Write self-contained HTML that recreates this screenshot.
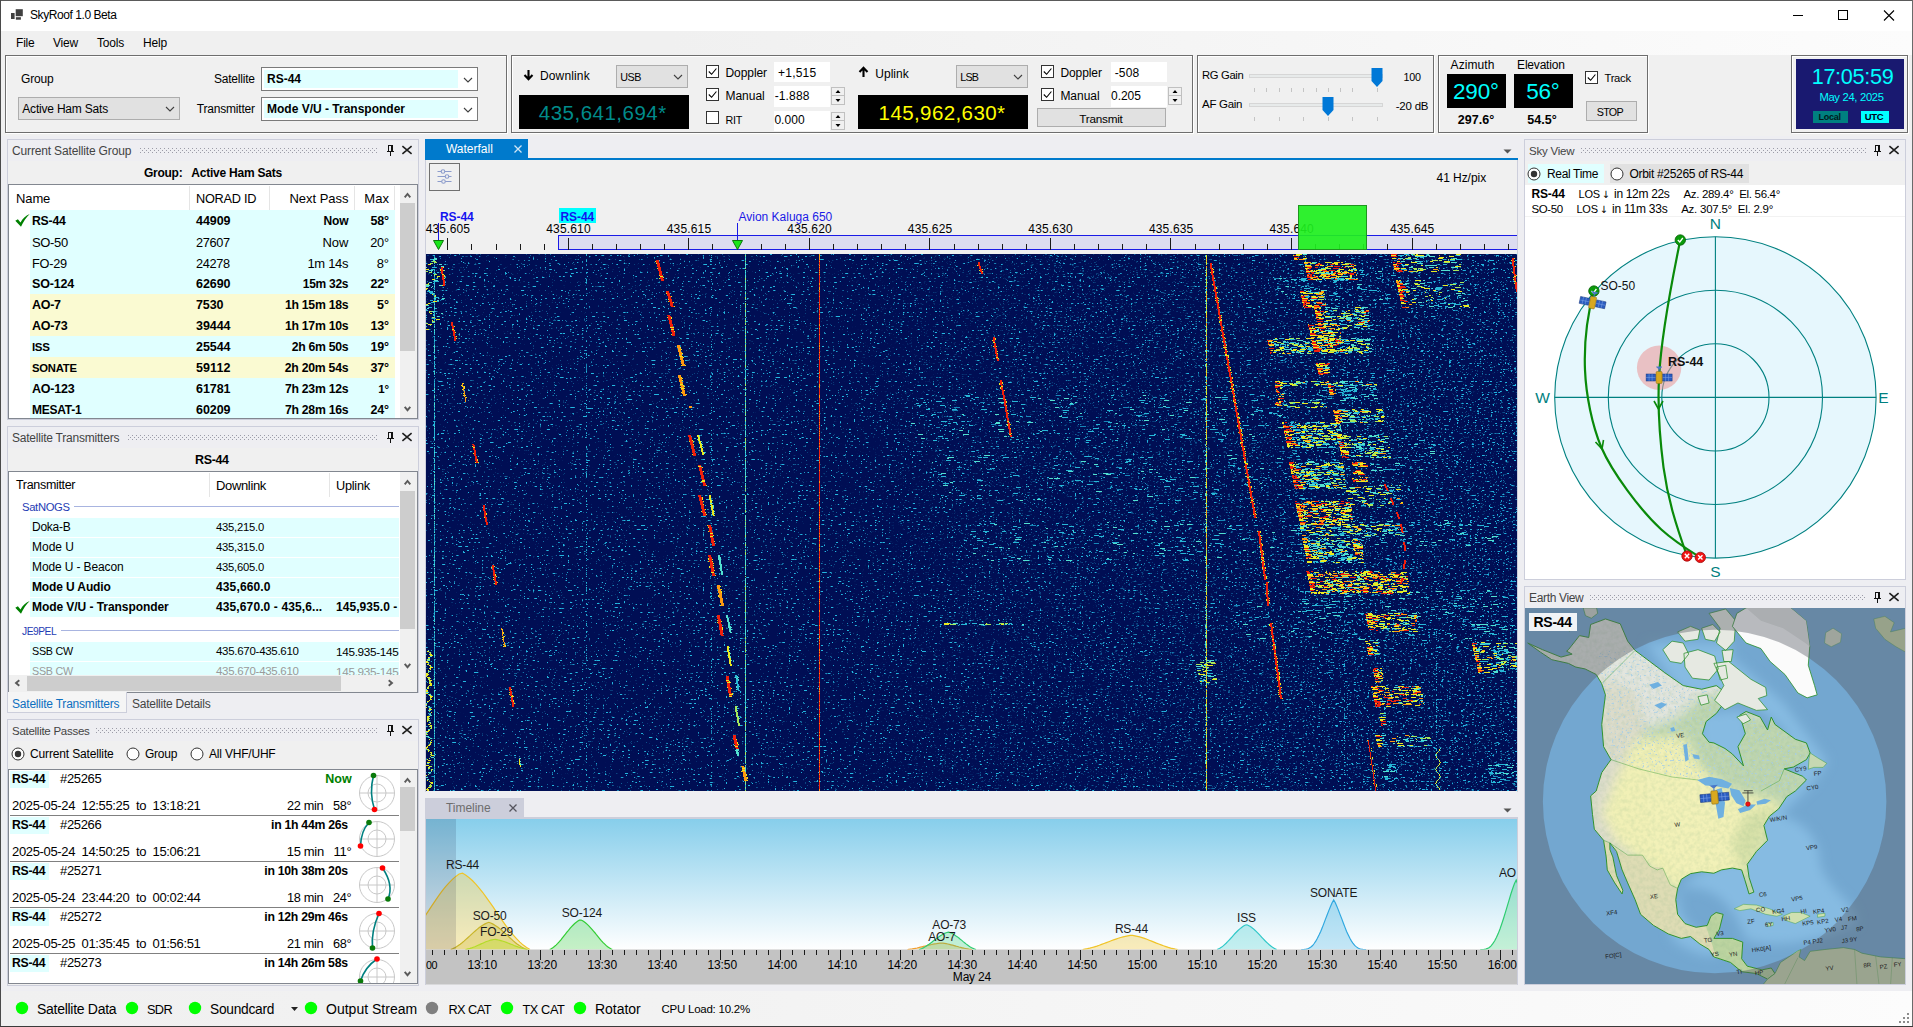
<!DOCTYPE html>
<html><head><meta charset="utf-8"><title>SkyRoof 1.0 Beta</title>
<style>
html,body{margin:0;padding:0;width:1913px;height:1027px;overflow:hidden;background:#f0f0f0;}
body{font-family:"Liberation Sans",sans-serif;font-size:12px;color:#000;position:relative;}
.a{position:absolute;display:block;}
.t{position:absolute;white-space:nowrap;}
svg text{font-family:"Liberation Sans",sans-serif;}
</style></head><body>
<!-- p1_top -->
<div class="a" style="left:0px;top:0px;width:1913px;height:1027px;background:#f0f0f0;"></div>
<div class="a" style="left:0px;top:0px;width:1913px;height:31px;background:#ffffff;"></div>
<div class="a" style="left:1px;top:31px;width:1911px;height:24px;background:linear-gradient(90deg,#f0f0f0 0%,#f0f0f0 35%,#fcfcfc 100%);"></div>
<div class="a" style="left:0px;top:0px;width:1913px;height:1px;background:#5a5a5a;"></div>
<div class="a" style="left:0px;top:0px;width:1px;height:1027px;background:#4a4a4a;"></div>
<div class="a" style="left:1912px;top:0px;width:1px;height:1027px;background:#6a6a6a;"></div>
<div class="a" style="left:0px;top:1026px;width:1913px;height:1px;background:#3a3a3a;"></div>
<svg class="a" style="left:10px;top:8px" width="14" height="13" viewBox="0 0 14 13"><rect x="5.7" y="1.2" width="7.1" height="7" fill="#404040"/><rect x="1" y="5" width="3.6" height="6" fill="#404040"/><rect x="5.9" y="9.2" width="5" height="2.5" fill="#404040"/></svg>
<div class="t" style="top:7px;height:17px;line-height:17px;font-size:12px;letter-spacing:-0.43px;left:30px;">SkyRoof 1.0 Beta</div>
<svg class="a" style="left:1780px;top:1px" width="132" height="30" viewBox="0 0 132 30"><path d="M13 14.5h10" stroke="#000" stroke-width="1" fill="none"/><rect x="58.5" y="9.5" width="9" height="9" stroke="#000" fill="none"/><path d="M104 9.5l10 10M114 9.5l-10 10" stroke="#000" stroke-width="1.1" fill="none"/></svg>
<div class="t" style="top:35px;height:17px;line-height:17px;font-size:12px;letter-spacing:-0.2px;left:16px;">File</div>
<div class="t" style="top:35px;height:17px;line-height:17px;font-size:12px;letter-spacing:-0.2px;left:53px;">View</div>
<div class="t" style="top:35px;height:17px;line-height:17px;font-size:12px;letter-spacing:-0.2px;left:97px;">Tools</div>
<div class="t" style="top:35px;height:17px;line-height:17px;font-size:12px;letter-spacing:-0.2px;left:143px;">Help</div>
<div class="a" style="left:5px;top:55px;width:502px;height:78px;box-sizing:border-box;border:1px solid #6e6e6e;box-shadow:inset 1px 1px 0 #fff, 1px 1px 0 #fff;"></div>
<div class="a" style="left:511px;top:55px;width:682px;height:78px;box-sizing:border-box;border:1px solid #6e6e6e;box-shadow:inset 1px 1px 0 #fff, 1px 1px 0 #fff;"></div>
<div class="a" style="left:1197px;top:55px;width:237px;height:78px;box-sizing:border-box;border:1px solid #6e6e6e;box-shadow:inset 1px 1px 0 #fff, 1px 1px 0 #fff;"></div>
<div class="a" style="left:1438px;top:55px;width:210px;height:78px;box-sizing:border-box;border:1px solid #6e6e6e;box-shadow:inset 1px 1px 0 #fff, 1px 1px 0 #fff;"></div>
<div class="a" style="left:1791px;top:55px;width:117px;height:78px;box-sizing:border-box;border:1px solid #6e6e6e;box-shadow:inset 1px 1px 0 #fff, 1px 1px 0 #fff;"></div>
<div class="t" style="top:71px;height:17px;line-height:17px;font-size:12px;letter-spacing:-0.2px;left:21px;">Group</div>
<div class="a" style="left:18px;top:97px;width:162px;height:23px;background:#e1e1e1;box-sizing:border-box;border:1px solid #adadad;"></div><div class="t" style="top:101px;height:17px;line-height:17px;font-size:12px;letter-spacing:-0.2px;left:22.3px;">Active Ham Sats</div><svg class="a" style="left:165px;top:105.5px" width="10" height="7" viewBox="0 0 10 7"><path d="M1 1l4 4 4-4" stroke="#404040" stroke-width="1.1" fill="none"/></svg>
<div class="t" style="top:71px;height:17px;line-height:17px;font-size:12px;letter-spacing:-0.2px;right:1658.2px;text-align:right;">Satellite</div>
<div class="t" style="top:101px;height:17px;line-height:17px;font-size:12px;letter-spacing:-0.2px;right:1658.2px;text-align:right;">Transmitter</div>
<div class="a" style="left:261px;top:67px;width:217px;height:24px;background:#fff;box-sizing:border-box;border:1px solid #7a7a7a;"></div><div class="a" style="left:264px;top:70px;width:194px;height:18px;background:#e0ffff;"></div><div class="t" style="top:71px;height:17px;line-height:17px;font-size:12px;font-weight:bold;left:267px;">RS-44</div><svg class="a" style="left:463px;top:76.5px" width="10" height="7" viewBox="0 0 10 7"><path d="M1 1l4 4 4-4" stroke="#404040" stroke-width="1.1" fill="none"/></svg>
<div class="a" style="left:261px;top:97px;width:217px;height:24px;background:#fff;box-sizing:border-box;border:1px solid #7a7a7a;"></div><div class="a" style="left:264px;top:100px;width:194px;height:18px;background:#e0ffff;"></div><div class="t" style="top:101px;height:17px;line-height:17px;font-size:12px;font-weight:bold;left:267px;">Mode V/U - Transponder</div><svg class="a" style="left:463px;top:106.5px" width="10" height="7" viewBox="0 0 10 7"><path d="M1 1l4 4 4-4" stroke="#404040" stroke-width="1.1" fill="none"/></svg>
<svg class="a" style="left:523px;top:69px" width="11" height="12" viewBox="0 0 11 12"><path d="M5.5 1v9M1.5 6l4 4.2 4-4.2" stroke="#000" stroke-width="2.1" fill="none"/></svg>
<div class="t" style="top:68px;height:17px;line-height:17px;font-size:12px;letter-spacing:0.139px;left:540px;">Downlink</div>
<div class="a" style="left:616px;top:65px;width:72px;height:23px;background:#e1e1e1;box-sizing:border-box;border:1px solid #adadad;"></div><div class="t" style="top:69px;height:17px;line-height:17px;font-size:10.75px;letter-spacing:-0.535px;left:620.3px;">USB</div><svg class="a" style="left:673px;top:73.5px" width="10" height="7" viewBox="0 0 10 7"><path d="M1 1l4 4 4-4" stroke="#404040" stroke-width="1.1" fill="none"/></svg>
<div class="a" style="left:519px;top:95px;width:170px;height:34px;background:#000;"></div>
<div class="t" style="top:97px;height:32px;line-height:32px;font-size:20.5px;color:#008b8b;letter-spacing:0.503px;left:402.75px;width:400px;text-align:center;">435,641,694*</div>
<div class="a" style="left:706px;top:65px;width:13px;height:13px;background:#fff;box-sizing:border-box;border:1px solid #333;"></div><svg class="a" style="left:706px;top:65px" width="13" height="13" viewBox="0 0 13 13"><path d="M2.8 6.5l2.8 2.8 4.8-5.8" stroke="#000" stroke-width="1.1" fill="none"/></svg>
<div class="t" style="top:65px;height:17px;line-height:17px;font-size:12px;letter-spacing:-0.074px;left:725.5px;">Doppler</div>
<div class="a" style="left:706px;top:88px;width:13px;height:13px;background:#fff;box-sizing:border-box;border:1px solid #333;"></div><svg class="a" style="left:706px;top:88px" width="13" height="13" viewBox="0 0 13 13"><path d="M2.8 6.5l2.8 2.8 4.8-5.8" stroke="#000" stroke-width="1.1" fill="none"/></svg>
<div class="t" style="top:88px;height:17px;line-height:17px;font-size:12px;letter-spacing:-0.026px;left:725.5px;">Manual</div>
<div class="a" style="left:706px;top:111px;width:13px;height:13px;background:#fff;box-sizing:border-box;border:1px solid #333;"></div>
<div class="t" style="top:112px;height:17px;line-height:17px;font-size:10.75px;letter-spacing:-0.272px;left:725.5px;">RIT</div>
<div class="a" style="left:774px;top:62px;width:56px;height:20px;background:#fff;"></div>
<div class="t" style="top:65px;height:17px;line-height:17px;font-size:12px;letter-spacing:0.228px;left:778px;">+1,515</div>
<div class="a" style="left:774px;top:86px;width:56px;height:21px;background:#fff;"></div>
<div class="t" style="top:88px;height:17px;line-height:17px;font-size:12px;letter-spacing:0.13px;left:774.7px;">-1.888</div>
<div class="a" style="left:774px;top:111px;width:56px;height:20px;background:#fff;"></div>
<div class="t" style="top:112px;height:17px;line-height:17px;font-size:12px;letter-spacing:0.035px;left:774.4px;">0.000</div>
<div class="a" style="left:831px;top:87px;width:14px;height:18px;background:#f0f0f0;box-sizing:border-box;border:1px solid #c0c0c0;"></div><div class="a" style="left:831px;top:95px;width:14px;height:1px;background:#c0c0c0;"></div><svg class="a" style="left:831px;top:87px" width="14" height="18" viewBox="0 0 14 18"><path d="M4.5 6l2.5-3 2.5 3zM4.5 12l2.5 3 2.5-3z" fill="#000"/></svg>
<div class="a" style="left:831px;top:112px;width:14px;height:18px;background:#f0f0f0;box-sizing:border-box;border:1px solid #c0c0c0;"></div><div class="a" style="left:831px;top:120px;width:14px;height:1px;background:#c0c0c0;"></div><svg class="a" style="left:831px;top:112px" width="14" height="18" viewBox="0 0 14 18"><path d="M4.5 6l2.5-3 2.5 3zM4.5 12l2.5 3 2.5-3z" fill="#000"/></svg>
<svg class="a" style="left:858px;top:66px" width="11" height="12" viewBox="0 0 11 12"><path d="M5.5 11V2M1.5 6l4-4.2 4 4.2" stroke="#000" stroke-width="2.1" fill="none"/></svg>
<div class="t" style="top:66px;height:17px;line-height:17px;font-size:12px;letter-spacing:0.059px;left:875.2px;">Uplink</div>
<div class="a" style="left:956px;top:65px;width:72px;height:23px;background:#e1e1e1;box-sizing:border-box;border:1px solid #adadad;"></div><div class="t" style="top:69px;height:17px;line-height:17px;font-size:10.75px;letter-spacing:-0.873px;left:960.3px;">LSB</div><svg class="a" style="left:1013px;top:73.5px" width="10" height="7" viewBox="0 0 10 7"><path d="M1 1l4 4 4-4" stroke="#404040" stroke-width="1.1" fill="none"/></svg>
<div class="a" style="left:858px;top:95px;width:170px;height:34px;background:#000;"></div>
<div class="t" style="top:97px;height:32px;line-height:32px;font-size:20.5px;color:#ffff00;letter-spacing:0.403px;left:742.0px;width:400px;text-align:center;">145,962,630*</div>
<div class="a" style="left:1041px;top:65px;width:13px;height:13px;background:#fff;box-sizing:border-box;border:1px solid #333;"></div><svg class="a" style="left:1041px;top:65px" width="13" height="13" viewBox="0 0 13 13"><path d="M2.8 6.5l2.8 2.8 4.8-5.8" stroke="#000" stroke-width="1.1" fill="none"/></svg>
<div class="t" style="top:65px;height:17px;line-height:17px;font-size:12px;letter-spacing:-0.074px;left:1060.4px;">Doppler</div>
<div class="a" style="left:1041px;top:88px;width:13px;height:13px;background:#fff;box-sizing:border-box;border:1px solid #333;"></div><svg class="a" style="left:1041px;top:88px" width="13" height="13" viewBox="0 0 13 13"><path d="M2.8 6.5l2.8 2.8 4.8-5.8" stroke="#000" stroke-width="1.1" fill="none"/></svg>
<div class="t" style="top:88px;height:17px;line-height:17px;font-size:12px;letter-spacing:-0.026px;left:1060.4px;">Manual</div>
<div class="a" style="left:1111px;top:62px;width:56px;height:20px;background:#fff;"></div>
<div class="t" style="top:65px;height:17px;line-height:17px;font-size:12px;letter-spacing:0.171px;left:1114.7px;">-508</div>
<div class="a" style="left:1111px;top:86px;width:56px;height:21px;background:#fff;"></div>
<div class="t" style="top:88px;height:17px;line-height:17px;font-size:12px;letter-spacing:-0.045px;left:1111px;">0.205</div>
<div class="a" style="left:1168px;top:87px;width:14px;height:18px;background:#f0f0f0;box-sizing:border-box;border:1px solid #c0c0c0;"></div><div class="a" style="left:1168px;top:95px;width:14px;height:1px;background:#c0c0c0;"></div><svg class="a" style="left:1168px;top:87px" width="14" height="18" viewBox="0 0 14 18"><path d="M4.5 6l2.5-3 2.5 3zM4.5 12l2.5 3 2.5-3z" fill="#000"/></svg>
<div class="a" style="left:1037px;top:108px;width:129px;height:19px;background:#e1e1e1;box-sizing:border-box;border:1px solid #adadad;"></div>
<div class="t" style="top:110px;height:17px;line-height:17px;font-size:11.75px;letter-spacing:-0.232px;left:1079.2px;">Transmit</div>
<div class="t" style="top:67px;height:17px;line-height:17px;font-size:11.25px;letter-spacing:-0.338px;left:1202px;">RG Gain</div>
<div class="t" style="top:96px;height:17px;line-height:17px;font-size:11.5px;letter-spacing:-0.283px;left:1202px;">AF Gain</div>
<div class="a" style="left:1249px;top:74px;width:134px;height:4px;background:#e7eaea;box-sizing:border-box;border:1px solid #d6d6d6;"></div><svg class="a" style="left:1371px;top:67px" width="12" height="21" viewBox="0 0 12 21"><path d="M0.5 1h11v13l-5.5 6-5.5-6z" fill="#0078d7"/></svg><div class="a" style="left:1254px;top:88px;width:1px;height:4px;background:#c4c4c4;"></div><div class="a" style="left:1266px;top:88px;width:1px;height:4px;background:#c4c4c4;"></div><div class="a" style="left:1279px;top:88px;width:1px;height:4px;background:#c4c4c4;"></div><div class="a" style="left:1291px;top:88px;width:1px;height:4px;background:#c4c4c4;"></div><div class="a" style="left:1303px;top:88px;width:1px;height:4px;background:#c4c4c4;"></div><div class="a" style="left:1316px;top:88px;width:1px;height:4px;background:#c4c4c4;"></div><div class="a" style="left:1328px;top:88px;width:1px;height:4px;background:#c4c4c4;"></div><div class="a" style="left:1340px;top:88px;width:1px;height:4px;background:#c4c4c4;"></div><div class="a" style="left:1352px;top:88px;width:1px;height:4px;background:#c4c4c4;"></div><div class="a" style="left:1377px;top:88px;width:1px;height:4px;background:#c4c4c4;"></div>
<div class="a" style="left:1249px;top:103px;width:134px;height:4px;background:#e7eaea;box-sizing:border-box;border:1px solid #d6d6d6;"></div><svg class="a" style="left:1322px;top:96px" width="12" height="21" viewBox="0 0 12 21"><path d="M0.5 1h11v13l-5.5 6-5.5-6z" fill="#0078d7"/></svg><div class="a" style="left:1254px;top:117px;width:1px;height:4px;background:#c4c4c4;"></div><div class="a" style="left:1279px;top:117px;width:1px;height:4px;background:#c4c4c4;"></div><div class="a" style="left:1303px;top:117px;width:1px;height:4px;background:#c4c4c4;"></div><div class="a" style="left:1328px;top:117px;width:1px;height:4px;background:#c4c4c4;"></div><div class="a" style="left:1352px;top:117px;width:1px;height:4px;background:#c4c4c4;"></div><div class="a" style="left:1377px;top:117px;width:1px;height:4px;background:#c4c4c4;"></div>
<div class="t" style="top:69px;height:17px;line-height:17px;font-size:10.75px;letter-spacing:-0.211px;right:492.21px;text-align:right;">100</div>
<div class="t" style="top:98px;height:17px;line-height:17px;font-size:11.5px;letter-spacing:-0.23px;right:484.73px;text-align:right;">-20 dB</div>
<div class="t" style="top:57px;height:17px;line-height:17px;font-size:12px;letter-spacing:0.093px;left:1272.55px;width:400px;text-align:center;">Azimuth</div>
<div class="t" style="top:57px;height:17px;line-height:17px;font-size:12px;letter-spacing:-0.2px;left:1340.9px;width:400px;text-align:center;">Elevation</div>
<div class="a" style="left:1447px;top:74px;width:59px;height:34px;background:#000;"></div>
<div class="a" style="left:1514px;top:74px;width:59px;height:34px;background:#000;"></div>
<div class="t" style="top:76px;height:32px;line-height:32px;font-size:22.5px;color:#00ffff;letter-spacing:-0.2px;left:1275.9px;width:400px;text-align:center;">290°</div>
<div class="t" style="top:76px;height:32px;line-height:32px;font-size:22.5px;color:#00ffff;letter-spacing:-0.2px;left:1342.9px;width:400px;text-align:center;">56°</div>
<div class="t" style="top:112px;height:17px;line-height:17px;font-size:12.5px;font-weight:bold;left:1276.0px;width:400px;text-align:center;">297.6°</div>
<div class="t" style="top:112px;height:17px;line-height:17px;font-size:12.5px;font-weight:bold;left:1342.0px;width:400px;text-align:center;">54.5°</div>
<div class="a" style="left:1585px;top:71px;width:13px;height:13px;background:#fff;box-sizing:border-box;border:1px solid #333;"></div><svg class="a" style="left:1585px;top:71px" width="13" height="13" viewBox="0 0 13 13"><path d="M2.8 6.5l2.8 2.8 4.8-5.8" stroke="#000" stroke-width="1.1" fill="none"/></svg>
<div class="t" style="top:70px;height:17px;line-height:17px;font-size:11.25px;letter-spacing:-0.301px;left:1604.5px;">Track</div>
<div class="a" style="left:1586px;top:101px;width:51px;height:20px;background:#e1e1e1;box-sizing:border-box;border:1px solid #adadad;"></div>
<div class="t" style="top:104px;height:17px;line-height:17px;font-size:10.75px;letter-spacing:-0.668px;left:1409.87px;width:400px;text-align:center;">STOP</div>
<div class="a" style="left:1796px;top:59px;width:108px;height:70px;background:#191970;"></div>
<div class="t" style="top:61px;height:32px;line-height:32px;font-size:21.65px;color:#00ffff;letter-spacing:-0.308px;left:1652.55px;width:400px;text-align:center;">17:05:59</div>
<div class="t" style="top:89px;height:17px;line-height:17px;font-size:11.25px;color:#00ffff;letter-spacing:-0.322px;left:1651.54px;width:400px;text-align:center;">May 24, 2025</div>
<div class="a" style="left:1813px;top:111px;width:35px;height:12px;background:#008080;"></div>
<div class="t" style="top:108.5px;height:16px;line-height:16px;font-size:9.0px;color:#001a1a;font-weight:bold;letter-spacing:-0.261px;left:1629.67px;width:400px;text-align:center;">Local</div>
<div class="a" style="left:1861px;top:111px;width:28px;height:12px;background:#00ffff;"></div>
<div class="t" style="top:108.5px;height:16px;line-height:16px;font-size:9.5px;color:#00001a;font-weight:bold;letter-spacing:-0.241px;left:1674.08px;width:400px;text-align:center;">UTC</div>
<!-- p2_left -->
<div class="a" style="left:1px;top:136px;width:1911px;height:855px;background:#eeeef2;"></div>
<div class="a" style="left:7px;top:139px;width:412px;height:281px;background:#f0f0f0;box-sizing:border-box;border:1px solid #cccedb;"></div><div class="a" style="left:8px;top:140px;width:410px;height:21px;background:#eeeef2;"></div><div class="t" style="top:143px;height:17px;line-height:17px;font-size:12px;color:#444;letter-spacing:-0.153px;left:12px;">Current Satellite Group</div><svg class="a" style="left:140px;top:148px" width="238" height="5" viewBox="0 0 238 5"><defs><pattern id="g140_148" width="4" height="4" patternUnits="userSpaceOnUse"><rect x="0" y="0" width="1" height="1" fill="#9c9ca8"/><rect x="2" y="2" width="1" height="1" fill="#9c9ca8"/></pattern></defs><rect width="238" height="5" fill="url(#g140_148)"/></svg><svg class="a" style="left:386px;top:145px" width="10" height="12" viewBox="0 0 10 12" shape-rendering="crispEdges"><path d="M2 0h5v1h-5zM2 1h1v5h-1zM5 1h2v5h-2zM1 6h7v1h-7zM4 7h1v4h-1z" fill="#111"/></svg><svg class="a" style="left:401px;top:144px" width="12" height="12" viewBox="-6 -6 12 12"><path d="M-4.6 -3.9L4.6 3.9M4.6 -3.9L-4.6 3.9" stroke="#1e1e1e" stroke-width="1.6" fill="none"/></svg>
<div class="t" style="top:165px;height:17px;line-height:17px;font-size:12.0px;font-weight:bold;letter-spacing:-0.233px;left:12.88px;width:400px;text-align:center;">Group:&nbsp;&nbsp; Active Ham Sats</div>
<div class="a" style="left:8px;top:184px;width:410px;height:235px;background:#fff;box-sizing:border-box;border:1px solid #828790;"></div>
<div class="a" style="left:189px;top:186px;width:1px;height:24px;background:#e5e5e5;"></div>
<div class="a" style="left:269px;top:186px;width:1px;height:24px;background:#e5e5e5;"></div>
<div class="a" style="left:354px;top:186px;width:1px;height:24px;background:#e5e5e5;"></div>
<div class="a" style="left:394px;top:186px;width:1px;height:24px;background:#e5e5e5;"></div>
<div class="t" style="top:190px;height:17px;line-height:17px;font-size:13px;letter-spacing:-0.119px;left:16px;">Name</div>
<div class="t" style="top:190px;height:17px;line-height:17px;font-size:12.75px;letter-spacing:-0.255px;left:196px;">NORAD ID</div>
<div class="t" style="top:190px;height:17px;line-height:17px;font-size:13px;letter-spacing:-0.027px;right:1564.53px;text-align:right;">Next Pass</div>
<div class="t" style="top:190px;height:17px;line-height:17px;font-size:13px;letter-spacing:0.081px;right:1523.92px;text-align:right;">Max</div>
<div class="a" style="left:30px;top:210px;width:365px;height:21px;background:#e0ffff;"></div>
<div class="t" style="top:213px;height:17px;line-height:17px;font-size:12.25px;font-weight:bold;letter-spacing:-0.224px;left:32px;">RS-44</div>
<div class="t" style="top:213px;height:17px;line-height:17px;font-size:12.5px;font-weight:bold;letter-spacing:-0.051px;left:196px;">44909</div>
<div class="t" style="top:213px;height:17px;line-height:17px;font-size:12.0px;font-weight:bold;letter-spacing:-0.21px;right:1564.71px;text-align:right;">Now</div>
<div class="t" style="top:213px;height:17px;line-height:17px;font-size:12.5px;font-weight:bold;letter-spacing:-0.167px;right:1524.17px;text-align:right;">58°</div>
<div class="a" style="left:30px;top:231px;width:365px;height:21px;background:#e0ffff;"></div>
<div class="t" style="top:234px;height:17px;line-height:17px;font-size:13px;letter-spacing:-0.334px;left:32px;">SO-50</div>
<div class="t" style="top:234px;height:17px;line-height:17px;font-size:12.75px;letter-spacing:-0.31px;left:196px;">27607</div>
<div class="t" style="top:234px;height:17px;line-height:17px;font-size:13px;letter-spacing:0.031px;right:1564.47px;text-align:right;">Now</div>
<div class="t" style="top:234px;height:17px;line-height:17px;font-size:12.75px;letter-spacing:-0.293px;right:1524.29px;text-align:right;">20°</div>
<div class="a" style="left:30px;top:252px;width:365px;height:21px;background:#e0ffff;"></div>
<div class="t" style="top:255px;height:17px;line-height:17px;font-size:12.75px;letter-spacing:-0.266px;left:32px;">FO-29</div>
<div class="t" style="top:255px;height:17px;line-height:17px;font-size:12.75px;letter-spacing:-0.31px;left:196px;">24278</div>
<div class="t" style="top:255px;height:17px;line-height:17px;font-size:13px;letter-spacing:-0.305px;right:1564.81px;text-align:right;">1m 14s</div>
<div class="t" style="top:255px;height:17px;line-height:17px;font-size:13px;letter-spacing:-0.214px;right:1524.21px;text-align:right;">8°</div>
<div class="a" style="left:30px;top:273px;width:365px;height:21px;background:#e0ffff;"></div>
<div class="t" style="top:276px;height:17px;line-height:17px;font-size:12.5px;font-weight:bold;letter-spacing:-0.196px;left:32px;">SO-124</div>
<div class="t" style="top:276px;height:17px;line-height:17px;font-size:12.5px;font-weight:bold;letter-spacing:-0.051px;left:196px;">62690</div>
<div class="t" style="top:276px;height:17px;line-height:17px;font-size:12.0px;font-weight:bold;letter-spacing:-0.281px;right:1564.78px;text-align:right;">15m 32s</div>
<div class="t" style="top:276px;height:17px;line-height:17px;font-size:12.5px;font-weight:bold;letter-spacing:-0.167px;right:1524.17px;text-align:right;">22°</div>
<div class="a" style="left:30px;top:294px;width:365px;height:21px;background:#fafad2;"></div>
<div class="t" style="top:297px;height:17px;line-height:17px;font-size:12.5px;font-weight:bold;letter-spacing:-0.291px;left:32px;">AO-7</div>
<div class="t" style="top:297px;height:17px;line-height:17px;font-size:12.5px;font-weight:bold;letter-spacing:-0.126px;left:196px;">7530</div>
<div class="t" style="top:297px;height:17px;line-height:17px;font-size:12.25px;font-weight:bold;letter-spacing:-0.285px;right:1564.79px;text-align:right;">1h 15m 18s</div>
<div class="t" style="top:297px;height:17px;line-height:17px;font-size:12.5px;font-weight:bold;letter-spacing:0.025px;right:1523.97px;text-align:right;">5°</div>
<div class="a" style="left:30px;top:315px;width:365px;height:21px;background:#fafad2;"></div>
<div class="t" style="top:318px;height:17px;line-height:17px;font-size:12.5px;font-weight:bold;letter-spacing:-0.303px;left:32px;">AO-73</div>
<div class="t" style="top:318px;height:17px;line-height:17px;font-size:12.5px;font-weight:bold;letter-spacing:-0.051px;left:196px;">39444</div>
<div class="t" style="top:318px;height:17px;line-height:17px;font-size:12.25px;font-weight:bold;letter-spacing:-0.285px;right:1564.79px;text-align:right;">1h 17m 10s</div>
<div class="t" style="top:318px;height:17px;line-height:17px;font-size:12.5px;font-weight:bold;letter-spacing:-0.167px;right:1524.17px;text-align:right;">13°</div>
<div class="a" style="left:30px;top:336px;width:365px;height:21px;background:#e0ffff;"></div>
<div class="t" style="top:339px;height:17px;line-height:17px;font-size:11.5px;font-weight:bold;letter-spacing:-0.346px;left:32px;">ISS</div>
<div class="t" style="top:339px;height:17px;line-height:17px;font-size:12.5px;font-weight:bold;letter-spacing:-0.051px;left:196px;">25544</div>
<div class="t" style="top:339px;height:17px;line-height:17px;font-size:12.25px;font-weight:bold;letter-spacing:-0.327px;right:1564.83px;text-align:right;">2h 6m 50s</div>
<div class="t" style="top:339px;height:17px;line-height:17px;font-size:12.5px;font-weight:bold;letter-spacing:-0.167px;right:1524.17px;text-align:right;">19°</div>
<div class="a" style="left:30px;top:357px;width:365px;height:21px;background:#fafad2;"></div>
<div class="t" style="top:360px;height:17px;line-height:17px;font-size:11.25px;font-weight:bold;letter-spacing:-0.207px;left:32px;">SONATE</div>
<div class="t" style="top:360px;height:17px;line-height:17px;font-size:12.5px;font-weight:bold;letter-spacing:0.087px;left:196px;">59112</div>
<div class="t" style="top:360px;height:17px;line-height:17px;font-size:12.25px;font-weight:bold;letter-spacing:-0.255px;right:1564.76px;text-align:right;">2h 20m 54s</div>
<div class="t" style="top:360px;height:17px;line-height:17px;font-size:12.5px;font-weight:bold;letter-spacing:-0.167px;right:1524.17px;text-align:right;">37°</div>
<div class="a" style="left:30px;top:378px;width:365px;height:21px;background:#e0ffff;"></div>
<div class="t" style="top:381px;height:17px;line-height:17px;font-size:12.5px;font-weight:bold;letter-spacing:-0.211px;left:32px;">AO-123</div>
<div class="t" style="top:381px;height:17px;line-height:17px;font-size:12.5px;font-weight:bold;letter-spacing:-0.051px;left:196px;">61781</div>
<div class="t" style="top:381px;height:17px;line-height:17px;font-size:12.25px;font-weight:bold;letter-spacing:-0.285px;right:1564.79px;text-align:right;">7h 23m 12s</div>
<div class="t" style="top:381px;height:17px;line-height:17px;font-size:11.5px;font-weight:bold;letter-spacing:-0.247px;right:1524.25px;text-align:right;">1°</div>
<div class="a" style="left:30px;top:399px;width:365px;height:19px;background:#e0ffff;"></div>
<div class="t" style="top:402px;height:17px;line-height:17px;font-size:12.0px;font-weight:bold;letter-spacing:-0.245px;left:32px;">MESAT-1</div>
<div class="t" style="top:402px;height:17px;line-height:17px;font-size:12.5px;font-weight:bold;letter-spacing:-0.051px;left:196px;">60209</div>
<div class="t" style="top:402px;height:17px;line-height:17px;font-size:12.25px;font-weight:bold;letter-spacing:-0.285px;right:1564.79px;text-align:right;">7h 28m 16s</div>
<div class="t" style="top:402px;height:17px;line-height:17px;font-size:12.5px;font-weight:bold;letter-spacing:-0.167px;right:1524.17px;text-align:right;">24°</div>
<svg class="a" style="left:15px;top:214px" width="15" height="13" viewBox="0 0 15 13"><path d="M0.3 6.8l2.6-1.6 2.6 3.2C7.5 4.5 10.5 1.8 14.7 0C11.2 3.6 8.2 7.8 6 12.8z" fill="#008000"/></svg>
<div class="a" style="left:400px;top:185px;width:17px;height:233px;background:#f0f0f0;"></div><div class="a" style="left:400px;top:203px;width:15px;height:148px;background:#cdcdcd;"></div><svg class="a" style="left:400px;top:185px" width="17" height="17" viewBox="0 0 17 17"><path d="M4.7 12.3l2.8-3.3 2.8 3.3" stroke="#5a5a5a" stroke-width="1.9" fill="none"/></svg><svg class="a" style="left:400px;top:401px" width="17" height="17" viewBox="0 0 17 17"><path d="M4.7 5.9l2.8 3.3 2.8-3.3" stroke="#5a5a5a" stroke-width="1.9" fill="none"/></svg>
<div class="a" style="left:7px;top:426px;width:412px;height:267px;background:#f0f0f0;box-sizing:border-box;border:1px solid #cccedb;"></div><div class="a" style="left:8px;top:427px;width:410px;height:21px;background:#eeeef2;"></div><div class="t" style="top:430px;height:17px;line-height:17px;font-size:12px;color:#444;letter-spacing:-0.22px;left:12px;">Satellite Transmitters</div><svg class="a" style="left:128px;top:435px" width="250" height="5" viewBox="0 0 250 5"><defs><pattern id="g128_435" width="4" height="4" patternUnits="userSpaceOnUse"><rect x="0" y="0" width="1" height="1" fill="#9c9ca8"/><rect x="2" y="2" width="1" height="1" fill="#9c9ca8"/></pattern></defs><rect width="250" height="5" fill="url(#g128_435)"/></svg><svg class="a" style="left:386px;top:432px" width="10" height="12" viewBox="0 0 10 12" shape-rendering="crispEdges"><path d="M2 0h5v1h-5zM2 1h1v5h-1zM5 1h2v5h-2zM1 6h7v1h-7zM4 7h1v4h-1z" fill="#111"/></svg><svg class="a" style="left:401px;top:431px" width="12" height="12" viewBox="-6 -6 12 12"><path d="M-4.6 -3.9L4.6 3.9M4.6 -3.9L-4.6 3.9" stroke="#1e1e1e" stroke-width="1.6" fill="none"/></svg>
<div class="t" style="top:452px;height:17px;line-height:17px;font-size:12.5px;font-weight:bold;letter-spacing:-0.346px;left:11.83px;width:400px;text-align:center;">RS-44</div>
<div class="a" style="left:8px;top:471px;width:410px;height:222px;background:#fff;box-sizing:border-box;border:1px solid #828790;"></div>
<div class="a" style="left:209px;top:473px;width:1px;height:24px;background:#e5e5e5;"></div>
<div class="a" style="left:329px;top:473px;width:1px;height:24px;background:#e5e5e5;"></div>
<div class="t" style="top:477px;height:17px;line-height:17px;font-size:12.5px;letter-spacing:-0.321px;left:16px;">Transmitter</div>
<div class="t" style="top:477px;height:17px;line-height:17px;font-size:13px;letter-spacing:-0.343px;left:216px;">Downlink</div>
<div class="t" style="top:477px;height:17px;line-height:17px;font-size:12.75px;letter-spacing:-0.255px;left:336px;">Uplink</div>
<div class="t" style="top:499px;height:17px;line-height:17px;font-size:11.25px;color:#1e3cb4;letter-spacing:-0.331px;left:22px;">SatNOGS</div><div class="a" style="left:74px;top:506px;width:325px;height:1px;background:#a8b4e0;"></div>
<div class="a" style="left:30px;top:518px;width:369px;height:19px;background:#e0ffff;"></div><div class="t" style="top:519px;height:17px;line-height:17px;font-size:12px;letter-spacing:-0.252px;left:32px;">Doka-B</div><div class="t" style="top:519px;height:17px;line-height:17px;font-size:11.25px;letter-spacing:-0.227px;left:216px;">435,215.0</div>
<div class="a" style="left:30px;top:538px;width:369px;height:19px;background:#e0ffff;"></div><div class="t" style="top:539px;height:17px;line-height:17px;font-size:12px;letter-spacing:-0.019px;left:32px;">Mode U</div><div class="t" style="top:539px;height:17px;line-height:17px;font-size:11.25px;letter-spacing:-0.227px;left:216px;">435,315.0</div>
<div class="a" style="left:30px;top:558px;width:369px;height:19px;background:#e0ffff;"></div><div class="t" style="top:559px;height:17px;line-height:17px;font-size:12px;letter-spacing:-0.118px;left:32px;">Mode U - Beacon</div><div class="t" style="top:559px;height:17px;line-height:17px;font-size:11.25px;letter-spacing:-0.227px;left:216px;">435,605.0</div>
<div class="a" style="left:30px;top:578px;width:369px;height:19px;background:#e0ffff;"></div><div class="t" style="top:579px;height:17px;line-height:17px;font-size:12px;font-weight:bold;letter-spacing:-0.125px;left:32px;">Mode U Audio</div><div class="t" style="top:579px;height:17px;line-height:17px;font-size:12px;font-weight:bold;letter-spacing:0.136px;left:216px;">435,660.0</div>
<div class="a" style="left:30px;top:598px;width:369px;height:19px;background:#e0ffff;"></div><div class="t" style="top:599px;height:17px;line-height:17px;font-size:12px;font-weight:bold;letter-spacing:-0.059px;left:32px;">Mode V/U - Transponder</div><div class="t" style="top:599px;height:17px;line-height:17px;font-size:12px;font-weight:bold;letter-spacing:0.112px;left:216px;">435,670.0 - 435,6...</div><div class="a" style="left:329px;top:598px;width:70px;height:19px;overflow:hidden;"><div class="t" style="top:1px;height:17px;line-height:17px;font-size:12px;font-weight:bold;letter-spacing:0.055px;left:7px;">145,935.0 - 145,9</div></div>
<svg class="a" style="left:15px;top:601px" width="15" height="13" viewBox="0 0 15 13"><path d="M0.3 6.8l2.6-1.6 2.6 3.2C7.5 4.5 10.5 1.8 14.7 0C11.2 3.6 8.2 7.8 6 12.8z" fill="#008000"/></svg>
<div class="t" style="top:623px;height:17px;line-height:17px;font-size:10.25px;color:#1e3cb4;letter-spacing:-0.473px;left:22px;">JE9PEL</div><div class="a" style="left:61px;top:630px;width:338px;height:1px;background:#a8b4e0;"></div>
<div class="a" style="left:30px;top:642px;width:369px;height:19px;background:#e0ffff;"></div><div class="t" style="top:643px;height:17px;line-height:17px;font-size:10.75px;letter-spacing:-0.268px;left:32px;">SSB CW</div><div class="t" style="top:643px;height:17px;line-height:17px;font-size:11.5px;letter-spacing:-0.284px;left:216px;">435.670-435.610</div><div class="a" style="left:329px;top:642px;width:70px;height:19px;overflow:hidden;"><div class="t" style="top:1px;height:17px;line-height:17px;font-size:11.75px;letter-spacing:-0.323px;left:7px;">145.935-145.995</div></div>
<div class="a" style="left:30px;top:662px;width:369px;height:13px;overflow:hidden;"><div class="a" style="left:0px;top:0px;width:369px;height:19px;background:#e0ffff;"></div><div class="t" style="top:1px;height:17px;line-height:17px;font-size:10.75px;color:#9a9a9a;letter-spacing:-0.268px;left:2px;">SSB CW</div><div class="t" style="top:1px;height:17px;line-height:17px;font-size:11.5px;color:#9a9a9a;letter-spacing:-0.284px;left:186px;">435.670-435.610</div><div class="t" style="top:1px;height:17px;line-height:17px;font-size:11.75px;color:#9a9a9a;letter-spacing:-0.323px;left:306px;">145.935-145.995</div></div>
<div class="a" style="left:400px;top:472px;width:17px;height:203px;background:#f0f0f0;"></div><div class="a" style="left:400px;top:491px;width:15px;height:138px;background:#cdcdcd;"></div><svg class="a" style="left:400px;top:472px" width="17" height="17" viewBox="0 0 17 17"><path d="M4.7 12.3l2.8-3.3 2.8 3.3" stroke="#5a5a5a" stroke-width="1.9" fill="none"/></svg><svg class="a" style="left:400px;top:658px" width="17" height="17" viewBox="0 0 17 17"><path d="M4.7 5.9l2.8 3.3 2.8-3.3" stroke="#5a5a5a" stroke-width="1.9" fill="none"/></svg>
<div class="a" style="left:9px;top:675px;width:391px;height:17px;background:#f0f0f0;"></div>
<div class="a" style="left:400px;top:675px;width:17px;height:17px;background:#f0f0f0;"></div>
<div class="a" style="left:27px;top:676px;width:314px;height:15px;background:#cdcdcd;"></div>
<svg class="a" style="left:9px;top:675px" width="17" height="17" viewBox="0 0 17 17"><path d="M10.3 5.2l-3.3 2.8 3.3 2.8" stroke="#5a5a5a" stroke-width="1.9" fill="none"/></svg>
<svg class="a" style="left:382px;top:675px" width="17" height="17" viewBox="0 0 17 17"><path d="M6.7 5.2l3.3 2.8-3.3 2.8" stroke="#5a5a5a" stroke-width="1.9" fill="none"/></svg>
<div class="a" style="left:7px;top:692px;width:120px;height:21px;background:#f5f5f5;box-sizing:border-box;border:1px solid #cccedb;border-top:none;"></div>
<div class="t" style="top:696px;height:17px;line-height:17px;font-size:12px;color:#0e70c0;letter-spacing:-0.211px;left:12px;">Satellite Transmitters</div>
<div class="t" style="top:696px;height:17px;line-height:17px;font-size:12px;color:#444;letter-spacing:-0.253px;left:132px;">Satellite Details</div>
<div class="a" style="left:7px;top:719px;width:412px;height:267px;background:#f0f0f0;box-sizing:border-box;border:1px solid #cccedb;"></div><div class="a" style="left:8px;top:720px;width:410px;height:21px;background:#eeeef2;"></div><div class="t" style="top:723px;height:17px;line-height:17px;font-size:11.5px;color:#444;letter-spacing:-0.27px;left:12px;">Satellite Passes</div><svg class="a" style="left:96px;top:728px" width="282" height="5" viewBox="0 0 282 5"><defs><pattern id="g96_728" width="4" height="4" patternUnits="userSpaceOnUse"><rect x="0" y="0" width="1" height="1" fill="#9c9ca8"/><rect x="2" y="2" width="1" height="1" fill="#9c9ca8"/></pattern></defs><rect width="282" height="5" fill="url(#g96_728)"/></svg><svg class="a" style="left:386px;top:725px" width="10" height="12" viewBox="0 0 10 12" shape-rendering="crispEdges"><path d="M2 0h5v1h-5zM2 1h1v5h-1zM5 1h2v5h-2zM1 6h7v1h-7zM4 7h1v4h-1z" fill="#111"/></svg><svg class="a" style="left:401px;top:724px" width="12" height="12" viewBox="-6 -6 12 12"><path d="M-4.6 -3.9L4.6 3.9M4.6 -3.9L-4.6 3.9" stroke="#1e1e1e" stroke-width="1.6" fill="none"/></svg>
<svg class="a" style="left:10.5px;top:747px" width="14" height="14" viewBox="-7 -7 14 14"><circle r="6" fill="#fff" stroke="#333" stroke-width="1"/><circle r="3.2" fill="#333"/></svg>
<div class="t" style="top:746px;height:17px;line-height:17px;font-size:12px;letter-spacing:-0.143px;left:30px;">Current Satellite</div>
<svg class="a" style="left:125.5px;top:747px" width="14" height="14" viewBox="-7 -7 14 14"><circle r="6" fill="#fff" stroke="#333" stroke-width="1"/></svg>
<div class="t" style="top:746px;height:17px;line-height:17px;font-size:12px;letter-spacing:-0.23px;left:145px;">Group</div>
<svg class="a" style="left:189.5px;top:747px" width="14" height="14" viewBox="-7 -7 14 14"><circle r="6" fill="#fff" stroke="#333" stroke-width="1"/></svg>
<div class="t" style="top:746px;height:17px;line-height:17px;font-size:12px;letter-spacing:-0.197px;left:209px;">All VHF/UHF</div>
<div class="a" style="left:8px;top:769px;width:410px;height:215px;background:#fff;box-sizing:border-box;border:1px solid #828790;overflow:hidden;"></div>
<div class="a" style="left:10px;top:771px;width:39px;height:17px;background:#e0ffff;"></div>
<div class="t" style="top:771px;height:17px;line-height:17px;font-size:12.25px;font-weight:bold;letter-spacing:-0.264px;left:12px;">RS-44</div>
<div class="t" style="top:770px;height:17px;line-height:17px;font-size:13px;letter-spacing:-0.346px;left:60px;">#25265</div>
<div class="t" style="top:771px;height:17px;line-height:17px;font-size:12.5px;color:#008000;font-weight:bold;letter-spacing:0.005px;right:1561.39px;text-align:right;">Now</div>
<div class="t" style="top:797px;height:17px;line-height:17px;font-size:13px;letter-spacing:-0.347px;left:12px;">2025-05-24&nbsp; 12:55:25&nbsp; to&nbsp; 13:18:21</div>
<div class="t" style="top:797px;height:17px;line-height:17px;font-size:12.75px;letter-spacing:-0.314px;right:1561.71px;text-align:right;">22 min&nbsp;&nbsp; 58°</div>
<div class="a" style="left:10px;top:815px;width:389px;height:1px;background:#808080;"></div>
<svg class="a" style="left:355px;top:770px" width="44" height="46" viewBox="-22 -23 44 46"><circle r="17.5" fill="none" stroke="#c8c8c8" stroke-width="1"/><circle r="9" fill="none" stroke="#c8c8c8" stroke-width="1"/><path d="M-17.5 0h35M0 -17.5v35" stroke="#c8c8c8" stroke-width="1" fill="none"/><path d="M-3.5 -17.5Q-8 0 -2.5 16.5" stroke="#008080" stroke-width="1.6" fill="none"/><circle cx="-3.5" cy="-17.5" r="2.8" fill="#0a7a0a"/><circle cx="-2.5" cy="16.5" r="2.8" fill="#ff0000"/></svg>
<div class="a" style="left:10px;top:817px;width:39px;height:17px;background:#e0ffff;"></div>
<div class="t" style="top:817px;height:17px;line-height:17px;font-size:12.25px;font-weight:bold;letter-spacing:-0.264px;left:12px;">RS-44</div>
<div class="t" style="top:816px;height:17px;line-height:17px;font-size:13px;letter-spacing:-0.346px;left:60px;">#25266</div>
<div class="t" style="top:817px;height:17px;line-height:17px;font-size:12.25px;font-weight:bold;letter-spacing:-0.288px;right:1565.29px;text-align:right;">in 1h 44m 26s</div>
<div class="t" style="top:843px;height:17px;line-height:17px;font-size:13px;letter-spacing:-0.347px;left:12px;">2025-05-24&nbsp; 14:50:25&nbsp; to&nbsp; 15:06:21</div>
<div class="t" style="top:843px;height:17px;line-height:17px;font-size:13px;letter-spacing:-0.345px;right:1561.75px;text-align:right;">15 min&nbsp;&nbsp; 11°</div>
<div class="a" style="left:10px;top:861px;width:389px;height:1px;background:#808080;"></div>
<svg class="a" style="left:355px;top:816px" width="44" height="46" viewBox="-22 -23 44 46"><circle r="17.5" fill="none" stroke="#c8c8c8" stroke-width="1"/><circle r="9" fill="none" stroke="#c8c8c8" stroke-width="1"/><path d="M-17.5 0h35M0 -17.5v35" stroke="#c8c8c8" stroke-width="1" fill="none"/><path d="M-8 -16.5Q-16 -8 -16.5 7" stroke="#008080" stroke-width="1.6" fill="none"/><circle cx="-8" cy="-16.5" r="2.8" fill="#0a7a0a"/><circle cx="-16.5" cy="7" r="2.8" fill="#ff0000"/></svg>
<div class="a" style="left:10px;top:863px;width:39px;height:17px;background:#e0ffff;"></div>
<div class="t" style="top:863px;height:17px;line-height:17px;font-size:12.25px;font-weight:bold;letter-spacing:-0.264px;left:12px;">RS-44</div>
<div class="t" style="top:862px;height:17px;line-height:17px;font-size:13px;letter-spacing:-0.346px;left:60px;">#25271</div>
<div class="t" style="top:863px;height:17px;line-height:17px;font-size:12.25px;font-weight:bold;letter-spacing:-0.261px;right:1565.26px;text-align:right;">in 10h 38m 20s</div>
<div class="t" style="top:889px;height:17px;line-height:17px;font-size:13px;letter-spacing:-0.347px;left:12px;">2025-05-24&nbsp; 23:44:20&nbsp; to&nbsp; 00:02:44</div>
<div class="t" style="top:889px;height:17px;line-height:17px;font-size:12.75px;letter-spacing:-0.314px;right:1561.71px;text-align:right;">18 min&nbsp;&nbsp; 24°</div>
<div class="a" style="left:10px;top:907px;width:389px;height:1px;background:#808080;"></div>
<svg class="a" style="left:355px;top:862px" width="44" height="46" viewBox="-22 -23 44 46"><circle r="17.5" fill="none" stroke="#c8c8c8" stroke-width="1"/><circle r="9" fill="none" stroke="#c8c8c8" stroke-width="1"/><path d="M-17.5 0h35M0 -17.5v35" stroke="#c8c8c8" stroke-width="1" fill="none"/><path d="M5.5 -17Q17 0 11 14" stroke="#008080" stroke-width="1.6" fill="none"/><circle cx="11" cy="14" r="2.8" fill="#0a7a0a"/><circle cx="5.5" cy="-17" r="2.8" fill="#ff0000"/></svg>
<div class="a" style="left:10px;top:909px;width:39px;height:17px;background:#e0ffff;"></div>
<div class="t" style="top:909px;height:17px;line-height:17px;font-size:12.25px;font-weight:bold;letter-spacing:-0.264px;left:12px;">RS-44</div>
<div class="t" style="top:908px;height:17px;line-height:17px;font-size:13px;letter-spacing:-0.346px;left:60px;">#25272</div>
<div class="t" style="top:909px;height:17px;line-height:17px;font-size:12.25px;font-weight:bold;letter-spacing:-0.261px;right:1565.26px;text-align:right;">in 12h 29m 46s</div>
<div class="t" style="top:935px;height:17px;line-height:17px;font-size:13px;letter-spacing:-0.347px;left:12px;">2025-05-25&nbsp; 01:35:45&nbsp; to&nbsp; 01:56:51</div>
<div class="t" style="top:935px;height:17px;line-height:17px;font-size:12.75px;letter-spacing:-0.314px;right:1561.71px;text-align:right;">21 min&nbsp;&nbsp; 68°</div>
<div class="a" style="left:10px;top:953px;width:389px;height:1px;background:#808080;"></div>
<svg class="a" style="left:355px;top:908px" width="44" height="46" viewBox="-22 -23 44 46"><circle r="17.5" fill="none" stroke="#c8c8c8" stroke-width="1"/><circle r="9" fill="none" stroke="#c8c8c8" stroke-width="1"/><path d="M-17.5 0h35M0 -17.5v35" stroke="#c8c8c8" stroke-width="1" fill="none"/><path d="M2 -17.5Q-6 0 -4.5 17" stroke="#008080" stroke-width="1.6" fill="none"/><circle cx="-4.5" cy="17" r="2.8" fill="#0a7a0a"/><circle cx="2" cy="-17.5" r="2.8" fill="#ff0000"/></svg>
<div class="a" style="left:10px;top:955px;width:39px;height:17px;background:#e0ffff;"></div>
<div class="t" style="top:955px;height:17px;line-height:17px;font-size:12.25px;font-weight:bold;letter-spacing:-0.264px;left:12px;">RS-44</div>
<div class="t" style="top:954px;height:17px;line-height:17px;font-size:13px;letter-spacing:-0.346px;left:60px;">#25273</div>
<div class="t" style="top:955px;height:17px;line-height:17px;font-size:12.25px;font-weight:bold;letter-spacing:-0.261px;right:1565.26px;text-align:right;">in 14h 26m 58s</div>
<svg class="a" style="left:355px;top:954px" width="44" height="29" viewBox="-22 -23 44 29"><circle r="17.5" fill="none" stroke="#c8c8c8" stroke-width="1"/><circle r="9" fill="none" stroke="#c8c8c8" stroke-width="1"/><path d="M-17.5 0h35M0 -17.5v35" stroke="#c8c8c8" stroke-width="1" fill="none"/><path d="M0 -18Q-12 -10 -16.5 4" stroke="#008080" stroke-width="1.6" fill="none"/><circle cx="-16.5" cy="4" r="2.8" fill="#0a7a0a"/><circle cx="0" cy="-18" r="2.8" fill="#ff0000"/></svg>
<div class="a" style="left:400px;top:770px;width:17px;height:213px;background:#f0f0f0;"></div><div class="a" style="left:400px;top:787px;width:15px;height:44px;background:#cdcdcd;"></div><svg class="a" style="left:400px;top:770px" width="17" height="17" viewBox="0 0 17 17"><path d="M4.7 12.3l2.8-3.3 2.8 3.3" stroke="#5a5a5a" stroke-width="1.9" fill="none"/></svg><svg class="a" style="left:400px;top:966px" width="17" height="17" viewBox="0 0 17 17"><path d="M4.7 5.9l2.8 3.3 2.8-3.3" stroke="#5a5a5a" stroke-width="1.9" fill="none"/></svg>
<!-- p3_center -->
<div class="a" style="left:425px;top:139px;width:103px;height:19px;background:#007acc;"></div>
<div class="t" style="top:141px;height:17px;line-height:17px;font-size:12px;color:#fff;letter-spacing:-0.011px;left:446px;">Waterfall</div>
<svg class="a" style="left:511.5px;top:142.5px" width="12" height="12" viewBox="-6 -6 12 12"><path d="M-3.5 -3.5L3.5 3.5M3.5 -3.5L-3.5 3.5" stroke="#d0e6f5" stroke-width="1.3" fill="none"/></svg>
<div class="a" style="left:425px;top:158px;width:1093px;height:2px;background:#007acc;"></div>
<div class="a" style="left:425px;top:160px;width:1093px;height:632px;background:#f0f0f0;box-sizing:border-box;border-left:1px solid #cccedb;border-right:1px solid #cccedb;"></div>
<svg class="a" style="left:1503px;top:149px" width="9" height="5" viewBox="0 0 9 5"><path d="M0.5 0.5h8l-4 4z" fill="#555"/></svg>
<div class="a" style="left:429px;top:163px;width:31px;height:28px;background:#f0f0f0;box-sizing:border-box;border:1px solid #707070;"></div>
<svg class="a" style="left:436px;top:168px" width="17" height="17" viewBox="0 0 17 17"><g stroke="#8c9ccc" stroke-width="1.1" fill="#f0f0f0"><path d="M1.5 3.5h14M1.5 8.5h14M1.5 13.5h14"/><circle cx="7" cy="3.5" r="1.8"/><circle cx="11" cy="8.5" r="1.8"/><circle cx="7.5" cy="13.5" r="1.8"/></g></svg>
<div class="t" style="top:170px;height:17px;line-height:17px;font-size:12px;letter-spacing:-0.047px;left:1436.5px;">41 Hz/pix</div>
<svg class="a" style="left:426px;top:200px" width="1091" height="54" viewBox="426 200 1091 54" shape-rendering="crispEdges"><rect x="558.5" y="235.5" width="970" height="14" fill="#dcdcf0" stroke="#1a1ae6" stroke-width="1"/><path d="M447.5 238v12M471.5 244v6M496.5 244v6M520.5 244v6M544.5 244v6M568.5 238v12M592.5 244v6M616.5 244v6M640.5 244v6M664.5 244v6M688.5 238v12M712.5 244v6M737.5 244v6M761.5 244v6M785.5 244v6M809.5 238v12M833.5 244v6M857.5 244v6M881.5 244v6M905.5 244v6M929.5 238v12M954.5 244v6M978.5 244v6M1002.5 244v6M1026.5 244v6M1050.5 238v12M1074.5 244v6M1098.5 244v6M1122.5 244v6M1146.5 244v6M1170.5 238v12M1195.5 244v6M1219.5 244v6M1243.5 244v6M1267.5 244v6M1291.5 238v12M1315.5 244v6M1339.5 244v6M1363.5 244v6M1387.5 244v6M1412.5 238v12M1436.5 244v6M1460.5 244v6M1484.5 244v6M1508.5 244v6" stroke="#1a1a1a" stroke-width="1" fill="none"/><path d="M438.5 223v18M737.5 223v18" stroke="#1a1ae6" stroke-width="1" fill="none"/><path d="M433.5 240.5h10l-5 9zM732.5 240.5h10l-5 9z" fill="#19e619" stroke="#0a780a" stroke-width="1" shape-rendering="auto"/></svg>
<div class="a" style="left:559px;top:208px;width:37px;height:15px;background:#00ffff;"></div>
<div class="t" style="top:209px;height:17px;line-height:17px;font-size:12px;color:#1414f0;font-weight:bold;letter-spacing:-0.062px;left:440px;">RS-44</div>
<div class="t" style="top:209px;height:17px;line-height:17px;font-size:12px;color:#1414f0;font-weight:bold;letter-spacing:-0.062px;left:560.5px;">RS-44</div>
<div class="t" style="top:209px;height:17px;line-height:17px;font-size:12px;color:#1a1ae6;letter-spacing:-0.009px;left:738.5px;">Avion Kaluga 650</div>
<div class="t" style="top:221px;height:17px;line-height:17px;font-size:12px;letter-spacing:0.161px;left:247.98px;width:400px;text-align:center;">435.605</div>
<div class="t" style="top:221px;height:17px;line-height:17px;font-size:12px;letter-spacing:0.161px;left:368.51px;width:400px;text-align:center;">435.610</div>
<div class="t" style="top:221px;height:17px;line-height:17px;font-size:12px;letter-spacing:0.161px;left:489.04px;width:400px;text-align:center;">435.615</div>
<div class="t" style="top:221px;height:17px;line-height:17px;font-size:12px;letter-spacing:0.161px;left:609.57px;width:400px;text-align:center;">435.620</div>
<div class="t" style="top:221px;height:17px;line-height:17px;font-size:12px;letter-spacing:0.161px;left:730.1px;width:400px;text-align:center;">435.625</div>
<div class="t" style="top:221px;height:17px;line-height:17px;font-size:12px;letter-spacing:0.161px;left:850.63px;width:400px;text-align:center;">435.630</div>
<div class="t" style="top:221px;height:17px;line-height:17px;font-size:12px;letter-spacing:0.161px;left:971.16px;width:400px;text-align:center;">435.635</div>
<div class="t" style="top:221px;height:17px;line-height:17px;font-size:12px;letter-spacing:0.161px;left:1091.69px;width:400px;text-align:center;">435.640</div>
<div class="t" style="top:221px;height:17px;line-height:17px;font-size:12px;letter-spacing:0.161px;left:1212.22px;width:400px;text-align:center;">435.645</div>
<div class="a" style="left:1298px;top:205px;width:69px;height:45px;background:rgba(30,240,30,0.92);box-sizing:border-box;border:1px solid #1e961e;"></div>
<svg class="a" style="left:426px;top:254px" width="1091" height="537" viewBox="0 0 1091 537" shape-rendering="crispEdges"><defs>
<filter id="nz" x="0" y="0" width="100%" height="100%" color-interpolation-filters="sRGB">
<feTurbulence type="fractalNoise" baseFrequency="0.43 0.77" numOctaves="1" seed="3" result="n"/>
<feColorMatrix in="n" type="matrix" values="0 0 0 0 0.14  0 0 0 0 0.72  0 0 0 0 0.88  7 7 0 0 -8.4"/>
</filter>
<filter id="nz2" x="0" y="0" width="100%" height="100%" color-interpolation-filters="sRGB">
<feTurbulence type="fractalNoise" baseFrequency="0.39 0.73" numOctaves="1" seed="11" result="n"/>
<feColorMatrix in="n" type="matrix" values="0 0 0 0 0.12  0 0 0 0 0.70  0 0 0 0 0.88  6 6 0 0 -7.15"/>
</filter>
<linearGradient id="dg" x1="0" x2="1" y1="0" y2="0"><stop offset="0" stop-color="#fff" stop-opacity="0"/><stop offset="0.35" stop-color="#fff" stop-opacity="0.45"/><stop offset="0.62" stop-color="#fff" stop-opacity="0.6"/><stop offset="0.75" stop-color="#fff" stop-opacity="1"/><stop offset="1" stop-color="#fff" stop-opacity="1"/></linearGradient>
<mask id="dm"><rect x="400" y="0" width="691" height="537" fill="url(#dg)"/></mask>
</defs><rect width="1091" height="537" fill="#000e54"/><rect width="1091" height="537" filter="url(#nz)"/><g mask="url(#dm)"><rect x="400" y="0" width="691" height="537" filter="url(#nz2)"/></g><path d="M8 2h1M8 8h1M8 12h1M8 17h1M8 20h1M8 23h1M8 24h1M8 26h1M8 34h1M8 40h1M8 42h1M8 45h1M8 48h1M8 51h1M8 56h1M8 58h1M8 66h1M8 71h1M8 83h1M8 84h1M8 88h1M8 89h1M8 90h1M8 110h1M8 113h1M8 116h1M8 125h1M8 126h1M8 128h1M8 133h1M8 140h1M8 144h1M8 145h1M8 154h1M8 158h1M8 160h1M8 165h1M8 173h1M8 186h1M8 195h1M8 204h1M8 223h1M8 236h1M8 240h1M8 243h1M8 253h1M8 265h1M8 268h1M8 270h1M8 272h1M8 274h1M8 276h1M8 282h1M8 285h1M8 286h1M8 287h1M8 291h1M8 294h1M8 297h1M8 315h1M8 316h1M8 317h1M8 320h1M8 321h1M8 328h1M8 329h1M8 337h1M8 338h1M8 348h1M8 349h1M8 351h1M8 357h1M8 361h1M8 370h1M8 374h1M8 379h1M8 380h1M8 383h1M8 384h1M8 392h1M8 395h1M8 407h1M8 414h1M8 416h1M8 421h1M8 423h1M8 426h1M8 432h1M8 447h1M8 450h1M8 453h1M8 469h1M8 471h1M8 475h1M8 478h1M8 480h1M8 483h1M8 488h1M8 500h1M8 513h1M8 515h1M8 524h1M8 526h1M8 527h1M8 533h1M160 5h1M160 10h1M160 11h1M160 19h1M160 27h1M160 29h1M160 49h1M160 54h1M160 64h1M160 66h1M160 86h1M160 96h1M160 101h1M160 110h1M160 111h1M160 112h1M160 113h1M160 114h1M160 115h1M160 116h1M160 118h1M160 122h1M160 124h1M160 129h1M160 133h1M160 134h1M160 153h1M160 154h1M160 161h1M160 168h1M160 171h1M160 178h1M160 183h1M160 200h1M160 201h1M160 205h1M160 206h1M160 213h1M160 217h1M160 223h1M160 231h1M160 232h1M160 236h1M160 246h1M160 258h1M160 271h1M160 274h1M160 287h1M160 295h1M160 298h1M160 306h1M160 311h1M160 318h1M160 329h1M160 334h1M160 335h1M160 337h1M160 345h1M160 350h1M160 361h1M160 367h1M160 370h1M160 381h1M160 382h1M160 391h1M160 396h1M160 399h1M160 404h1M160 411h1M160 414h1M160 423h1M160 440h1M160 446h1M160 449h1M160 452h1M160 466h1M160 471h1M160 477h1M160 481h1M160 498h1M160 501h1M160 502h1M160 508h1M160 521h1M160 535h1M285 27h1M285 33h1M285 42h1M285 43h1M285 55h1M285 57h1M285 72h1M285 76h1M285 87h1M285 93h1M285 105h1M285 109h1M285 111h1M285 118h1M285 122h1M285 125h1M285 128h1M285 153h1M285 158h1M285 181h1M285 188h1M285 195h1M285 200h1M285 203h1M285 205h1M285 216h1M285 244h1M285 245h1M285 247h1M285 253h1M285 256h1M285 258h1M285 271h1M285 290h1M285 303h1M285 306h1M285 315h1M285 321h1M285 333h1M285 341h1M285 374h1M285 381h1M285 391h1M285 396h1M285 406h1M285 407h1M285 418h1M285 420h1M285 431h1M285 445h1M285 454h1M285 457h1M285 459h1M285 460h1M285 462h1M285 466h1M285 471h1M285 476h1M285 477h1M285 478h1M285 479h1M285 484h1M285 511h1M285 521h1M285 531h1M285 532h1M285 536h1M918 347h1M918 351h1M918 368h1M918 374h1M918 375h1M918 377h1M918 386h1M918 397h1M918 401h1M918 407h1M918 409h1M918 414h1M918 419h1M918 429h1M918 439h1M918 440h1M918 443h1M918 447h1M918 455h1M918 456h1M918 459h1M918 460h1M918 461h1M918 462h1M918 470h1M918 495h1M918 505h1M918 511h1M918 518h1M918 534h1M918 535h1M1010 360h1M1010 364h1M1010 375h1M1010 378h1M1010 379h1M1010 383h1M1010 391h1M1010 393h1M1010 394h1M1010 397h1M1010 407h1M1010 410h1M1010 411h1M1010 416h1M1010 427h1M1010 435h1M1010 436h1M1010 440h1M1010 445h1M1010 448h1M1010 449h1M1010 463h1M1010 474h1M1010 477h1M1010 480h1M1010 482h1M848 24h5M916 140h5M924 143h1M896 142h5M902 142h3M887 146h6M951 147h1M963 520h1M1046 372h3M1067 511h2M1079 511h5M1067 516h1M1064 520h3M1069 522h3M1079 526h5M922 19h4M933 26h3M944 31h2M889 34h3M920 38h2M932 46h2M506 141h2M630 141h5M727 143h4M788 147h1M555 148h4M528 153h6M697 153h6M732 153h5M526 156h6M730 156h1M531 162h4M600 162h3M652 162h5M522 165h3M678 167h6M865 167h3M565 170h5M654 172h6M510 173h4M766 178h3M804 179h1M546 183h2M826 186h5M690 201h5M830 203h2M861 203h5M627 204h5M851 208h6M531 213h5M690 213h6M530 215h1M561 215h5M632 215h2M508 217h3M781 218h1M699 221h5M790 221h3M870 221h3M677 223h1M688 223h4M551 225h4M513 226h1M684 233h3M691 235h6M755 237h4M548 244h1M794 266h5M754 269h1M791 269h1M679 270h3M604 271h6M709 272h4M741 277h1M636 279h3M645 279h1M541 284h1M817 284h6M717 285h4M668 289h5M784 289h2M658 290h1M736 295h3M736 301h3M668 304h1M875 306h2M895 347h6M954 348h5M808 351h6M892 351h5M1024 353h1M1037 354h1M911 362h5M823 363h3M838 363h5M828 365h2M1037 365h6M954 374h2M1048 374h2M1076 374h1M1028 383h3M918 386h5M989 189h3M866 191h1M1014 193h2M866 196h5M891 196h2M988 206h6M984 214h3M970 269h4M931 271h2M887 272h3M968 273h6M999 277h6M899 278h5M942 280h1M1006 291h5M924 340h6M897 344h5M1005 353h3M1056 355h1M972 358h4" stroke="#1787b8" stroke-width="1" fill="none" transform="translate(0,0.5)"/><path d="M309 421h2M309 422h2M310 423h2M310 425h2M310 426h2M310 427h2M310 428h2M310 429h2M311 430h2M311 431h2M311 432h2M311 433h2M311 434h2M311 435h2M312 436h2M8 1h1M8 3h1M8 5h1M8 7h1M8 9h1M8 11h1M8 13h1M8 15h1M8 16h1M8 21h1M8 22h1M8 25h1M8 27h1M8 28h1M8 29h1M8 30h1M8 31h1M8 33h1M8 35h1M8 39h1M8 41h1M8 43h1M8 46h1M8 47h1M8 49h1M8 52h1M8 55h1M8 59h1M8 60h1M8 62h1M8 63h1M8 64h1M8 65h1M8 68h1M8 70h1M8 73h1M8 77h1M8 79h1M8 80h1M8 82h1M8 85h1M8 86h1M8 87h1M8 94h1M8 98h1M8 99h1M8 101h1M8 103h1M8 105h1M8 107h1M8 108h1M8 109h1M8 111h1M8 114h1M8 118h1M8 120h1M8 122h1M8 127h1M8 129h1M8 130h1M8 131h1M8 132h1M8 137h1M8 141h1M8 146h1M8 148h1M8 151h1M8 153h1M8 156h1M8 161h1M8 162h1M8 164h1M8 167h1M8 168h1M8 169h1M8 170h1M8 171h1M8 175h1M8 176h1M8 177h1M8 178h1M8 179h1M8 180h1M8 181h1M8 182h1M8 183h1M8 184h1M8 191h1M8 193h1M8 196h1M8 197h1M8 199h1M8 200h1M8 201h1M8 205h1M8 207h1M8 208h1M8 211h1M8 212h1M8 213h1M8 214h1M8 215h1M8 217h1M8 220h1M8 222h1M8 226h1M8 228h1M8 231h1M8 232h1M8 233h1M8 234h1M8 237h1M8 239h1M8 242h1M8 247h1M8 248h1M8 249h1M8 251h1M8 254h1M8 255h1M8 257h1M8 261h1M8 263h1M8 271h1M8 275h1M8 277h1M8 280h1M8 281h1M8 283h1M8 284h1M8 289h1M8 290h1M8 295h1M8 296h1M8 299h1M8 300h1M8 304h1M8 305h1M8 307h1M8 308h1M8 309h1M8 311h1M8 322h1M8 324h1M8 326h1M8 327h1M8 331h1M8 335h1M8 336h1M8 339h1M8 341h1M8 343h1M8 344h1M8 350h1M8 352h1M8 354h1M8 356h1M8 358h1M8 359h1M8 360h1M8 362h1M8 363h1M8 364h1M8 366h1M8 373h1M8 377h1M8 381h1M8 382h1M8 386h1M8 390h1M8 393h1M8 394h1M8 396h1M8 397h1M8 398h1M8 399h1M8 402h1M8 403h1M8 405h1M8 406h1M8 408h1M8 409h1M8 410h1M8 411h1M8 412h1M8 413h1M8 415h1M8 417h1M8 418h1M8 419h1M8 427h1M8 428h1M8 429h1M8 430h1M8 431h1M8 434h1M8 438h1M8 439h1M8 440h1M8 441h1M8 442h1M8 446h1M8 448h1M8 449h1M8 451h1M8 455h1M8 456h1M8 457h1M8 458h1M8 459h1M8 461h1M8 462h1M8 463h1M8 464h1M8 465h1M8 466h1M8 468h1M8 472h1M8 474h1M8 477h1M8 481h1M8 482h1M8 486h1M8 487h1M8 489h1M8 490h1M8 491h1M8 492h1M8 494h1M8 495h1M8 497h1M8 498h1M8 502h1M8 505h1M8 506h1M8 507h1M8 508h1M8 509h1M8 512h1M8 517h1M8 518h1M8 519h1M8 521h1M8 522h1M8 523h1M8 525h1M8 528h1M8 529h1M8 530h1M8 531h1M8 532h1M8 535h1M8 536h1M319 0h1M319 3h1M319 6h1M319 8h1M319 12h1M319 17h1M319 19h1M319 20h1M319 29h1M319 37h1M319 40h1M319 41h1M319 42h1M319 54h1M319 68h1M319 73h1M319 80h1M319 83h1M319 89h1M319 97h1M319 98h1M319 105h1M319 106h1M319 114h1M319 118h1M319 119h1M319 120h1M319 121h1M319 126h1M319 127h1M319 136h1M319 143h1M319 144h1M319 145h1M319 148h1M319 154h1M319 168h1M319 169h1M319 170h1M319 172h1M319 176h1M319 181h1M319 192h1M319 197h1M319 199h1M319 200h1M319 205h1M319 214h1M319 217h1M319 221h1M319 224h1M319 230h1M319 233h1M319 237h1M319 247h1M319 248h1M319 250h1M319 253h1M319 255h1M319 267h1M319 271h1M319 273h1M319 275h1M319 276h1M319 277h1M319 284h1M319 285h1M319 292h1M319 295h1M319 297h1M319 301h1M319 303h1M319 304h1M319 305h1M319 312h1M319 316h1M319 317h1M319 318h1M319 337h1M319 346h1M319 347h1M319 366h1M319 371h1M319 372h1M319 374h1M319 381h1M319 382h1M319 385h1M319 386h1M319 390h1M319 393h1M319 398h1M319 401h1M319 403h1M319 404h1M319 405h1M319 415h1M319 419h1M319 422h1M319 428h1M319 431h1M319 440h1M319 447h1M319 448h1M319 450h1M319 451h1M319 457h1M319 458h1M319 459h1M319 462h1M319 465h1M319 467h1M319 479h1M319 488h1M319 492h1M319 497h1M319 501h1M319 509h1M319 512h1M319 518h1M319 521h1M319 522h1M319 531h1M319 532h1M319 535h1M779 1h1M779 18h1M779 25h1M779 28h1M779 32h1M779 35h1M779 37h1M779 42h1M779 46h1M779 47h1M779 49h1M779 53h1M779 57h1M779 72h1M779 76h1M779 88h1M779 91h1M779 107h1M779 112h1M779 122h1M779 123h1M779 132h1M779 144h1M779 153h1M779 163h1M779 164h1M779 165h1M779 197h1M779 215h1M779 221h1M779 223h1M779 233h1M779 269h1M779 272h1M779 275h1M779 276h1M779 277h1M779 313h1M779 320h1M779 334h1M779 337h1M779 342h1M779 348h1M779 353h1M779 356h1M779 360h1M779 365h1M779 373h1M779 374h1M779 378h1M779 379h1M779 383h1M779 389h1M779 391h1M779 392h1M779 393h1M779 402h1M779 409h1M779 412h1M779 417h1M779 431h1M779 444h1M779 450h1M779 463h1M779 465h1M779 471h1M779 475h1M779 478h1M779 503h1M779 507h1M779 517h1M779 533h1M160 0h1M160 1h1M160 6h1M160 7h1M160 25h1M160 26h1M160 28h1M160 34h1M160 35h1M160 41h1M160 62h1M160 71h1M160 77h1M160 87h1M160 93h1M160 99h1M160 100h1M160 103h1M160 117h1M160 131h1M160 138h1M160 140h1M160 146h1M160 150h1M160 152h1M160 158h1M160 172h1M160 179h1M160 181h1M160 192h1M160 193h1M160 199h1M160 202h1M160 208h1M160 215h1M160 219h1M160 220h1M160 221h1M160 222h1M160 237h1M160 244h1M160 247h1M160 250h1M160 252h1M160 270h1M160 282h1M160 288h1M160 290h1M160 296h1M160 301h1M160 304h1M160 314h1M160 316h1M160 320h1M160 322h1M160 328h1M160 331h1M160 333h1M160 336h1M160 339h1M160 349h1M160 360h1M160 369h1M160 371h1M160 377h1M160 378h1M160 393h1M160 395h1M160 401h1M160 403h1M160 435h1M160 443h1M160 454h1M160 459h1M160 464h1M160 473h1M160 489h1M160 491h1M160 492h1M160 504h1M160 505h1M160 516h1M160 520h1M160 533h1M285 1h1M285 3h1M285 5h1M285 7h1M285 25h1M285 35h1M285 80h1M285 81h1M285 90h1M285 92h1M285 99h1M285 130h1M285 135h1M285 149h1M285 156h1M285 165h1M285 176h1M285 180h1M285 184h1M285 194h1M285 211h1M285 225h1M285 229h1M285 233h1M285 238h1M285 252h1M285 260h1M285 261h1M285 269h1M285 277h1M285 278h1M285 283h1M285 293h1M285 297h1M285 304h1M285 305h1M285 331h1M285 334h1M285 339h1M285 342h1M285 344h1M285 366h1M285 384h1M285 385h1M285 389h1M285 395h1M285 409h1M285 412h1M285 413h1M285 421h1M285 426h1M285 441h1M285 464h1M285 467h1M285 472h1M285 474h1M285 485h1M285 491h1M285 500h1M285 501h1M285 508h1M285 512h1M285 518h1M285 522h1M285 530h1M918 337h1M918 338h1M918 342h1M918 343h1M918 349h1M918 353h1M918 355h1M918 356h1M918 367h1M918 391h1M918 395h1M918 411h1M918 416h1M918 432h1M918 446h1M918 454h1M918 463h1M918 475h1M918 478h1M918 481h1M918 482h1M918 484h1M918 486h1M918 489h1M918 493h1M918 501h1M918 503h1M918 516h1M918 520h1M918 528h1M1010 362h1M1010 377h1M1010 381h1M1010 385h1M1010 403h1M1010 409h1M1010 413h1M1010 414h1M1010 419h1M1010 422h1M1010 425h1M1010 428h1M1010 433h1M1010 441h1M1010 446h1M1010 450h1M1010 452h1M1010 455h1M1010 457h1M1010 461h1M1010 462h1M1010 466h1M1010 467h1M1010 468h1M1010 471h1M1010 473h1M1010 488h1M1010 491h1M1010 495h1M1010 496h1M1010 501h1M4 5h3M6 13h2M5 15h3M11 18h2M7 19h3M5 21h1M10 24h2M9 27h4M7 27h1M18 28h2M2 36h1M1 37h4M4 37h3M3 38h4M4 39h3M8 43h2M10 43h3M8 45h2M15 45h3M4 46h3M11 47h2M5 48h4M8 54h3M0 55h1M0 56h2M7 60h2M7 61h2M12 62h2M0 63h1M7 64h3M6 64h2M0 72h1M858 24h2M875 24h6M896 24h3M903 24h5M913 24h5M919 24h3M924 24h5M848 25h2M867 25h4M873 25h4M877 25h3M885 25h3M890 25h2M909 25h6M927 25h2M859 26h3M875 26h2M878 26h4M899 26h1M907 26h6M914 26h4M978 0h5M972 1h6M1000 1h2M991 3h1M994 3h4M987 4h2M997 4h1M981 5h5M1017 5h1M1030 5h5M1024 6h5M994 7h3M1007 8h1M1035 8h1M1012 10h2M1017 10h4M1001 14h1M975 15h6M982 17h1M981 26h2M1039 26h2M1001 28h4M1027 29h4M998 31h3M1010 33h6M1009 34h6M1009 35h6M978 36h6M1028 36h6M1008 37h4M1010 39h1M979 40h1M990 41h3M979 42h1M1022 42h2M1018 43h3M1033 43h2M988 45h2M1011 45h6M1018 48h2M1014 49h6M1025 49h5M1012 50h1M1028 50h4M1032 50h3M1041 50h2M994 51h4M1008 51h5M1012 52h4M1019 52h3M917 53h2M899 55h3M903 56h3M894 58h1M930 58h4M900 59h4M906 59h2M926 59h3M936 59h4M942 59h1M917 60h2M896 63h2M929 63h4M927 64h4M933 64h3M914 66h5M925 66h3M936 66h6M933 69h5M915 70h6M930 71h5M942 71h3M941 72h3M902 74h1M932 74h1M853 84h3M900 84h2M931 84h2M864 85h5M910 85h4M915 85h6M921 85h1M930 85h3M912 87h5M918 87h6M857 88h6M864 88h6M848 89h2M911 89h6M918 89h6M854 90h6M861 90h1M878 90h3M945 90h1M859 91h1M879 91h1M903 91h6M858 92h2M879 92h1M916 92h3M859 93h4M865 93h6M875 93h5M882 93h4M895 93h2M901 93h5M920 93h2M882 94h5M911 94h4M882 95h2M884 95h3M892 95h5M873 96h6M883 96h4M913 96h2M928 96h4M848 97h3M860 97h3M881 98h2M893 98h3M910 98h3M914 98h6M922 98h4M930 98h1M938 98h5M908 99h2M856 127h2M858 127h5M891 127h4M923 127h6M943 128h4M876 129h4M889 129h4M917 129h5M858 131h6M918 131h6M876 148h2M882 148h3M895 149h4M899 149h1M857 150h4M861 152h3M898 152h3M897 153h1M858 147h2M914 131h2M923 131h3M928 131h3M929 132h1M927 133h3M915 135h6M915 136h3M921 136h6M928 136h3M927 137h4M916 139h2M916 141h2M928 142h1M917 144h6M924 144h3M910 132h6M897 133h5M947 134h3M926 135h6M939 135h2M947 135h4M896 136h5M944 136h3M917 137h6M912 138h5M921 140h5M935 140h5M943 140h5M895 141h2M920 143h4M902 144h4M877 145h4M945 146h2M913 155h6M926 156h2M955 157h2M922 158h4M928 158h6M952 158h6M931 159h2M952 159h2M938 161h1M946 161h4M914 162h1M935 162h5M929 163h5M936 163h1M943 164h4M949 164h5M932 165h3M940 165h4M946 165h2M932 167h1M936 167h5M958 167h1M925 168h4M864 168h4M885 168h4M865 169h2M872 169h1M879 169h5M890 169h1M892 169h6M869 170h5M880 170h1M890 170h1M912 170h2M863 171h6M876 171h1M886 171h1M867 172h4M902 172h2M914 172h1M895 173h1M898 173h3M913 173h2M867 175h4M873 175h1M876 175h5M882 175h4M869 176h6M877 176h5M892 176h4M904 176h4M911 176h5M875 179h4M904 180h5M874 181h4M893 181h4M915 181h1M866 183h6M885 183h2M905 183h2M867 184h1M870 184h1M873 184h3M913 184h4M883 185h6M911 185h5M871 186h1M886 186h5M892 186h5M899 186h2M885 187h2M888 187h1M911 187h4M872 188h4M892 188h2M894 188h2M908 188h5M880 189h4M897 189h6M912 189h4M872 190h2M886 190h2M896 190h3M913 190h3M914 191h3M903 192h4M869 193h3M872 193h2M876 193h4M891 193h4M895 193h6M902 193h2M904 193h6M913 193h2M951 183h3M932 184h3M928 185h2M938 185h2M925 186h6M952 186h4M938 187h1M941 187h4M946 187h4M928 189h6M933 191h6M943 194h5M930 195h6M944 195h5M928 196h2M949 197h5M925 198h3M931 198h1M952 198h5M962 199h3M922 201h3M927 201h2M944 201h2M939 202h4M956 202h3M898 208h3M904 208h6M872 209h5M879 209h1M875 210h1M889 210h1M891 210h2M874 211h1M912 211h1M915 211h3M898 212h5M870 213h5M910 213h2M879 214h5M908 214h6M911 215h6M892 216h2M914 216h5M901 217h6M907 217h3M917 217h2M884 218h6M891 218h1M912 218h1M898 219h1M901 219h5M873 220h6M895 220h1M891 221h4M907 221h6M915 221h3M888 222h2M917 223h2M874 225h4M882 226h6M915 226h1M872 227h4M883 228h1M885 228h5M880 229h4M886 229h6M891 230h2M899 230h4M883 231h6M877 233h4M879 234h1M882 234h4M886 234h3M905 234h3M909 234h2M916 234h3M919 234h2M943 232h4M971 233h3M951 235h6M967 235h1M959 236h2M963 236h5M964 237h3M928 238h3M961 240h1M931 241h3M974 241h1M967 243h3M964 244h2M953 245h2M960 245h2M970 245h5M956 247h3M944 249h4M935 251h5M889 270h2M971 270h5M873 271h2M897 271h1M934 271h1M925 272h1M963 272h6M906 273h6M913 273h1M905 274h6M874 275h6M916 275h5M966 275h4M875 276h4M936 276h1M957 276h4M924 277h3M941 278h3M970 278h6M887 279h5M914 279h6M946 279h4M913 280h5M929 280h5M908 281h5M927 281h1M967 281h2M898 284h2M918 284h2M927 284h5M886 285h1M894 285h2M932 285h3M882 286h6M895 287h3M916 287h2M890 288h4M900 288h2M935 289h1M882 290h2M900 290h6M914 290h2M887 291h4M911 291h5M892 292h1M918 292h4M899 293h1M921 293h1M909 294h3M917 294h1M924 294h3M906 295h4M892 296h4M908 296h2M890 297h6M896 297h1M910 299h6M909 300h5M924 300h3M935 300h3M902 301h5M907 301h1M902 302h4M908 302h3M897 303h5M915 303h6M894 304h2M912 304h5M917 304h4M912 306h6M928 306h3M887 307h5M905 307h3M887 308h2M890 308h2M894 308h4M944 386h4M949 389h4M951 392h3M951 396h2M945 398h3M953 399h1M950 400h4M957 461h3M955 462h1M991 483h6M984 484h3M957 486h2M979 486h4M992 487h6M956 490h6M1001 491h5M971 492h4M963 510h6M969 510h1M961 511h5M963 512h4M967 512h2M962 513h3M967 513h3M969 514h1M961 515h4M960 516h3M965 516h1M968 516h3M970 517h1M959 524h5M968 524h4M959 525h3M968 525h1M1077 388h3M1055 389h4M1059 390h5M1067 393h2M1052 394h2M1065 396h5M1073 396h3M1076 396h6M1053 397h1M1069 397h5M1078 397h5M1068 398h3M1076 399h6M1070 400h6M1086 400h3M1070 402h3M1079 404h1M1080 404h2M1090 404h1M1080 405h4M1054 407h6M1063 409h4M1079 410h2M1081 410h2M1065 412h6M1080 413h1M1084 414h4M1090 414h1M1089 415h2M1070 416h2M1073 416h5M1074 417h6M1090 417h1M1069 370h5M1046 371h3M1051 371h3M1084 371h5M1078 372h3M1054 373h6M1073 373h6M1061 374h2M1047 375h5M1053 375h1M1056 375h4M1065 375h1M1088 375h3M1070 510h5M1075 510h4M1072 512h3M1062 514h6M1063 515h2M1076 515h5M1088 517h3M1063 518h4M1069 518h2M1073 518h5M1063 519h5M1080 520h2M1064 521h1M1086 521h2M1081 523h4M1065 524h5M1074 525h6M1065 527h1M1067 527h2M1088 527h3M1065 528h5M1071 528h3M771 414h1M782 416h4M781 419h6M780 421h5M777 425h2M773 426h5M776 427h2M774 429h2M790 429h1M933 16h5M857 17h1M886 17h1M893 17h2M897 17h1M874 19h4M904 19h6M962 19h2M934 20h5M887 21h1M965 21h5M897 22h5M912 24h6M951 24h4M868 26h2M956 26h1M893 27h3M908 27h3M974 27h1M974 28h2M876 32h2M879 32h2M866 33h3M884 33h4M902 33h1M931 33h3M851 34h4M878 34h6M913 34h3M931 34h5M923 35h2M935 35h6M878 36h2M945 36h6M884 38h4M888 38h3M907 39h5M867 40h2M903 41h4M868 42h1M876 42h6M882 42h2M910 42h4M933 42h3M885 43h1M959 44h6M870 46h4M947 46h3M539 141h5M685 141h3M834 141h5M863 141h2M540 142h4M647 142h4M534 143h1M549 143h4M604 143h3M607 143h3M658 143h2M796 143h6M515 144h4M645 144h1M722 144h1M734 144h5M775 145h5M526 146h5M713 146h6M826 146h6M510 147h6M586 147h6M723 147h2M497 148h3M502 148h1M715 148h3M820 148h1M490 149h3M865 149h1M595 150h4M643 150h5M734 150h1M491 151h4M514 151h5M556 152h2M574 153h4M848 153h2M596 154h2M500 155h4M526 155h5M555 155h6M753 155h3M830 155h2M637 156h6M681 156h6M832 156h5M518 157h1M619 157h1M781 157h1M799 157h1M828 157h4M559 158h2M637 158h4M730 158h3M718 159h5M843 159h3M847 159h4M506 160h4M585 160h5M494 161h4M505 161h2M710 161h6M636 163h6M650 163h2M857 163h3M525 165h2M515 167h6M538 167h1M527 168h4M609 168h1M682 168h4M796 168h5M522 169h3M670 170h4M518 171h3M543 171h4M696 171h4M817 171h6M832 171h5M840 171h3M566 172h2M682 172h3M692 172h1M616 173h1M787 173h2M528 174h1M667 174h6M784 175h6M616 176h6M523 177h2M662 177h6M789 178h4M631 179h3M834 179h1M754 180h3M757 180h2M723 181h6M756 181h5M796 181h4M512 182h5M582 182h1M799 182h1M564 183h1M585 183h3M679 183h2M519 184h3M650 184h4M761 184h5M826 184h2M590 185h3M739 185h5M774 185h1M792 185h6M507 186h4M521 186h2M660 186h5M689 186h3M793 201h2M660 202h5M870 202h4M552 203h4M557 203h5M577 203h6M588 203h3M714 203h4M722 203h5M669 204h4M701 205h5M520 206h5M566 207h2M700 207h5M761 207h6M531 208h3M699 208h3M717 209h4M538 210h2M628 211h4M804 211h5M670 212h3M649 213h5M821 213h4M566 214h3M627 214h2M780 214h3M813 214h2M658 215h1M640 216h6M611 219h1M684 219h4M858 219h2M512 220h4M587 221h6M756 221h1M515 222h5M584 222h2M732 222h4M631 223h1M839 224h2M734 225h5M744 225h6M827 225h5M551 226h6M649 226h6M739 226h3M806 226h2M627 227h1M655 227h2M668 227h5M740 227h5M788 227h1M737 228h1M517 229h6M661 230h6M818 230h6M559 231h1M576 231h2M633 231h5M838 231h2M868 231h6M738 232h6M767 232h6M590 233h5M623 233h3M835 233h2M529 234h1M708 234h3M752 234h5M775 234h1M713 235h3M788 235h5M530 236h1M633 236h2M863 236h2M767 238h5M587 239h5M785 239h6M786 240h3M533 241h6M551 241h4M563 241h3M729 241h3M814 241h1M519 242h2M551 244h5M873 244h6M590 245h2M607 245h2M571 246h6M616 246h1M749 246h6M806 246h2M557 266h1M726 266h4M755 266h4M792 266h1M688 267h1M729 267h2M740 267h2M856 267h3M553 269h2M564 269h5M630 269h3M558 270h2M636 270h6M799 270h1M551 271h3M672 271h1M725 271h1M748 271h5M814 271h2M829 271h3M869 271h3M587 272h4M643 272h5M592 273h3M801 274h5M871 274h4M671 275h5M692 275h6M646 276h2M655 276h3M839 276h2M545 277h5M557 277h6M576 277h4M596 277h1M559 278h2M633 278h5M647 278h3M721 278h5M870 279h6M544 280h2M588 281h2M668 281h5M790 281h3M547 282h3M673 282h5M814 282h1M590 283h6M624 283h3M750 283h5M757 284h2M847 284h2M773 285h1M787 285h6M824 285h4M848 285h3M538 286h3M551 286h5M620 286h3M661 286h1M705 286h3M754 286h2M754 287h6M587 288h6M686 288h2M688 288h5M628 289h2M732 289h4M789 289h6M854 289h2M563 290h5M639 290h2M794 290h4M607 291h3M729 291h4M617 293h3M833 293h3M547 294h5M855 294h2M687 296h4M701 296h1M742 296h3M751 296h6M626 297h2M663 297h2M673 297h4M771 297h6M813 298h2M755 299h5M870 299h6M877 299h1M763 300h5M634 301h2M663 301h1M806 301h1M861 302h5M542 303h1M585 303h4M622 303h4M833 303h1M577 304h4M779 304h1M633 305h1M680 305h6M759 305h3M757 306h6M855 306h3M804 346h1M903 346h1M933 346h4M908 347h6M821 348h5M1001 348h1M922 350h2M886 351h6M928 351h1M1032 351h3M1036 351h2M1022 352h1M828 355h1M887 355h1M976 355h4M985 355h1M1005 355h4M880 356h5M885 356h2M876 357h5M1020 358h2M821 359h1M1022 359h5M840 360h2M807 361h1M810 361h4M1007 361h2M829 363h4M889 363h3M888 364h1M988 364h2M845 365h1M954 365h1M808 366h2M1070 366h3M809 368h2M872 368h3M921 368h4M978 368h3M854 369h2M992 370h6M1036 370h3M1039 371h2M837 372h4M902 372h3M992 373h5M867 374h6M892 374h2M1036 375h2M1046 375h3M911 376h1M919 376h3M928 378h1M1021 379h4M1063 379h5M926 380h5M945 380h1M982 380h3M987 380h1M1066 380h5M983 381h6M1051 381h1M855 382h4M865 382h2M895 382h1M852 384h1M962 385h1M957 386h3M996 386h5M524 369h1M539 369h2M543 369h1M546 369h5M583 369h3M535 370h6M570 370h4M582 370h2M585 370h2M993 186h6M869 187h1M898 187h1M1005 190h4M1007 191h3M919 193h6M1002 193h3M886 194h1M1004 194h1M907 195h1M935 196h3M867 199h4M906 199h2M998 199h2M951 203h4M972 203h4M978 203h4M982 205h1M1009 207h2M931 209h4M885 210h1M888 210h4M932 210h2M973 210h1M944 211h1M969 211h4M974 211h5M892 212h6M912 212h5M929 213h2M920 214h4M1009 214h2M870 215h1M896 215h6M957 215h6M964 215h6M900 266h1M912 266h5M931 266h1M894 267h1M896 267h2M1025 267h2M1044 267h1M944 268h5M985 268h3M959 269h4M1010 269h1M1061 269h4M900 270h1M1017 270h3M1033 270h4M934 271h5M940 271h2M983 271h5M1033 271h4M1052 271h6M1000 272h1M1026 272h4M1058 272h4M903 273h6M910 273h5M975 273h4M1068 273h3M931 274h4M923 275h4M876 276h6M895 276h5M962 276h1M895 277h1M937 277h2M977 277h5M991 277h4M962 278h6M1036 278h4M1030 279h1M890 280h4M1031 280h5M1037 280h5M1049 280h2M1072 280h3M883 281h1M920 281h3M939 282h6M998 282h2M878 283h4M890 283h2M921 283h3M878 285h2M928 285h6M977 285h3M1023 285h6M878 286h1M886 286h5M893 286h2M912 286h5M935 286h3M943 286h1M999 287h3M1066 287h2M913 288h6M955 288h6M981 288h3M882 289h4M927 289h6M906 290h1M1009 290h2M895 291h1M920 291h2M938 291h1M912 336h5M947 336h4M1034 336h5M1041 336h3M874 337h3M879 337h6M1061 337h5M957 338h3M1053 339h4M900 340h3M905 340h4M982 340h4M883 341h1M1030 342h5M998 343h5M1077 343h5M933 344h1M876 345h6M918 345h2M988 345h2M1045 345h4M895 346h2M876 347h4M917 347h6M1087 349h2M889 350h2M904 350h6M1057 350h2M899 351h4M1017 351h3M1027 351h4M1009 352h3M1044 352h5M990 353h2M974 355h1M1014 355h1M1016 355h5M1087 355h3M889 356h6M914 357h1M906 358h5M912 358h6M932 359h6M1017 360h4M893 362h2M920 362h1M1076 362h5M973 363h4M1039 363h1M1012 364h3M950 365h1M1061 365h1M949 366h2" stroke="#27b7d7" stroke-width="1" fill="none" transform="translate(0,0.5)"/><path d="M93 504h1M94 504h1M94 507h1M94 509h1M94 510h1M273 181h1M273 182h1M271 185h1M275 187h1M275 189h1M276 190h1M276 192h1M273 193h1M278 198h1M278 199h1M286 246h1M284 249h2M286 249h1M287 251h1M287 252h1M284 252h1M287 253h1M288 257h1M288 259h1M292 301h2M292 302h2M292 303h2M294 303h1M292 304h2M294 304h1M293 305h2M292 305h1M293 306h2M293 307h2M293 308h2M293 309h2M293 310h2M295 310h1M294 311h2M294 312h2M294 313h2M294 314h2M293 314h1M294 315h2M294 316h2M295 317h2M295 318h2M295 319h2M295 320h2M300 361h2M300 362h2M300 363h2M301 364h2M301 365h2M301 366h2M301 367h2M302 368h2M302 369h2M302 370h2M302 371h2M302 372h2M304 372h1M303 373h2M305 373h1M302 373h1M303 374h2M303 375h2M305 375h1M303 376h2M303 377h2M304 378h2M303 393h1M303 396h1M304 399h1M304 402h1M304 403h1M305 406h1M311 422h1M312 423h1M309 423h1M310 424h2M312 425h1M312 426h1M309 429h1M313 432h1M310 432h1M310 433h1M310 435h1M311 452h1M311 456h1M312 462h1M313 464h1M310 494h2M310 495h2M312 495h1M310 496h2M312 496h1M309 496h1M310 497h2M311 498h2M310 498h1M311 499h2M310 499h1M311 500h2M311 501h2M8 4h1M8 6h1M8 18h1M8 32h1M8 37h1M8 44h1M8 50h1M8 53h1M8 54h1M8 57h1M8 61h1M8 67h1M8 72h1M8 75h1M8 76h1M8 78h1M8 91h1M8 92h1M8 93h1M8 95h1M8 96h1M8 97h1M8 102h1M8 104h1M8 112h1M8 117h1M8 119h1M8 134h1M8 135h1M8 138h1M8 142h1M8 143h1M8 149h1M8 150h1M8 152h1M8 155h1M8 159h1M8 163h1M8 172h1M8 174h1M8 185h1M8 189h1M8 194h1M8 198h1M8 202h1M8 206h1M8 210h1M8 218h1M8 221h1M8 224h1M8 225h1M8 227h1M8 229h1M8 230h1M8 235h1M8 241h1M8 244h1M8 245h1M8 246h1M8 252h1M8 256h1M8 258h1M8 260h1M8 262h1M8 264h1M8 267h1M8 269h1M8 273h1M8 278h1M8 288h1M8 293h1M8 298h1M8 301h1M8 302h1M8 303h1M8 306h1M8 310h1M8 312h1M8 314h1M8 318h1M8 319h1M8 323h1M8 325h1M8 330h1M8 333h1M8 340h1M8 347h1M8 353h1M8 355h1M8 365h1M8 367h1M8 369h1M8 375h1M8 378h1M8 385h1M8 388h1M8 389h1M8 391h1M8 400h1M8 401h1M8 420h1M8 422h1M8 424h1M8 425h1M8 433h1M8 436h1M8 437h1M8 443h1M8 444h1M8 445h1M8 452h1M8 460h1M8 467h1M8 470h1M8 473h1M8 476h1M8 479h1M8 484h1M8 499h1M8 501h1M8 504h1M8 510h1M8 511h1M8 516h1M8 534h1M319 2h1M319 4h1M319 5h1M319 9h1M319 10h1M319 11h1M319 13h1M319 16h1M319 18h1M319 21h1M319 22h1M319 23h1M319 26h1M319 27h1M319 30h1M319 31h1M319 32h1M319 33h1M319 34h1M319 35h1M319 38h1M319 45h1M319 47h1M319 51h1M319 53h1M319 55h1M319 58h1M319 59h1M319 60h1M319 61h1M319 64h1M319 65h1M319 72h1M319 74h1M319 76h1M319 77h1M319 79h1M319 82h1M319 84h1M319 86h1M319 87h1M319 90h1M319 93h1M319 94h1M319 95h1M319 99h1M319 100h1M319 103h1M319 104h1M319 107h1M319 108h1M319 109h1M319 110h1M319 113h1M319 116h1M319 117h1M319 122h1M319 123h1M319 124h1M319 128h1M319 129h1M319 133h1M319 135h1M319 138h1M319 139h1M319 140h1M319 146h1M319 149h1M319 150h1M319 152h1M319 155h1M319 156h1M319 157h1M319 159h1M319 160h1M319 163h1M319 164h1M319 165h1M319 167h1M319 173h1M319 174h1M319 177h1M319 178h1M319 179h1M319 180h1M319 182h1M319 187h1M319 190h1M319 191h1M319 194h1M319 196h1M319 198h1M319 202h1M319 204h1M319 207h1M319 208h1M319 209h1M319 210h1M319 211h1M319 212h1M319 213h1M319 215h1M319 216h1M319 218h1M319 219h1M319 220h1M319 223h1M319 225h1M319 226h1M319 227h1M319 229h1M319 231h1M319 235h1M319 242h1M319 243h1M319 244h1M319 245h1M319 246h1M319 251h1M319 252h1M319 254h1M319 258h1M319 261h1M319 262h1M319 263h1M319 264h1M319 265h1M319 269h1M319 274h1M319 278h1M319 279h1M319 280h1M319 283h1M319 286h1M319 288h1M319 289h1M319 293h1M319 302h1M319 306h1M319 307h1M319 308h1M319 309h1M319 310h1M319 314h1M319 315h1M319 319h1M319 320h1M319 324h1M319 325h1M319 326h1M319 327h1M319 328h1M319 329h1M319 331h1M319 332h1M319 336h1M319 339h1M319 340h1M319 342h1M319 343h1M319 345h1M319 349h1M319 350h1M319 352h1M319 353h1M319 355h1M319 358h1M319 359h1M319 360h1M319 361h1M319 362h1M319 364h1M319 365h1M319 368h1M319 370h1M319 373h1M319 375h1M319 376h1M319 377h1M319 378h1M319 379h1M319 380h1M319 389h1M319 391h1M319 395h1M319 402h1M319 407h1M319 408h1M319 410h1M319 411h1M319 413h1M319 414h1M319 416h1M319 417h1M319 418h1M319 421h1M319 423h1M319 425h1M319 427h1M319 429h1M319 430h1M319 433h1M319 434h1M319 435h1M319 436h1M319 437h1M319 438h1M319 439h1M319 441h1M319 442h1M319 443h1M319 444h1M319 445h1M319 446h1M319 449h1M319 452h1M319 454h1M319 455h1M319 456h1M319 460h1M319 461h1M319 464h1M319 466h1M319 469h1M319 472h1M319 473h1M319 474h1M319 475h1M319 478h1M319 480h1M319 481h1M319 483h1M319 484h1M319 485h1M319 486h1M319 487h1M319 489h1M319 491h1M319 493h1M319 494h1M319 495h1M319 496h1M319 502h1M319 503h1M319 505h1M319 506h1M319 507h1M319 513h1M319 514h1M319 515h1M319 516h1M319 517h1M319 520h1M319 523h1M319 524h1M319 525h1M319 526h1M319 528h1M319 530h1M319 534h1M780 14h1M780 23h1M780 24h1M780 32h1M780 35h1M780 36h1M780 48h1M780 50h1M780 56h1M780 64h1M780 68h1M780 74h1M780 82h1M780 86h1M780 89h1M780 93h1M780 96h1M780 99h1M780 102h1M780 103h1M780 107h1M780 123h1M780 124h1M780 125h1M780 128h1M780 150h1M780 162h1M780 166h1M780 172h1M780 173h1M780 194h1M780 196h1M780 199h1M780 203h1M780 204h1M780 206h1M780 207h1M780 212h1M780 213h1M780 219h1M780 234h1M780 236h1M780 241h1M780 249h1M780 252h1M780 255h1M780 267h1M780 270h1M780 271h1M780 278h1M780 284h1M780 311h1M780 312h1M780 314h1M780 326h1M780 329h1M780 330h1M780 331h1M780 347h1M780 349h1M780 356h1M780 358h1M780 360h1M780 362h1M780 364h1M780 367h1M780 369h1M780 371h1M780 374h1M780 375h1M780 380h1M780 384h1M780 394h1M780 407h1M780 413h1M780 429h1M780 430h1M780 435h1M780 440h1M780 443h1M780 452h1M780 460h1M780 480h1M780 484h1M780 486h1M780 494h1M780 499h1M780 506h1M780 515h1M780 516h1M780 519h1M780 523h1M780 536h1M779 2h1M779 16h1M779 21h1M779 38h1M779 58h1M779 77h1M779 81h1M779 96h1M779 97h1M779 105h1M779 110h1M779 111h1M779 128h1M779 134h1M779 142h1M779 146h1M779 160h1M779 167h1M779 178h1M779 184h1M779 191h1M779 200h1M779 201h1M779 207h1M779 208h1M779 214h1M779 230h1M779 239h1M779 240h1M779 241h1M779 249h1M779 253h1M779 258h1M779 260h1M779 265h1M779 273h1M779 303h1M779 304h1M779 306h1M779 308h1M779 325h1M779 332h1M779 352h1M779 354h1M779 363h1M779 371h1M779 372h1M779 381h1M779 382h1M779 387h1M779 388h1M779 390h1M779 398h1M779 403h1M779 405h1M779 416h1M779 423h1M779 427h1M779 451h1M779 487h1M779 490h1M779 499h1M779 506h1M779 508h1M779 509h1M779 527h1M9 4h2M7 5h4M7 6h2M13 10h3M15 12h3M0 13h1M3 16h4M17 16h2M5 17h1M8 26h4M3 28h3M0 31h4M13 31h3M0 32h3M6 32h1M5 33h1M7 39h1M9 44h1M16 44h3M11 46h2M0 51h3M1 54h2M6 57h2M7 58h1M15 59h2M11 62h2M6 68h3M4 71h1M2 396h1M4 402h2M2 404h2M1 406h3M2 409h1M2 417h3M0 435h1M0 438h3M2 440h3M1 448h1M0 449h1M0 451h1M2 452h2M2 456h3M4 459h1M3 460h2M4 461h2M3 468h2M2 475h2M0 478h2M0 482h3M2 483h2M4 484h2M4 487h1M5 503h3M1 509h2M5 517h1M2 518h3M3 519h1M0 523h2M1 525h2M1014 494h1M1012 497h1M1010 500h1M1009 501h1M1011 504h1M1010 517h1M1012 519h1M1013 524h1M1010 530h1M1010 531h1M886 8h5M905 8h1M925 11h1M916 12h1M895 14h4M892 15h3M925 15h6M925 17h2M900 18h3M905 18h2M895 19h4M901 19h5M915 22h3M918 22h4M930 24h2M915 25h3M853 24h3M909 24h3M865 25h2M917 25h2M920 25h5M890 26h1M877 0h4M985 0h2M1001 0h2M1002 1h2M1031 1h3M989 2h6M995 2h6M1003 2h6M1020 3h1M972 4h5M1027 4h4M975 7h4M985 7h1M989 7h5M1025 8h6M991 9h6M976 11h6M999 11h6M1005 11h6M985 12h2M983 13h4M1003 13h5M1025 13h4M1029 13h3M992 15h1M1035 15h1M1015 16h5M1020 16h4M997 26h2M979 29h4M994 29h5M977 30h4M985 34h5M1006 34h1M1041 35h1M1000 36h1M1030 39h5M1036 39h3M1023 41h1M1032 41h3M988 44h3M1007 44h1M1037 44h2M1004 45h2M1038 46h4M1035 47h3M992 48h4M1003 52h5M1027 52h2M1022 53h5M882 37h3M889 38h4M898 42h1M884 45h6M899 45h1M888 49h2M896 50h2M899 53h5M936 53h3M906 54h6M934 54h4M894 56h1M930 56h3M936 57h2M918 58h2M927 60h4M938 61h5M904 62h6M899 63h2M901 63h5M914 63h5M920 63h6M920 64h6M938 64h5M920 65h2M922 65h3M898 67h4M924 67h3M935 67h6M938 68h4M905 69h6M913 69h2M938 70h4M928 73h6M912 74h5M935 74h2M942 74h2M937 53h5M935 56h3M898 70h4M911 72h1M891 75h2M894 75h1M887 76h6M899 76h6M902 77h5M893 78h4M904 81h6M906 88h2M896 90h1M894 84h2M925 84h5M941 84h1M847 85h4M851 85h1M900 85h4M933 85h6M939 85h6M871 86h6M897 86h5M931 86h6M939 86h5M857 87h3M877 87h3M845 88h3M879 88h5M891 88h5M898 88h5M904 88h5M928 88h3M870 89h3M939 89h5M848 90h5M925 90h3M850 91h3M873 91h4M925 91h5M946 91h1M856 92h2M886 92h1M926 92h2M897 93h2M864 94h1M876 94h3M890 94h6M941 94h5M858 95h5M863 95h3M898 95h5M923 95h4M928 95h6M942 95h1M871 97h1M922 97h4M943 97h3M866 98h3M870 98h5M853 99h2M874 99h4M887 99h1M895 99h2M897 99h4M899 113h5M897 114h6M879 127h3M914 127h6M920 127h2M872 128h5M913 128h6M932 128h5M868 129h4M901 129h4M916 129h1M903 130h5M924 130h3M935 130h2M926 131h2M938 131h5M853 148h2M881 153h3M854 133h3M856 139h3M858 146h1M914 132h3M920 134h2M929 134h2M919 141h2M927 144h5M944 132h5M923 133h5M943 134h2M893 138h1M903 140h3M906 140h1M894 141h1M946 141h5M938 142h5M925 143h4M948 144h4M890 145h6M884 146h2M914 146h6M916 156h3M919 156h5M936 156h6M919 159h3M923 159h2M927 159h4M931 160h1M915 161h4M921 161h3M925 161h3M940 161h2M945 161h1M956 161h2M941 162h3M924 163h5M939 163h1M914 165h6M923 165h6M936 165h2M950 165h2M915 166h1M934 167h1M916 168h4M920 168h4M881 168h3M889 168h4M911 168h1M905 170h6M908 171h3M884 172h2M865 173h5M898 174h2M901 174h4M914 174h1M910 175h5M889 176h1M891 177h2M894 177h3M915 177h1M908 178h2M868 179h6M882 179h5M888 179h2M891 180h4M909 180h2M911 180h1M882 182h4M905 182h2M872 183h1M911 184h2M866 185h3M873 185h1M877 188h2M872 189h2M876 189h2M899 190h5M876 191h1M900 191h1M877 192h4M883 192h5M943 181h3M948 181h5M944 182h6M950 183h1M959 184h4M925 185h2M933 185h5M942 185h1M955 185h4M942 188h4M957 188h5M936 189h3M933 190h6M928 191h3M919 192h1M930 192h5M925 193h4M930 193h6M944 193h6M933 194h4M939 194h2M954 194h4M960 196h3M946 197h2M960 197h3M934 199h3M925 202h5M933 202h4M951 202h2M961 202h4M950 203h6M880 208h4M884 208h5M910 208h4M889 209h4M872 210h1M908 211h3M871 212h2M896 213h6M876 215h6M884 215h4M888 215h5M875 217h4M883 219h5M880 220h6M906 220h6M902 222h1M887 223h5M890 224h6M909 224h5M898 225h6M890 226h5M907 226h3M878 227h5M908 227h2M898 229h4M902 229h3M883 230h6M893 230h5M903 230h2M913 230h3M916 230h4M890 231h2M894 231h5M893 232h6M900 233h4M890 234h3M940 224h1M953 231h5M923 233h6M963 233h6M931 235h1M924 238h4M944 238h6M957 238h6M947 239h6M943 244h3M929 246h4M935 246h6M933 247h2M962 248h5M903 248h3M877 250h6M896 250h1M906 250h6M920 250h5M896 253h6M919 253h6M893 254h3M919 254h4M909 255h5M884 257h4M888 257h4M878 260h3M910 260h5M919 261h6M918 266h5M899 268h2M903 268h3M922 270h2M926 270h1M897 270h5M959 270h6M877 271h4M899 271h4M921 271h4M874 272h5M879 272h2M917 272h1M939 272h4M880 273h1M940 274h5M969 274h3M912 275h3M944 275h2M960 275h5M912 277h4M956 277h5M894 278h3M931 279h6M958 279h3M963 279h4M884 280h6M905 280h6M915 281h3M946 281h3M956 281h3M883 284h1M897 285h5M910 286h3M906 287h5M925 287h1M913 288h1M898 289h6M921 289h3M885 290h5M930 290h5M883 292h1M885 292h6M895 292h5M902 292h6M912 292h6M884 293h1M891 293h5M913 293h2M916 293h4M922 293h2M887 294h5M927 294h6M882 295h5M912 296h5M934 296h3M885 297h4M908 297h5M919 297h3M895 298h3M898 299h3M918 299h4M887 300h4M902 300h2M917 300h6M888 301h1M915 301h4M892 302h3M895 302h6M921 302h5M922 303h5M900 304h2M915 305h4M933 305h1M936 305h2M894 306h1M920 306h6M922 307h2M922 308h4M932 308h3M934 288h1M933 291h1M911 317h2M935 317h1M948 317h5M912 318h5M930 318h3M898 321h1M931 322h3M910 323h4M917 323h6M931 323h3M930 325h2M900 326h4M905 327h2M934 327h5M902 328h5M924 328h2M927 329h2M953 329h2M966 329h2M907 330h5M919 330h1M890 331h2M919 331h3M954 331h3M920 333h6M928 334h5M974 334h2M960 335h4M969 335h2M980 335h1M901 336h6M966 336h4M911 337h5M901 338h3M969 338h1M918 339h5M932 339h1M964 359h3M972 360h2M982 361h6M974 363h4M951 366h2M953 369h6M974 369h3M964 370h6M977 370h4M957 371h2M958 374h6M966 374h3M991 375h1M983 377h3M950 386h2M947 392h2M947 395h5M951 415h2M983 432h2M968 433h6M992 434h3M988 435h5M964 441h2M995 441h2M965 442h1M995 442h2M994 446h3M954 447h6M973 448h3M958 459h2M957 470h4M955 481h5M973 483h2M954 484h4M977 485h5M970 486h4M984 486h4M995 486h3M998 486h3M980 487h3M990 487h1M972 488h1M967 489h2M981 491h3M977 492h2M992 492h1M956 514h2M957 517h6M964 517h5M958 522h4M1051 388h2M1059 389h6M1084 389h3M1054 390h5M1075 392h3M1083 393h6M1071 394h6M1088 394h3M1050 395h6M1063 395h1M1078 395h4M1050 396h4M1060 398h2M1072 398h1M1080 398h4M1084 398h2M1069 403h5M1081 403h2M1089 403h2M1073 405h5M1090 405h1M1072 408h5M1081 408h2M1089 408h2M1057 409h1M1085 409h6M1067 411h4M1076 412h1M1074 413h4M1067 417h5M1068 418h4M1050 370h6M1056 370h6M1065 371h5M1086 372h1M1051 373h3M1077 375h5M1080 510h2M1062 511h4M1069 511h4M1086 511h2M1081 513h6M1086 518h2M1069 519h6M1077 519h6M1090 521h1M777 406h1M780 406h3M784 406h4M783 407h2M775 411h2M778 411h2M770 412h6M777 421h3M788 421h2M775 422h2M782 422h6M789 428h2M905 17h2M952 17h4M920 18h3M898 19h5M931 30h5M860 32h3M893 35h1M895 36h6M855 37h3M879 39h6M889 39h5M859 40h2M878 41h3M909 45h3M953 45h4M975 46h3M717 141h3M789 143h6M572 144h6M612 144h3M638 144h5M719 144h1M624 146h5M635 146h1M738 146h5M573 148h6M649 148h2M760 148h6M644 149h3M683 150h1M524 151h1M584 152h1M737 152h3M808 152h4M629 153h4M704 155h4M796 155h4M758 156h4M789 158h2M654 159h2M689 159h2M536 160h2M569 160h4M614 160h1M779 160h4M825 160h3M744 161h4M852 161h4M633 162h3M651 165h1M793 165h6M718 166h5M590 167h3M570 168h4M583 168h1M601 168h6M485 169h4M569 169h5M690 169h2M580 170h2M852 173h5M537 174h1M572 175h6M736 175h3M533 176h4M703 176h1M573 177h5M614 177h2M492 180h5M537 180h6M823 180h3M578 182h3M826 182h3M495 184h4M602 184h2M691 184h1M640 185h2M558 201h6M801 201h5M522 203h6M521 204h2M805 204h6M851 204h4M548 207h6M655 207h5M506 208h1M668 210h4M834 214h4M723 215h4M762 215h2M805 216h1M642 217h5M715 217h3M730 218h2M515 219h5M677 219h5M667 220h4M680 220h5M874 221h2M819 222h6M764 223h5M623 224h4M628 224h6M716 224h1M862 225h1M524 228h3M834 229h2M517 231h5M555 231h2M602 232h1M718 235h1M670 237h6M523 238h2M809 241h1M722 242h5M516 243h1M545 245h1M611 245h4M594 246h3M707 246h5M739 267h1M681 268h2M598 269h6M568 270h3M754 270h3M761 270h5M778 270h1M738 272h6M803 272h2M687 273h4M620 274h2M750 276h1M865 276h6M647 277h1M846 278h3M707 279h5M793 279h6M692 281h2M589 285h6M816 285h3M556 286h1M770 287h5M618 288h2M735 288h2M687 289h4M691 290h6M783 291h2M629 292h3M767 292h2M573 293h3M844 293h4M582 294h2M658 294h1M734 294h5M763 295h1M738 296h2M817 296h3M565 297h1M698 298h3M826 298h2M547 299h3M707 299h2M733 299h5M834 300h3M558 301h2M791 303h5M591 304h4M681 304h2M622 305h3M565 306h3M597 306h6M640 306h6M1049 347h2M878 349h5M1047 349h1M1067 350h5M831 352h5M925 352h2M959 352h6M1057 352h5M900 353h5M1036 353h4M919 354h2M854 355h1M965 356h5M872 357h3M1043 357h4M894 364h6M939 365h3M982 367h2M882 369h1M885 369h2M817 370h5M1045 370h4M948 374h1M956 376h1M865 377h3M887 377h3M1058 377h6M901 378h5M831 379h1M820 380h5M1024 381h2M883 382h3M834 384h6M1039 384h3M1043 384h3M933 385h6M1025 385h2M863 386h1M527 369h5M553 370h5M579 370h2M596 370h2M988 190h4M941 191h3M919 192h1M953 192h5M976 192h1M981 196h1M1004 197h5M899 198h4M908 198h2M1004 199h5M888 200h1M882 207h6M969 209h5M945 210h3M951 213h5M993 215h4M945 216h6M953 216h4M1018 266h4M888 267h4M961 267h6M910 268h2M936 268h1M1019 269h6M1042 270h3M1012 271h4M895 273h2M894 274h1M1034 274h2M929 275h2M1054 275h2M1034 279h4M877 281h1M893 281h6M974 281h5M1066 282h6M936 283h3M1059 283h2M1066 283h1M956 284h2M1049 284h2M1061 284h4M1012 286h4M1062 286h6M994 287h4M1007 288h3M950 290h3M883 291h2M994 291h2M998 291h3M1040 291h5M1061 336h3M1010 337h6M983 338h4M990 338h4M1026 338h1M1060 338h1M961 340h3M920 342h6M934 342h1M1065 342h6M973 344h6M1033 344h3M1042 345h1M1087 345h1M906 347h3M1028 349h3M1080 349h1M997 351h1M1075 353h2M1064 354h2M992 358h1M1019 358h4M901 359h4M986 359h5M908 361h6M966 361h6M985 362h3M989 362h6M978 363h6M990 363h2M949 365h1M941 366h2" stroke="#52e0d0" stroke-width="1" fill="none" transform="translate(0,0.5)"/><path d="M309 452h2M309 453h2M309 454h2M309 455h2M309 456h2M309 457h2M310 458h2M310 459h2M310 460h2M310 461h2M310 462h2M311 463h2M311 464h2M311 465h2M311 466h2M311 467h2M311 468h2M312 469h2M312 470h2M312 471h2M319 1h1M319 7h1M319 14h1M319 24h1M319 25h1M319 28h1M319 39h1M319 43h1M319 44h1M319 49h1M319 50h1M319 52h1M319 56h1M319 57h1M319 62h1M319 66h1M319 67h1M319 69h1M319 70h1M319 75h1M319 78h1M319 81h1M319 85h1M319 88h1M319 91h1M319 92h1M319 96h1M319 101h1M319 102h1M319 111h1M319 112h1M319 125h1M319 130h1M319 131h1M319 134h1M319 141h1M319 147h1M319 151h1M319 153h1M319 158h1M319 161h1M319 166h1M319 171h1M319 184h1M319 185h1M319 186h1M319 188h1M319 189h1M319 193h1M319 195h1M319 206h1M319 222h1M319 232h1M319 234h1M319 236h1M319 241h1M319 249h1M319 256h1M319 257h1M319 266h1M319 268h1M319 270h1M319 272h1M319 281h1M319 282h1M319 290h1M319 291h1M319 296h1M319 298h1M319 299h1M319 300h1M319 311h1M319 313h1M319 322h1M319 330h1M319 333h1M319 334h1M319 335h1M319 338h1M319 341h1M319 344h1M319 348h1M319 351h1M319 354h1M319 356h1M319 357h1M319 363h1M319 367h1M319 383h1M319 384h1M319 387h1M319 388h1M319 392h1M319 394h1M319 396h1M319 397h1M319 400h1M319 406h1M319 409h1M319 412h1M319 420h1M319 424h1M319 426h1M319 432h1M319 453h1M319 463h1M319 468h1M319 470h1M319 471h1M319 476h1M319 482h1M319 490h1M319 498h1M319 499h1M319 500h1M319 504h1M319 508h1M319 511h1M319 527h1M319 529h1M319 533h1M319 536h1M780 10h1M780 16h1M780 18h1M780 22h1M780 27h1M780 29h1M780 31h1M780 39h1M780 52h1M780 55h1M780 67h1M780 72h1M780 77h1M780 78h1M780 79h1M780 84h1M780 88h1M780 101h1M780 109h1M780 112h1M780 113h1M780 114h1M780 122h1M780 129h1M780 137h1M780 143h1M780 156h1M780 161h1M780 163h1M780 169h1M780 175h1M780 180h1M780 184h1M780 188h1M780 189h1M780 195h1M780 200h1M780 205h1M780 211h1M780 214h1M780 218h1M780 224h1M780 226h1M780 239h1M780 240h1M780 262h1M780 266h1M780 269h1M780 272h1M780 287h1M780 290h1M780 296h1M780 297h1M780 298h1M780 299h1M780 302h1M780 316h1M780 317h1M780 327h1M780 332h1M780 334h1M780 335h1M780 336h1M780 337h1M780 346h1M780 351h1M780 355h1M780 357h1M780 382h1M780 383h1M780 389h1M780 391h1M780 397h1M780 400h1M780 406h1M780 408h1M780 409h1M780 410h1M780 411h1M780 416h1M780 421h1M780 422h1M780 424h1M780 425h1M780 431h1M780 438h1M780 450h1M780 456h1M780 461h1M780 463h1M780 464h1M780 473h1M780 477h1M780 483h1M780 488h1M780 498h1M780 521h1M780 524h1M780 534h1M6 7h4M8 8h3M4 9h3M0 17h2M3 18h3M8 20h3M8 21h1M11 23h1M0 30h3M3 36h1M8 42h2M3 57h3M6 63h3M6 67h3M0 69h2M3 398h2M4 399h1M1 405h3M4 412h1M2 418h1M2 424h3M2 425h2M3 427h2M3 428h2M1 433h2M4 444h1M3 454h2M3 457h1M1 464h3M1 466h3M3 472h3M4 474h2M0 479h1M0 480h2M4 489h1M2 496h2M4 500h2M4 502h1M3 504h1M3 512h3M2 514h2M5 515h2M2 520h1M3 527h1M3 531h3M4 532h2M1010 502h1M1012 505h1M1013 506h1M1013 509h1M1011 512h1M1010 513h1M1010 514h1M1009 515h1M1011 518h1M1014 522h1M1012 525h1M1010 527h1M1012 533h1M1013 535h1M884 9h5M919 9h6M901 10h1M919 12h4M922 13h1M899 14h6M909 17h5M915 17h1M890 18h6M916 18h3M902 20h2M930 21h1M890 22h2M893 22h3M896 23h2M924 23h2M987 0h2M982 3h3M979 4h6M989 4h2M977 5h2M1022 5h1M1024 5h5M1006 6h6M1013 6h3M1018 8h6M1033 10h2M987 14h4M992 14h5M988 15h3M994 15h6M1027 16h6M987 17h5M1034 28h4M988 29h4M1024 30h6M1033 31h1M991 32h5M998 33h1M1029 33h6M980 37h4M1013 38h3M982 40h2M999 42h3M1005 43h2M1000 47h1M1022 50h2M1043 53h1M897 40h2M893 43h5M892 45h6M898 50h2M886 53h5M892 53h3M907 56h4M929 57h5M934 57h1M897 59h1M918 59h6M920 61h5M928 61h3M917 62h5M913 64h5M904 69h1M921 71h5M916 73h6M900 74h1M903 74h5M933 61h3M932 65h6M933 69h6M898 71h2M907 71h1M897 83h5M914 89h1M895 92h1M902 93h1M903 95h1M910 96h6M905 97h3M908 97h3M863 84h5M870 84h2M872 84h2M909 86h6M901 87h4M851 88h4M855 89h3M863 89h5M881 89h2M932 89h4M866 90h6M874 90h2M904 90h2M907 90h1M908 90h5M941 90h3M861 91h2M887 92h3M890 92h4M904 92h3M926 93h5M928 94h6M850 95h6M855 96h3M921 96h6M903 97h2M907 97h4M931 97h6M881 99h5M900 111h2M899 112h2M870 127h4M886 127h5M870 128h2M910 128h2M863 129h4M872 129h3M907 129h5M854 130h2M888 130h6M867 131h5M908 131h2M936 131h2M950 131h1M863 148h6M886 148h5M864 149h3M888 149h5M896 150h2M858 151h4M864 152h6M889 152h3M856 142h2M928 156h3M927 157h1M951 157h3M936 158h6M919 160h5M943 161h1M924 162h5M948 162h5M922 165h1M924 166h6M956 166h2M924 167h5M929 167h2M949 167h4M938 168h4M869 168h1M882 171h2M897 171h6M914 171h1M875 172h2M892 172h3M908 173h2M878 174h3M887 175h1M880 177h3M885 177h5M911 177h1M873 178h2M898 181h4M899 182h5M881 183h4M887 183h5M887 184h2M898 184h5M907 184h3M871 185h2M899 185h5M882 187h3M890 187h4M897 188h3M881 190h5M909 190h2M890 191h5M915 193h3M917 181h4M916 182h1M922 182h3M958 182h4M918 183h2M917 184h6M931 184h1M918 186h1M922 189h1M919 190h6M926 190h5M942 190h3M943 196h3M955 197h5M941 198h6M939 199h6M947 199h1M948 199h6M946 200h4M945 203h3M869 208h1M902 208h1M900 209h4M870 210h2M880 210h6M909 212h5M916 214h1M875 216h3M880 217h2M892 218h6M915 218h3M870 219h5M907 219h6M891 220h2M893 220h2M885 221h6M872 222h3M871 223h3M876 224h3M886 224h4M885 227h3M905 228h3M913 228h3M918 228h1M906 229h5M883 232h4M911 233h5M902 234h3M940 226h2M965 231h1M973 231h2M938 232h3M948 232h1M955 232h1M924 234h5M950 234h5M941 235h4M920 236h5M927 236h4M960 239h6M927 240h6M958 244h2M950 245h1M936 247h4M953 247h1M963 247h2M941 250h6M942 251h5M954 251h4M899 247h5M910 249h2M904 250h1M894 252h4M913 252h2M919 255h1M902 256h5M877 258h5M878 259h2M917 263h6M925 265h2M925 267h1M909 268h5M880 270h6M899 270h5M886 270h1M927 270h2M953 270h5M912 271h3M936 271h5M951 271h6M874 273h4M901 273h5M920 273h5M886 274h2M948 275h5M974 275h2M931 276h4M962 276h5M875 277h1M917 277h6M924 279h6M948 280h3M969 280h5M896 281h4M902 281h6M938 281h6M944 281h1M892 284h2M911 284h3M901 286h2M905 286h3M915 286h4M890 287h4M889 289h5M891 290h3M896 290h3M907 290h2M912 290h1M920 290h5M891 291h4M920 291h2M936 291h1M898 293h1M892 295h2M911 295h6M888 298h4M893 298h2M914 298h2M930 298h4M935 298h2M885 300h1M885 301h1M891 301h6M934 301h2M921 304h4M921 305h5M907 308h2M920 317h2M918 319h5M926 319h3M903 320h3M933 320h3M937 320h3M915 321h5M934 321h6M894 322h3M949 322h3M974 322h1M975 322h5M979 323h1M932 324h4M955 324h2M978 324h4M891 325h3M912 325h4M932 325h6M931 326h3M897 327h5M899 328h1M948 328h4M906 329h1M936 329h6M928 330h5M937 330h2M965 330h1M901 331h5M906 331h2M910 331h3M945 331h4M889 332h5M903 332h4M892 333h5M912 334h6M922 334h1M962 334h1M921 335h1M950 335h1M977 336h4M901 337h3M957 337h3M930 338h5M971 338h3M962 359h2M955 360h5M946 361h4M980 363h6M985 364h3M948 365h6M975 367h2M969 369h2M979 369h4M976 374h2M963 377h2M991 377h1M947 388h5M948 399h5M951 420h3M955 426h2M973 434h1M967 435h4M972 439h6M979 439h1M990 441h4M969 443h4M990 446h2M977 447h6M974 449h3M976 451h1M954 459h4M959 463h1M985 482h6M999 483h5M994 484h6M1001 484h4M998 491h3M1077 389h5M1053 393h1M1076 393h1M1064 394h1M1054 398h4M1082 401h3M1085 402h4M1089 402h2M1071 404h6M1056 405h6M1075 407h6M1075 409h4M1082 415h1M774 408h4M780 408h5M785 408h4M785 409h4M770 410h6M776 412h2M777 413h6M776 415h2M771 416h4M779 416h3M772 419h2M787 424h4M780 428h4M573 369h5M579 369h3M524 370h6M559 370h6" stroke="#a6e85a" stroke-width="1" fill="none" transform="translate(0,0.5)"/><path d="M17 13h1M14 15h1M17 16h1M14 16h1M16 20h2M18 21h1M18 22h1M18 24h1M16 31h1M28 72h1M26 75h2M28 76h1M29 78h1M30 82h1M30 84h1M37 129h1M35 131h1M38 132h1M36 132h1M38 133h1M38 134h1M36 135h1M37 139h1M39 141h1M37 141h1M40 143h1M46 192h1M47 193h2M47 199h1M51 205h1M51 206h1M52 208h1M49 208h1M60 259h1M60 260h1M58 263h1M68 312h1M65 313h1M69 320h1M69 321h1M70 322h1M67 323h1M67 325h1M71 328h1M68 329h1M76 375h1M77 378h1M77 379h1M78 382h1M77 383h1M76 383h1M76 385h1M77 390h1M79 391h1M79 392h1M77 392h1M85 435h1M83 438h1M83 440h1M86 441h1M85 442h2M87 442h1M87 446h1M87 447h1M88 449h1M93 505h1M93 506h1M93 507h1M93 508h1M93 509h1M93 510h1M94 511h1M94 512h1M229 7h1M230 9h1M231 14h1M233 21h1M234 22h3M237 23h1M233 24h1M240 39h1M245 42h1M242 45h1M242 47h1M247 48h1M248 52h1M245 63h1M241 63h1M245 64h1M244 73h3M247 73h1M245 75h3M248 77h1M245 80h1M254 93h1M255 95h1M256 99h1M254 102h3M257 103h1M259 111h1M255 111h1M255 123h1M256 124h1M256 126h1M254 130h3M257 131h1M258 132h1M254 133h1M255 134h3M258 134h1M255 138h1M260 140h1M266 186h1M267 187h1M263 187h1M267 190h1M266 200h1M271 181h2M271 182h2M272 183h2M272 184h2M272 185h2M272 186h2M273 187h2M273 188h2M273 189h2M274 190h2M274 191h2M274 192h2M274 193h2M275 194h2M275 195h2M275 196h2M275 197h2M276 198h2M276 199h2M276 200h2M272 212h3M276 213h1M277 217h1M276 226h3M276 227h3M275 227h1M280 231h1M276 243h1M276 244h1M276 245h1M277 247h1M277 250h1M279 255h1M275 257h1M279 258h1M280 260h1M283 241h2M283 242h2M283 243h2M283 244h2M283 245h2M284 246h2M284 247h2M284 248h2M284 250h2M285 251h2M285 252h2M285 253h2M285 254h2M285 255h2M286 256h2M286 257h2M286 258h2M286 259h2M286 260h2M287 261h2M281 271h1M282 273h1M282 277h1M284 279h3M287 281h1M284 282h3M288 287h1M282 304h1M286 305h1M282 305h1M286 307h1M282 307h1M287 309h1M287 311h1M283 312h1M287 313h1M283 313h1M288 316h1M285 318h3M289 321h1M294 332h1M295 335h1M295 337h1M295 338h1M292 341h1M292 342h1M294 351h1M291 366h1M295 367h1M291 368h1M296 373h1M296 374h1M296 375h1M301 392h2M301 393h2M301 394h2M301 395h2M301 396h2M301 397h2M302 398h2M302 399h2M302 400h2M302 401h2M302 402h2M302 403h2M303 404h2M303 405h2M303 406h2M303 407h2M303 408h2M303 409h2M304 410h2M304 411h2M300 426h3M303 427h1M301 428h3M304 428h1M301 433h1M305 434h1M306 439h1M303 440h3M306 440h1M303 442h3M310 485h1M311 488h1M311 489h1M312 490h1M308 491h1M309 492h3M316 514h3M316 516h3M315 517h1M320 520h1M320 521h1M321 523h1M321 524h1M321 526h1M551 11h1M556 15h1M553 16h1M556 17h1M569 84h1M569 85h1M566 86h1M567 88h2M570 92h1M567 92h1M571 97h1M571 99h1M570 103h2M572 104h1M576 128h1M576 129h1M573 129h1M573 130h1M575 132h2M574 133h1M574 134h1M578 136h1M579 145h1M580 147h1M580 148h1M580 151h1M581 156h1M582 159h1M581 167h2M584 170h1M581 170h1M581 171h1M584 174h1M585 179h1M583 180h2M786 14h1M787 15h1M787 17h1M787 18h1M784 18h1M788 24h1M786 30h1M790 33h1M790 34h1M787 36h1M791 38h1M791 43h1M792 44h1M789 44h1M792 46h1M789 46h1M792 48h1M793 53h1M795 61h1M795 63h1M792 63h1M795 65h1M794 66h2M793 67h1M793 68h1M797 73h1M797 75h1M794 76h1M798 80h1M795 81h1M798 83h1M799 84h1M799 87h1M796 87h1M800 91h1M797 91h1M798 93h2M800 93h1M797 93h1M799 95h2M801 97h1M798 98h1M799 100h2M800 101h2M802 101h1M799 101h1M802 102h1M802 103h1M802 105h1M803 108h1M800 110h1M804 113h1M801 113h1M804 115h1M804 116h1M805 118h1M806 123h1M806 124h1M806 127h1M803 127h1M804 128h2M807 130h1M807 131h1M805 132h2M807 134h1M804 134h1M806 135h2M808 136h1M805 137h1M808 139h1M807 142h2M809 145h1M807 146h1M807 147h1M808 148h2M810 149h1M811 154h1M812 159h1M812 160h1M811 163h2M813 163h1M813 164h1M813 167h1M813 168h1M814 169h1M811 171h1M811 172h1M814 173h1M815 175h1M815 176h1M815 177h1M812 178h1M815 179h1M816 180h1M816 181h1M816 184h1M817 186h1M815 188h2M814 188h1M814 189h1M818 192h1M815 192h1M818 194h1M818 195h1M819 197h1M819 199h1M819 201h1M817 204h1M818 207h2M818 208h2M819 209h2M821 209h1M821 210h1M818 212h1M822 215h1M819 219h1M820 222h1M821 223h2M823 225h1M824 228h1M821 228h1M825 232h1M822 232h1M825 233h1M826 237h1M823 238h1M824 243h1M827 245h1M825 246h2M827 247h1M824 248h1M828 249h1M828 253h1M829 257h1M829 259h1M830 260h1M827 260h1M830 263h1M834 277h1M831 277h1M834 278h1M834 281h1M835 283h1M835 285h1M835 289h1M836 290h1M836 291h1M833 292h1M836 296h1M837 297h1M834 297h1M834 298h1M837 299h1M837 300h1M835 303h2M837 303h1M837 304h1M835 305h1M836 306h2M838 307h1M835 308h1M838 309h1M838 310h1M839 313h1M836 313h1M839 314h1M836 314h1M839 316h1M837 321h1M840 322h1M840 323h1M840 324h1M842 328h1M839 330h1M842 337h1M842 339h1M839 339h1M843 344h1M840 345h1M843 346h1M840 346h1M843 348h1M846 369h1M843 370h1M843 371h1M847 373h1M844 376h1M845 382h1M846 385h2M847 390h2M846 391h1M849 392h1M849 393h1M849 394h1M846 395h1M848 399h2M850 402h1M851 404h1M848 404h1M851 407h1M851 408h1M851 410h1M849 413h1M849 414h1M852 415h1M853 418h1M853 419h1M853 420h1M850 420h1M853 422h1M853 423h1M850 423h1M853 424h1M853 425h1M851 426h1M854 429h1M854 430h1M851 432h1M855 433h1M852 436h1M855 438h1M852 438h1M852 440h1M853 442h1M856 444h1M1088 4h1M1085 6h1M1088 7h1M1089 12h1M1086 18h1M1090 21h1M1088 22h2M1087 23h1M1087 25h1M1088 27h2M1088 29h1M941 486h1M945 494h1M945 496h1M946 503h1M944 504h1M946 504h1M944 510h1M947 511h1M948 516h1M946 517h1M948 517h1M948 519h1M947 526h1M947 529h1M950 530h1M950 531h1M950 532h1M780 1h1M780 2h1M780 3h1M780 4h1M780 6h1M780 8h1M780 9h1M780 15h1M780 19h1M780 20h1M780 25h1M780 26h1M780 28h1M780 30h1M780 34h1M780 37h1M780 40h1M780 42h1M780 46h1M780 47h1M780 49h1M780 51h1M780 53h1M780 54h1M780 57h1M780 58h1M780 59h1M780 60h1M780 62h1M780 65h1M780 66h1M780 73h1M780 75h1M780 76h1M780 83h1M780 85h1M780 87h1M780 92h1M780 95h1M780 97h1M780 98h1M780 110h1M780 115h1M780 116h1M780 117h1M780 118h1M780 120h1M780 126h1M780 132h1M780 133h1M780 134h1M780 135h1M780 136h1M780 138h1M780 139h1M780 140h1M780 142h1M780 145h1M780 146h1M780 149h1M780 151h1M780 152h1M780 153h1M780 154h1M780 155h1M780 158h1M780 159h1M780 160h1M780 167h1M780 170h1M780 176h1M780 178h1M780 181h1M780 182h1M780 183h1M780 185h1M780 187h1M780 192h1M780 197h1M780 198h1M780 201h1M780 202h1M780 208h1M780 210h1M780 215h1M780 216h1M780 217h1M780 220h1M780 222h1M780 225h1M780 228h1M780 229h1M780 230h1M780 232h1M780 233h1M780 237h1M780 242h1M780 244h1M780 245h1M780 246h1M780 247h1M780 248h1M780 250h1M780 251h1M780 256h1M780 261h1M780 263h1M780 265h1M780 268h1M780 273h1M780 276h1M780 277h1M780 279h1M780 281h1M780 285h1M780 286h1M780 289h1M780 294h1M780 300h1M780 301h1M780 303h1M780 304h1M780 305h1M780 306h1M780 309h1M780 310h1M780 313h1M780 315h1M780 320h1M780 322h1M780 323h1M780 324h1M780 333h1M780 338h1M780 339h1M780 340h1M780 343h1M780 345h1M780 348h1M780 353h1M780 359h1M780 361h1M780 363h1M780 365h1M780 366h1M780 368h1M780 370h1M780 372h1M780 373h1M780 377h1M780 378h1M780 379h1M780 381h1M780 387h1M780 390h1M780 393h1M780 396h1M780 398h1M780 401h1M780 403h1M780 404h1M780 405h1M780 414h1M780 415h1M780 418h1M780 420h1M780 427h1M780 428h1M780 432h1M780 436h1M780 439h1M780 442h1M780 445h1M780 446h1M780 447h1M780 449h1M780 451h1M780 453h1M780 454h1M780 455h1M780 458h1M780 459h1M780 462h1M780 465h1M780 466h1M780 468h1M780 469h1M780 470h1M780 476h1M780 478h1M780 479h1M780 481h1M780 482h1M780 485h1M780 489h1M780 490h1M780 491h1M780 492h1M780 495h1M780 496h1M780 497h1M780 500h1M780 501h1M780 502h1M780 503h1M780 505h1M780 507h1M780 508h1M780 509h1M780 511h1M780 512h1M780 513h1M780 518h1M780 520h1M780 522h1M780 525h1M780 526h1M780 529h1M780 532h1M780 533h1M780 535h1M2 10h3M0 15h3M11 22h3M6 25h3M2 29h1M0 34h2M0 35h1M6 40h1M9 41h1M7 47h4M2 49h2M0 50h2M3 58h1M4 59h2M10 65h4M6 66h1M2 70h4M0 75h3M1 397h2M3 400h3M4 401h3M2 403h2M0 407h2M0 408h3M1 410h2M3 411h2M4 413h3M3 414h2M4 415h1M2 416h1M0 419h2M0 420h3M0 421h2M0 422h1M1 423h3M3 426h3M3 429h3M4 430h2M3 431h3M2 432h1M1 434h2M0 436h2M0 437h2M0 439h2M3 441h2M4 442h3M4 443h2M4 445h2M3 446h1M1 447h2M0 450h1M0 453h1M3 455h3M5 458h1M1 462h3M1 463h2M1 465h2M1 467h1M4 469h1M2 470h2M4 471h2M5 473h1M2 476h2M0 477h3M3 485h1M5 486h1M4 488h2M3 490h2M2 491h2M1 492h1M0 493h2M0 494h1M1 495h2M2 497h1M4 498h2M5 499h1M5 501h3M1 505h1M2 506h3M1 508h3M0 511h3M2 513h2M5 516h1M0 521h1M1 526h1M4 528h3M5 529h2M4 530h1M2 533h3M1 534h1M0 535h3M1 536h2M1013 495h1M1013 496h1M1011 498h1M1010 499h1M1010 503h1M1013 507h1M1014 508h1M1013 510h1M1012 511h1M1010 516h1M1013 520h1M1013 521h1M1013 523h1M1011 526h1M1010 528h1M1009 529h1M1011 532h1M1013 534h1M878 8h4M899 8h6M908 8h4M915 8h2M906 9h6M909 10h3M916 10h5M879 11h6M894 11h4M928 11h2M923 12h2M899 13h3M879 14h4M927 14h3M880 15h1M895 15h5M913 15h5M923 15h1M885 16h2M888 16h1M890 16h6M911 16h3M922 16h5M929 16h2M880 17h6M887 17h4M896 18h3M912 18h3M919 18h4M889 19h4M895 20h3M905 20h4M912 20h5M898 21h2M924 21h2M897 22h1M898 22h6M910 22h5M924 22h2M912 23h1M885 24h2M899 24h6M919 24h6M887 25h4M892 25h4M870 0h4M874 0h2M867 1h1M870 1h4M879 2h1M868 4h3M877 4h4M990 0h2M1030 0h5M965 1h5M980 1h1M989 1h5M994 1h4M1023 2h5M1013 3h5M966 4h4M1012 4h5M971 7h3M1004 7h3M1018 7h6M985 8h6M967 10h4M979 10h4M995 11h2M968 12h2M1029 12h6M1010 13h2M968 14h6M975 14h5M991 16h6M1012 16h1M1005 17h6M970 26h2M973 26h2M989 26h6M989 30h5M971 31h3M1017 31h5M971 32h3M995 33h3M998 34h6M972 35h3M976 35h6M1025 35h4M973 36h4M987 36h3M1007 36h3M972 37h2M1032 37h4M999 38h1M973 40h3M1013 40h1M1003 41h2M974 44h4M1019 44h1M986 45h2M1005 46h2M975 48h3M986 48h4M975 49h5M1037 51h6M1034 52h2M1038 52h5M880 37h2M874 38h6M877 39h4M881 39h6M888 39h4M893 39h4M875 41h2M886 42h4M886 43h6M876 44h6M882 46h2M885 46h3M876 48h2M880 51h6M877 52h1M882 52h6M893 54h2M889 56h2M922 56h2M941 56h2M889 57h3M899 57h3M920 57h1M898 58h2M935 58h5M889 59h6M915 59h3M892 61h4M899 62h2M901 62h3M911 62h4M935 62h4M890 63h5M893 64h5M907 65h3M900 66h6M942 66h2M892 69h3M897 69h5M929 70h2M931 70h6M897 72h4M922 72h1M937 72h4M892 73h3M896 73h4M917 74h4M929 53h6M929 55h3M931 64h1M933 64h1M882 70h1M904 70h2M894 71h2M906 71h1M886 73h1M889 73h4M883 74h6M897 74h2M912 74h2M908 75h1M910 75h4M884 76h3M884 77h2M888 77h5M895 77h5M884 78h2M888 78h2M902 78h5M907 78h5M901 79h3M905 80h4M884 81h6M897 81h6M892 82h6M903 82h5M913 82h2M891 83h6M885 84h3M898 84h3M903 84h1M913 84h2M898 85h4M911 85h2M890 86h6M903 86h5M886 87h4M911 88h1M913 88h2M893 89h3M912 89h1M886 90h5M891 91h2M898 91h4M904 91h3M887 93h6M906 93h1M900 95h3M904 95h5M914 95h2M904 96h2M906 96h4M916 96h1M896 97h6M849 84h2M880 84h5M903 84h6M859 85h5M895 85h3M904 85h5M885 86h2M905 86h3M916 86h2M920 86h3M924 86h5M842 87h4M848 87h3M931 87h6M909 88h4M914 88h4M885 89h4M891 89h2M895 89h1M902 89h5M935 90h5M843 91h5M868 91h4M872 92h6M880 92h4M923 92h1M940 92h1M853 93h5M922 93h2M940 93h3M854 94h4M880 94h1M887 94h3M921 94h6M867 95h4M874 95h6M917 95h2M920 95h1M845 96h2M848 96h6M865 96h5M871 96h2M889 96h5M895 96h6M917 96h4M938 96h4M873 97h5M882 97h3M847 98h3M857 98h1M902 98h6M933 98h3M856 99h3M919 99h3M935 99h2M893 109h6M890 110h4M890 111h3M894 111h6M891 112h6M897 116h5M892 117h5M898 118h6M849 127h5M885 127h1M853 128h4M894 128h4M855 129h6M864 130h6M895 130h6M948 130h3M850 131h1M853 131h4M866 131h1M890 131h2M912 131h5M869 148h5M891 148h3M876 149h6M849 150h4M894 152h3M869 153h5M885 153h6M849 131h5M854 134h2M850 135h1M852 140h1M853 142h2M852 145h2M853 147h2M853 148h2M901 127h2M902 130h3M902 133h3M903 135h4M909 136h1M903 138h4M926 155h3M935 155h3M950 155h6M953 156h4M929 157h3M939 157h6M908 158h5M944 158h1M914 159h5M951 160h1M909 162h3M916 162h6M955 162h4M937 163h2M955 163h3M909 164h3M909 166h4M952 166h3M913 167h4M953 167h4M910 168h2M856 168h2M894 168h5M856 169h2M873 169h1M904 169h4M908 169h6M871 171h4M878 171h2M887 171h3M905 171h1M857 172h1M877 172h5M886 172h6M896 172h6M857 173h1M874 173h6M882 173h4M864 174h1M888 175h3M892 175h5M867 176h2M901 176h3M908 176h1M858 177h5M875 177h4M903 177h4M858 178h1M860 178h3M876 178h3M904 178h3M892 179h6M902 179h2M906 179h6M864 180h4M912 180h4M859 181h1M862 181h4M905 181h6M912 181h3M875 182h5M896 182h3M859 183h2M875 183h4M865 184h1M876 184h6M889 184h4M894 184h3M903 184h2M860 185h1M863 185h2M905 185h5M877 186h2M879 187h3M894 187h4M887 188h5M915 188h1M861 189h4M861 190h2M890 190h3M893 190h3M861 191h6M869 191h5M883 191h5M861 192h3M875 192h2M862 193h1M865 193h1M866 193h1M880 193h5M911 181h5M911 182h4M918 182h4M931 182h4M952 182h1M914 183h4M912 184h5M937 184h4M952 185h2M923 186h2M912 187h2M954 187h4M932 188h4M918 189h3M926 189h1M947 190h3M914 193h6M920 193h5M962 193h2M914 194h2M950 194h4M955 195h3M914 196h6M915 197h4M919 197h4M939 197h1M917 198h6M948 198h4M915 200h1M919 200h4M930 201h5M946 201h5M957 203h4M963 203h2M881 209h2M913 209h4M863 210h3M867 210h2M898 210h6M906 210h3M864 211h4M895 211h6M902 211h4M867 212h3M890 212h6M912 213h6M885 214h1M865 215h2M865 216h1M904 216h3M865 217h4M883 217h5M868 218h5M875 218h4M880 218h4M900 218h5M906 218h2M865 219h3M881 219h2M887 220h3M898 220h6M878 221h6M904 224h3M879 225h2M881 225h5M910 225h5M917 225h2M875 230h4M881 230h1M890 230h1M871 231h6M900 231h3M887 232h5M900 232h4M917 232h3M889 233h5M908 233h2M873 234h6M915 234h1M934 209h6M933 210h4M927 211h5M935 212h5M929 217h6M931 218h6M927 219h4M932 219h6M934 223h1M936 223h1M926 224h2M929 225h3M930 227h5M935 227h6M937 233h1M940 234h6M970 235h5M920 237h6M926 237h4M939 237h4M952 238h3M954 240h6M943 241h5M932 243h5M922 244h5M937 244h2M936 248h1M975 248h2M962 249h2M923 250h6M943 252h1M895 247h3M907 247h6M881 248h5M906 248h4M903 249h2M920 249h2M870 250h6M899 250h5M870 251h1M896 251h2M908 251h1M924 251h1M870 252h4M886 252h6M909 252h3M871 253h1M892 253h3M882 254h1M886 254h6M909 254h6M916 254h3M898 255h4M902 255h3M906 255h2M921 255h5M887 256h3M897 256h4M909 256h4M915 256h4M919 256h5M924 256h2M871 257h6M878 257h2M915 257h1M918 257h3M921 257h4M871 258h1M900 258h1M901 258h5M914 258h1M881 259h1M887 259h6M908 259h2M915 259h4M874 260h1M876 260h1M900 260h5M917 260h6M872 261h5M877 261h2M902 261h2M886 262h1M904 262h1M915 262h5M922 262h4M878 263h1M887 263h6M876 264h6M893 264h3M897 264h6M911 264h5M873 265h4M899 265h6M913 265h5M918 265h5M873 266h5M906 266h5M880 267h2M889 267h1M892 267h1M900 267h6M906 267h3M909 267h1M916 267h1M914 268h1M916 268h3M885 269h6M905 269h2M913 269h2M891 270h1M905 270h4M911 270h4M916 270h6M882 270h2M934 270h4M966 271h2M918 272h6M926 272h6M945 272h5M975 272h1M881 273h2M874 274h4M895 274h4M951 274h5M924 275h1M932 275h4M880 276h5M903 276h2M924 276h3M951 276h2M890 277h6M904 277h2M923 277h1M929 277h3M940 277h1M954 277h1M883 278h6M921 278h3M900 279h2M941 280h1M896 284h1M901 284h2M927 285h4M881 286h1M882 287h2M918 287h6M877 288h4M906 289h1M932 289h2M877 290h2M878 291h4M878 292h5M928 292h2M931 292h6M878 293h5M934 293h2M878 295h4M927 295h2M919 296h2M879 297h6M904 297h2M899 298h6M905 298h1M879 299h4M887 299h1M890 299h1M892 299h5M903 299h5M930 299h1M880 300h1M904 300h4M880 301h2M885 302h6M936 302h1M887 303h3M891 303h2M927 303h4M883 304h4M887 304h6M925 304h5M932 304h3M895 306h6M881 307h5M894 307h6M881 308h5M910 308h4M935 308h3M926 286h1M926 288h2M927 290h4M928 291h5M927 292h6M933 292h3M931 293h3M936 293h1M928 296h2M934 298h3M900 317h1M907 317h2M914 317h3M929 317h2M938 317h6M888 318h5M899 318h2M937 318h5M975 318h6M903 319h2M912 319h1M935 319h5M941 319h4M974 319h3M881 320h6M929 320h2M941 320h5M954 320h3M962 320h3M965 320h4M976 320h2M881 321h6M920 321h6M928 321h5M945 321h6M967 321h6M889 322h4M940 322h6M958 322h3M964 322h3M968 322h4M899 323h4M973 323h4M882 324h2M938 324h3M882 325h1M885 325h1M903 325h1M954 325h4M958 325h2M961 325h5M974 325h1M980 325h2M908 326h5M927 326h3M943 326h4M959 326h6M966 326h3M977 326h1M886 327h1M907 327h3M911 327h5M970 327h5M883 328h6M890 328h4M914 328h3M954 328h4M898 329h6M925 329h1M929 329h1M930 329h5M947 329h5M914 330h2M916 330h2M947 330h4M951 330h6M958 330h5M967 330h2M893 331h5M913 331h4M922 331h4M949 331h3M972 331h4M976 331h1M894 332h2M934 332h6M952 332h5M966 332h6M974 332h3M977 332h6M898 333h6M915 333h4M927 333h4M952 333h3M955 333h2M959 333h2M976 333h4M884 334h3M906 334h4M919 334h1M937 334h6M954 334h2M884 335h5M905 335h6M951 335h1M954 335h4M977 335h1M890 336h2M909 336h3M914 336h2M924 336h2M963 336h3M918 337h6M926 337h3M931 337h1M932 337h3M937 337h6M961 337h6M971 337h5M976 337h5M885 338h1M886 338h5M892 338h6M898 338h3M927 338h1M946 338h6M957 338h6M966 338h2M974 338h3M983 338h1M888 339h3M892 339h2M895 339h3M902 339h1M914 339h4M981 339h3M942 359h4M968 359h6M942 360h4M946 360h1M940 361h6M964 361h4M988 361h3M946 362h6M940 363h6M950 363h4M962 363h3M959 364h6M966 364h3M988 364h2M961 365h3M971 365h4M941 366h6M973 366h5M979 366h4M954 367h5M943 368h6M961 369h3M942 370h5M953 370h6M961 370h1M949 371h3M942 372h5M950 372h2M952 372h6M959 372h2M968 372h5M945 373h1M957 373h4M965 373h1M977 373h2M955 374h3M969 374h6M982 374h3M976 375h5M985 375h5M966 377h2M987 377h4M939 387h3M940 389h4M943 390h2M944 392h2M941 394h6M943 395h4M947 396h4M949 397h2M942 398h1M942 399h5M954 414h2M949 416h3M955 416h1M952 418h4M955 419h2M956 420h1M948 421h5M948 422h1M950 422h6M952 424h5M950 428h1M954 432h5M975 432h3M989 432h4M945 433h6M956 433h1M959 433h1M959 434h4M985 434h1M987 434h5M946 435h6M959 435h1M972 435h3M962 436h1M973 436h2M976 436h6M983 436h2M986 436h5M953 437h3M987 437h5M980 438h3M987 438h1M947 439h4M968 439h4M958 440h1M963 440h4M979 440h4M985 440h6M992 440h5M947 441h3M959 441h1M980 441h1M947 442h5M965 443h3M985 443h5M953 444h3M948 445h6M989 446h1M985 447h6M956 449h3M980 449h5M997 449h1M989 451h5M960 452h5M953 463h6M954 465h5M954 466h3M949 481h5M971 482h1M983 482h1M950 485h4M990 485h1M950 486h6M970 487h1M951 489h6M971 489h6M952 491h3M972 491h6M984 491h3M1055 388h4M1070 389h5M1089 389h2M1046 391h3M1057 392h6M1071 392h2M1078 392h2M1047 394h4M1047 395h2M1047 396h1M1048 397h5M1055 397h4M1048 399h5M1067 399h4M1048 400h1M1076 400h1M1068 401h3M1083 403h1M1049 405h6M1086 405h4M1078 408h2M1053 409h2M1084 409h1M1061 410h4M1070 410h3M1075 410h2M1077 410h1M1073 411h2M1085 411h5M1084 412h1M1087 412h4M1051 413h5M1058 413h6M1066 414h5M1062 415h5M1052 418h2M1058 418h6M778 410h4M781 411h6M777 417h4M773 420h6M786 425h5M778 426h2M774 427h2M518 369h6M560 369h1M518 370h5M575 370h3" stroke="#eaea20" stroke-width="1" fill="none" transform="translate(0,0.5)"/><path d="M36 129h1M36 130h1M36 131h1M37 132h1M37 133h1M37 134h1M37 135h1M37 136h1M38 137h1M38 138h1M38 139h1M38 140h1M38 141h1M38 142h1M39 143h1M39 144h1M39 145h1M39 146h1M39 147h1M75 374h1M75 375h1M76 376h1M76 377h1M76 378h1M76 379h1M76 380h1M76 381h1M77 382h1M77 384h1M77 385h1M77 386h1M77 387h1M78 388h1M78 389h1M78 390h1M78 391h1M78 392h1M251 91h3M251 92h3M251 93h3M252 94h3M252 95h3M252 96h3M252 97h3M253 98h3M253 99h3M253 100h3M253 101h3M254 103h3M254 104h3M254 105h3M255 106h3M255 107h3M255 108h3M255 109h3M256 110h3M256 111h3M252 121h3M252 122h3M252 123h3M253 124h3M253 125h3M253 126h3M253 127h3M254 128h3M254 129h3M254 131h3M255 132h3M255 133h3M255 135h3M256 136h3M256 137h3M256 138h3M256 139h3M257 140h3M257 141h3M291 331h3M291 332h3M291 333h3M291 334h3M292 335h3M292 336h3M292 337h3M292 338h3M293 339h3M293 340h3M293 341h3M293 342h3M293 343h3M294 344h3M294 345h3M294 346h3M294 347h3M294 348h3M295 349h3M295 350h3M295 351h3M315 512h3M316 513h3M316 515h3M316 517h3M317 518h3M317 519h3M317 520h3M317 521h3M317 522h3M318 523h3M318 524h3M318 525h3M318 526h3M263 152h3M263 153h3M393 0h1M393 1h1M393 2h1M393 3h1M393 4h1M393 5h1M393 7h1M393 11h1M393 13h1M393 16h1M393 18h1M393 20h1M393 29h1M393 30h1M393 33h1M393 34h1M393 35h1M393 37h1M393 42h1M393 50h1M393 55h1M393 60h1M393 64h1M393 70h1M393 71h1M393 74h1M393 80h1M393 89h1M393 91h1M393 92h1M393 94h1M393 98h1M393 103h1M393 118h1M393 123h1M393 130h1M393 131h1M393 132h1M393 133h1M393 141h1M393 142h1M393 143h1M393 151h1M393 157h1M393 160h1M393 162h1M393 164h1M393 168h1M393 170h1M393 174h1M393 177h1M393 179h1M393 181h1M393 185h1M393 189h1M393 192h1M393 203h1M393 208h1M393 216h1M393 227h1M393 228h1M393 238h1M393 244h1M393 247h1M393 250h1M393 251h1M393 258h1M393 260h1M393 261h1M393 263h1M393 266h1M393 272h1M393 274h1M393 279h1M393 282h1M393 286h1M393 290h1M393 291h1M393 292h1M393 294h1M393 295h1M393 296h1M393 303h1M393 309h1M393 312h1M393 315h1M393 316h1M393 319h1M393 324h1M393 326h1M393 327h1M393 332h1M393 333h1M393 336h1M393 338h1M393 345h1M393 347h1M393 349h1M393 356h1M393 357h1M393 371h1M393 375h1M393 382h1M393 383h1M393 386h1M393 389h1M393 395h1M393 396h1M393 398h1M393 401h1M393 408h1M393 409h1M393 414h1M393 419h1M393 428h1M393 434h1M393 435h1M393 437h1M393 439h1M393 447h1M393 451h1M393 455h1M393 460h1M393 462h1M393 469h1M393 478h1M393 481h1M393 484h1M393 485h1M393 490h1M393 496h1M393 499h1M393 506h1M393 508h1M393 512h1M393 517h1M393 520h1M393 524h1M393 527h1M393 535h1M393 536h1M780 5h1M780 7h1M780 12h1M780 13h1M780 17h1M780 21h1M780 33h1M780 38h1M780 41h1M780 43h1M780 44h1M780 45h1M780 61h1M780 63h1M780 69h1M780 70h1M780 71h1M780 80h1M780 81h1M780 90h1M780 91h1M780 94h1M780 100h1M780 104h1M780 105h1M780 106h1M780 111h1M780 119h1M780 121h1M780 127h1M780 130h1M780 147h1M780 148h1M780 157h1M780 164h1M780 165h1M780 168h1M780 171h1M780 174h1M780 177h1M780 179h1M780 190h1M780 209h1M780 221h1M780 227h1M780 231h1M780 238h1M780 243h1M780 253h1M780 254h1M780 257h1M780 258h1M780 259h1M780 260h1M780 274h1M780 275h1M780 280h1M780 282h1M780 283h1M780 288h1M780 291h1M780 292h1M780 293h1M780 295h1M780 307h1M780 308h1M780 318h1M780 319h1M780 321h1M780 325h1M780 328h1M780 342h1M780 344h1M780 350h1M780 352h1M780 376h1M780 385h1M780 386h1M780 388h1M780 392h1M780 395h1M780 399h1M780 412h1M780 417h1M780 419h1M780 423h1M780 426h1M780 433h1M780 437h1M780 441h1M780 448h1M780 457h1M780 471h1M780 474h1M780 475h1M780 487h1M780 493h1M780 504h1M780 510h1M780 514h1M780 517h1M780 527h1M780 528h1M780 530h1M780 531h1M882 8h3M912 8h2M878 9h3M881 9h1M892 9h2M921 10h2M889 11h4M879 12h3M882 12h4M901 12h6M925 12h3M898 17h5M918 17h3M928 18h2M907 19h3M915 19h6M898 20h4M930 20h1M881 21h2M888 21h1M894 21h4M906 21h5M884 23h6M905 23h6M891 24h2M928 25h3M868 5h4M873 5h6M1013 1h1M968 15h5M1007 15h5M970 16h1M978 16h3M983 17h4M970 27h4M970 28h3M971 29h6M980 38h3M976 40h1M974 43h3M983 50h3M980 53h3M895 37h3M893 38h5M890 40h6M878 41h4M885 42h1M892 42h6M876 46h5M890 48h6M880 49h4M899 49h1M888 51h5M888 53h6M888 54h3M891 60h6M924 60h3M898 61h1M905 64h1M919 64h1M921 66h4M892 70h6M909 71h5M901 72h4M940 56h3M937 67h2M889 70h4M906 70h5M894 73h4M906 74h3M896 79h5M914 79h1M890 81h6M885 83h4M896 86h2M891 87h1M909 88h2M894 91h4M901 93h1M893 94h3M901 96h1M912 97h1M843 86h4M898 87h2M845 89h1M879 89h2M842 90h6M861 99h4M891 114h6M899 115h5M892 116h3M895 120h2M929 127h4M877 128h2M899 128h3M940 130h6M850 148h2M851 151h5M900 153h1M850 137h3M855 140h3M909 135h1M904 139h6M904 140h4M907 156h1M908 156h1M911 156h5M907 157h2M909 157h6M917 157h5M934 157h5M933 160h1M908 161h6M910 163h3M913 164h3M934 168h3M858 172h4M909 172h2M871 173h2M888 174h3M863 177h5M870 178h1M871 178h2M859 180h4M880 181h6M879 186h6M866 187h4M881 188h3M865 189h5M930 185h1M917 191h4M914 195h1M951 196h1M915 199h1M954 199h6M917 200h1M875 212h5M915 212h3M868 214h2M889 214h5M867 216h6M865 218h2M914 220h5M877 222h5M888 225h5M867 226h3M867 227h3M874 228h6M868 231h1M907 231h6M926 208h1M931 208h6M926 210h6M934 211h3M932 212h3M940 212h2M932 220h1M939 223h3M933 225h3M935 226h4M941 227h1M929 233h6M971 244h3M938 249h4M974 249h3M881 247h3M885 247h4M905 247h1M878 248h3M876 249h1M882 249h4M907 249h1M885 250h3M890 251h5M899 251h2M907 251h1M918 251h3M875 252h6M903 252h5M922 252h3M872 253h2M877 253h2M908 253h2M871 254h4M884 254h2M873 255h5M886 255h6M877 256h5M895 257h5M872 259h4M881 261h5M872 262h5M907 263h2M873 264h2M893 266h6M894 267h4M912 267h1M896 268h1M874 269h5M874 270h5M887 270h4M892 270h6M903 270h6M958 271h6M969 271h6M890 273h5M928 273h4M931 274h4M972 275h1M899 280h4M876 281h4M876 284h5M876 285h6M877 287h4M885 289h4M894 294h6M886 296h5M915 297h4M881 300h4M898 300h3M880 304h2M896 304h2M935 304h2M929 286h3M928 294h5M932 296h1M929 298h2M929 299h5M935 299h2M919 317h1M918 318h1M952 318h2M965 318h5M900 319h2M907 319h4M892 320h5M902 320h1M946 320h6M904 321h1M906 321h6M882 322h6M916 322h6M935 322h3M947 322h1M952 322h6M882 323h3M904 323h4M914 323h3M946 323h6M966 323h6M949 324h2M901 325h1M899 326h1M883 327h3M918 327h4M922 327h6M955 327h6M981 327h2M901 328h1M910 329h4M977 329h5M902 330h5M922 330h5M941 330h4M913 332h5M946 332h1M931 333h6M938 333h5M947 334h3M951 334h3M963 334h3M966 334h5M896 335h5M930 336h3M893 337h1M906 337h3M916 338h5M944 338h1M885 339h1M900 339h2M975 360h6M951 361h3M954 362h4M988 362h3M988 363h2M989 366h2M941 367h4M945 369h6M985 369h4M969 371h6M942 373h1M946 373h4M973 376h5M968 377h6M943 386h1M950 391h2M941 396h6M947 416h1M948 419h5M949 427h6M949 432h5M972 432h3M976 433h1M990 433h5M947 434h2M992 437h3M948 438h6M959 438h5M954 440h1M956 440h1M961 441h3M977 441h1M969 442h3M963 443h2M962 444h5M993 444h4M973 446h2M995 447h2M949 449h2M967 449h6M954 450h4M977 450h3M980 450h6M979 481h4M966 484h4M964 487h5M952 492h4M1047 393h4M1056 396h3M1049 401h4M1049 403h4M1061 403h5M1068 403h1M1086 403h3M1049 404h2M1065 404h2M1050 406h2M1085 406h1M1087 406h3M1051 411h4M1072 413h2M1051 414h5M1052 416h6M789 409h1" stroke="#ff9a10" stroke-width="1" fill="none" transform="translate(0,0.5)"/><path d="M15 13h2M15 14h2M15 15h2M15 16h2M15 17h2M15 18h2M15 19h2M16 21h2M16 22h2M16 23h2M16 24h2M16 25h2M17 26h2M17 27h2M17 28h2M17 29h2M17 30h2M17 31h2M25 68h2M25 69h2M25 70h2M25 71h2M26 72h2M26 73h2M26 74h2M26 76h2M27 77h2M27 78h2M27 79h2M27 80h2M27 81h2M28 82h2M28 83h2M28 84h2M28 85h2M28 86h2M46 190h2M47 191h2M47 192h2M47 194h2M47 195h2M48 196h2M48 197h2M48 198h2M48 199h2M48 200h2M48 201h2M49 202h2M49 203h2M49 204h2M49 205h2M49 206h2M50 207h2M50 208h2M57 251h2M57 252h2M57 253h2M57 254h2M57 255h2M57 256h2M58 257h2M58 258h2M58 259h2M58 260h2M58 261h2M58 262h2M59 263h2M59 264h2M59 265h2M59 266h2M59 267h2M60 268h2M60 269h2M60 270h2M66 311h2M66 312h2M66 313h2M66 314h2M66 315h2M67 316h2M67 317h2M67 318h2M67 319h2M67 320h2M67 321h2M68 322h2M68 323h2M68 324h2M68 325h2M68 326h2M69 327h2M69 328h2M69 329h2M69 330h2M83 433h2M83 434h2M83 435h2M83 436h2M84 437h2M84 438h2M84 439h2M84 440h2M84 441h2M85 443h2M85 444h2M85 445h2M85 446h2M85 447h2M86 448h2M86 449h2M86 450h2M86 451h2M86 452h2M230 6h3M230 7h3M230 8h3M231 9h3M231 10h3M231 11h3M231 12h3M232 13h3M232 14h3M232 15h3M232 16h3M233 17h3M233 18h3M233 19h3M233 20h3M234 21h3M234 23h3M234 24h3M235 25h3M235 26h3M240 37h3M240 38h3M241 39h3M241 40h3M241 41h3M242 42h3M242 43h3M242 44h3M243 45h3M243 46h3M243 47h3M244 48h3M244 49h3M244 50h3M244 51h3M245 52h3M241 61h3M242 62h3M242 63h3M242 64h3M242 65h3M243 66h3M243 67h3M243 68h3M243 69h3M244 70h3M244 71h3M244 72h3M245 74h3M245 76h3M245 77h3M246 78h3M246 79h3M246 80h3M246 81h3M262 181h3M262 182h3M263 183h3M263 184h3M263 185h3M263 186h3M264 187h3M264 188h3M264 189h3M264 190h3M265 191h3M265 192h3M265 193h3M265 194h3M266 195h3M266 196h3M266 197h3M266 198h3M267 199h3M267 200h3M267 201h3M272 211h3M273 213h3M273 214h3M273 215h3M273 216h3M274 217h3M274 218h3M274 219h3M274 220h3M275 221h3M275 222h3M275 223h3M275 224h3M276 225h3M276 228h3M277 229h3M277 230h3M277 231h3M272 241h3M272 242h3M273 243h3M273 244h3M273 245h3M273 246h3M274 247h3M274 248h3M274 249h3M274 250h3M275 251h3M275 252h3M275 253h3M275 254h3M276 255h3M276 256h3M276 257h3M276 258h3M277 259h3M277 260h3M277 261h3M282 271h3M282 272h3M283 273h3M283 274h3M283 275h3M283 276h3M283 277h3M284 278h3M284 280h3M284 281h3M284 283h3M285 284h3M285 285h3M285 286h3M285 287h3M285 288h3M286 289h3M286 290h3M286 291h3M282 301h3M282 302h3M283 303h3M283 304h3M283 305h3M283 306h3M283 307h3M284 308h3M284 309h3M284 310h3M284 311h3M284 312h3M284 313h3M285 314h3M285 315h3M285 316h3M285 317h3M286 319h3M286 320h3M286 321h3M291 361h3M291 362h3M291 363h3M291 364h3M292 365h3M292 366h3M292 367h3M292 368h3M292 369h3M293 370h3M293 371h3M293 372h3M293 373h3M293 374h3M293 375h3M294 376h3M294 377h3M294 378h3M294 379h3M294 380h3M295 381h3M300 422h3M300 423h3M300 424h3M300 425h3M300 427h3M301 429h3M301 430h3M301 431h3M301 432h3M302 433h3M302 434h3M302 435h3M302 436h3M302 437h3M302 438h3M303 439h3M303 441h3M307 481h3M307 482h3M307 483h3M307 484h3M307 485h3M308 486h3M308 487h3M308 488h3M308 489h3M309 490h3M309 491h3M309 493h3M310 494h3M552 8h2M552 9h2M552 10h2M552 11h2M553 12h2M553 13h2M553 14h2M554 15h2M554 16h2M554 17h2M555 18h2M555 19h2M567 83h2M567 84h2M567 85h2M567 86h2M567 87h2M568 89h2M568 90h2M568 91h2M568 92h2M568 93h2M569 94h2M569 95h2M569 96h2M569 97h2M569 98h2M569 99h2M570 100h2M570 101h2M570 102h2M570 104h2M571 105h2M571 106h2M574 126h2M574 127h2M574 128h2M574 129h2M574 130h2M575 131h2M575 133h2M575 134h2M575 135h2M576 136h2M576 137h2M576 138h2M576 139h2M576 140h2M577 141h2M577 142h2M577 143h2M577 144h2M577 145h2M578 146h2M578 146h2M578 147h2M578 148h2M578 149h2M578 150h2M578 151h2M579 152h2M579 153h2M579 154h2M579 155h2M579 156h2M579 157h2M580 158h2M580 159h2M580 160h2M580 161h2M580 162h2M580 163h2M581 164h2M581 165h2M581 166h2M581 168h2M582 169h2M582 170h2M582 171h2M582 172h2M582 173h2M582 174h2M583 175h2M583 176h2M583 177h2M583 178h2M583 179h2M584 181h2M584 182h2M784 9h2M784 10h2M784 11h2M784 12h2M784 13h2M784 14h2M785 15h2M785 16h2M785 17h2M785 18h2M785 19h2M785 20h2M786 21h2M786 22h2M786 23h2M786 24h2M786 25h2M786 26h2M787 27h2M787 28h2M787 29h2M787 30h2M787 31h2M788 32h2M788 33h2M788 34h2M788 35h2M788 36h2M788 37h2M789 38h2M789 39h2M789 40h2M789 41h2M789 42h2M789 43h2M790 44h2M790 45h2M790 46h2M790 47h2M790 48h2M791 49h2M791 50h2M791 51h2M791 52h2M791 53h2M791 54h2M792 55h2M792 56h2M792 57h2M792 58h2M792 59h2M792 60h2M793 61h2M793 62h2M793 63h2M793 64h2M793 65h2M794 67h2M794 68h2M794 69h2M794 70h2M794 71h2M795 72h2M795 73h2M795 74h2M795 75h2M795 76h2M795 77h2M796 78h2M796 79h2M796 80h2M796 81h2M796 82h2M796 83h2M797 84h2M797 85h2M797 86h2M797 87h2M797 88h2M798 89h2M798 90h2M798 91h2M798 92h2M798 94h2M799 96h2M799 97h2M799 98h2M799 99h2M800 102h2M800 103h2M800 104h2M800 105h2M801 106h2M801 107h2M801 108h2M801 109h2M801 110h2M801 111h2M802 112h2M802 113h2M802 114h2M802 115h2M802 116h2M802 117h2M803 118h2M803 119h2M803 120h2M803 121h2M803 122h2M804 123h2M804 124h2M804 125h2M804 126h2M804 127h2M805 129h2M805 130h2M805 131h2M805 133h2M805 134h2M806 136h2M806 137h2M806 138h2M806 139h2M807 140h2M807 141h2M807 143h2M807 144h2M807 145h2M808 146h2M808 147h2M808 149h2M808 150h2M808 151h2M809 152h2M809 153h2M809 154h2M809 155h2M809 156h2M809 157h2M810 158h2M810 159h2M810 160h2M810 161h2M810 162h2M811 164h2M811 165h2M811 166h2M811 167h2M811 168h2M812 169h2M812 170h2M812 171h2M812 172h2M812 173h2M812 174h2M813 175h2M813 176h2M813 177h2M813 178h2M813 179h2M814 180h2M814 181h2M814 182h2M814 183h2M814 184h2M814 185h2M815 186h2M815 187h2M815 189h2M815 190h2M815 191h2M816 192h2M816 193h2M816 194h2M816 195h2M816 196h2M817 197h2M817 198h2M817 199h2M817 200h2M817 201h2M817 202h2M818 203h2M818 204h2M818 205h2M818 206h2M819 210h2M819 211h2M819 212h2M819 213h2M819 214h2M820 215h2M820 216h2M820 217h2M820 218h2M820 219h2M821 220h2M821 221h2M821 222h2M821 224h2M821 225h2M822 226h2M822 227h2M822 228h2M822 229h2M822 230h2M822 231h2M823 232h2M823 233h2M823 234h2M823 235h2M823 236h2M824 237h2M824 238h2M824 239h2M824 240h2M824 241h2M824 242h2M825 243h2M825 244h2M825 245h2M825 247h2M825 248h2M826 249h2M826 250h2M826 251h2M826 252h2M826 253h2M827 254h2M827 255h2M827 256h2M827 257h2M827 258h2M827 259h2M828 260h2M828 261h2M828 262h2M828 263h2M832 277h2M832 278h2M832 279h2M832 280h2M832 281h2M833 282h2M833 283h2M833 284h2M833 285h2M833 286h2M833 287h2M833 288h2M833 289h2M834 290h2M834 291h2M834 292h2M834 293h2M834 294h2M834 295h2M834 296h2M835 297h2M835 298h2M835 299h2M835 300h2M835 301h2M835 302h2M835 304h2M836 305h2M836 307h2M836 308h2M836 309h2M836 310h2M836 311h2M836 312h2M837 313h2M837 314h2M837 315h2M837 316h2M837 317h2M837 318h2M837 319h2M838 320h2M838 321h2M838 322h2M838 323h2M838 324h2M838 325h2M840 328h2M840 329h2M840 330h2M840 331h2M840 332h2M840 333h2M840 334h2M840 335h2M840 336h2M840 337h2M840 338h2M840 339h2M840 340h2M840 341h2M840 342h2M841 343h2M841 344h2M841 345h2M841 346h2M841 347h2M841 348h2M841 349h2M841 350h2M841 351h2M844 369h2M844 370h2M844 371h2M844 372h2M845 373h2M845 374h2M845 375h2M845 376h2M845 377h2M845 378h2M845 379h2M845 380h2M846 381h2M846 382h2M846 383h2M846 384h2M846 386h2M846 387h2M847 388h2M847 389h2M847 391h2M847 392h2M847 393h2M847 394h2M847 395h2M848 396h2M848 397h2M848 398h2M848 400h2M848 401h2M848 402h2M849 403h2M849 404h2M849 405h2M849 406h2M849 407h2M849 408h2M849 409h2M849 410h2M850 411h2M850 412h2M850 413h2M850 414h2M850 415h2M850 416h2M850 417h2M851 418h2M851 419h2M851 420h2M851 421h2M851 422h2M851 423h2M851 424h2M851 425h2M852 426h2M852 427h2M852 428h2M852 429h2M852 430h2M852 431h2M852 432h2M853 433h2M853 434h2M853 435h2M853 436h2M853 437h2M853 438h2M853 439h2M853 440h2M854 441h2M854 442h2M854 443h2M854 444h2M1086 4h2M1086 5h2M1086 6h2M1086 7h2M1086 8h2M1086 9h2M1086 10h2M1086 11h2M1087 12h2M1087 13h2M1087 14h2M1087 15h2M1087 16h2M1087 17h2M1087 18h2M1087 19h2M1088 20h2M1088 21h2M1088 23h2M1088 24h2M1088 25h2M1088 26h2M1089 28h2M1089 29h2M1089 30h2M1089 31h2M1089 32h2M1089 33h2M1089 34h2M1090 35h1M1090 36h1M1090 37h1M942 486h1M942 487h1M942 488h1M942 489h1M942 490h1M943 491h1M943 492h1M943 493h1M943 494h1M943 495h1M943 496h1M943 497h1M944 498h1M944 499h1M944 500h1M944 501h1M944 502h1M944 503h1M945 505h1M945 506h1M945 507h1M945 508h1M945 509h1M945 510h1M946 511h1M946 512h1M946 513h1M946 514h1M946 515h1M946 516h1M947 518h1M947 519h1M947 520h1M947 521h1M947 522h1M947 523h1M947 524h1M948 525h1M948 526h1M948 527h1M948 528h1M948 529h1M948 530h1M948 531h1M949 532h1M949 533h1M949 534h1M949 535h1M949 536h1M974 270h2M974 271h2M974 272h2M975 273h2M975 274h2M975 275h2M975 276h2M975 277h2M976 278h2M977 288h2M977 289h2M977 290h2M978 291h2M978 292h2M978 293h2M978 294h2M978 295h2M978 296h2M978 306h2M978 307h2M978 308h2M978 309h2M977 310h2M977 311h2M977 312h2M977 313h2M977 314h2M975 324h2M975 325h2M975 326h2M975 327h2M974 328h2M974 329h2M958 230h2M958 231h2M959 232h2M959 233h2M960 234h2M960 235h2M961 236h2M964 244h2M964 245h2M965 246h2M965 247h2M966 248h2M966 249h2M966 250h2M970 258h2M970 259h2M971 260h2M971 261h2M971 262h2M972 263h2M972 264h2M393 6h1M393 8h1M393 9h1M393 10h1M393 12h1M393 14h1M393 15h1M393 17h1M393 19h1M393 21h1M393 22h1M393 23h1M393 24h1M393 25h1M393 26h1M393 27h1M393 28h1M393 31h1M393 32h1M393 36h1M393 38h1M393 39h1M393 40h1M393 41h1M393 43h1M393 44h1M393 45h1M393 46h1M393 47h1M393 48h1M393 49h1M393 51h1M393 52h1M393 53h1M393 54h1M393 56h1M393 57h1M393 58h1M393 59h1M393 61h1M393 62h1M393 63h1M393 65h1M393 66h1M393 67h1M393 68h1M393 69h1M393 72h1M393 73h1M393 75h1M393 76h1M393 77h1M393 78h1M393 79h1M393 81h1M393 82h1M393 83h1M393 84h1M393 85h1M393 86h1M393 87h1M393 88h1M393 90h1M393 93h1M393 95h1M393 96h1M393 97h1M393 99h1M393 100h1M393 101h1M393 102h1M393 104h1M393 105h1M393 106h1M393 107h1M393 108h1M393 109h1M393 110h1M393 111h1M393 112h1M393 113h1M393 114h1M393 115h1M393 116h1M393 117h1M393 119h1M393 120h1M393 121h1M393 122h1M393 124h1M393 125h1M393 126h1M393 127h1M393 128h1M393 129h1M393 134h1M393 135h1M393 136h1M393 137h1M393 138h1M393 139h1M393 140h1M393 144h1M393 145h1M393 146h1M393 147h1M393 148h1M393 149h1M393 150h1M393 152h1M393 153h1M393 154h1M393 155h1M393 156h1M393 158h1M393 159h1M393 161h1M393 163h1M393 165h1M393 166h1M393 167h1M393 169h1M393 171h1M393 172h1M393 173h1M393 175h1M393 176h1M393 178h1M393 180h1M393 182h1M393 183h1M393 184h1M393 186h1M393 187h1M393 188h1M393 190h1M393 191h1M393 193h1M393 194h1M393 195h1M393 196h1M393 197h1M393 198h1M393 199h1M393 200h1M393 201h1M393 202h1M393 204h1M393 205h1M393 206h1M393 207h1M393 209h1M393 210h1M393 211h1M393 212h1M393 213h1M393 214h1M393 215h1M393 217h1M393 218h1M393 219h1M393 220h1M393 221h1M393 222h1M393 223h1M393 224h1M393 225h1M393 226h1M393 229h1M393 230h1M393 231h1M393 232h1M393 233h1M393 234h1M393 235h1M393 236h1M393 237h1M393 239h1M393 240h1M393 241h1M393 242h1M393 243h1M393 245h1M393 246h1M393 248h1M393 249h1M393 252h1M393 253h1M393 254h1M393 255h1M393 256h1M393 257h1M393 259h1M393 262h1M393 264h1M393 265h1M393 267h1M393 268h1M393 269h1M393 270h1M393 271h1M393 273h1M393 275h1M393 276h1M393 277h1M393 278h1M393 280h1M393 281h1M393 283h1M393 284h1M393 285h1M393 287h1M393 288h1M393 289h1M393 293h1M393 297h1M393 298h1M393 299h1M393 300h1M393 301h1M393 302h1M393 304h1M393 305h1M393 306h1M393 307h1M393 308h1M393 310h1M393 311h1M393 313h1M393 314h1M393 317h1M393 318h1M393 320h1M393 321h1M393 322h1M393 323h1M393 325h1M393 328h1M393 329h1M393 330h1M393 331h1M393 334h1M393 335h1M393 337h1M393 339h1M393 340h1M393 341h1M393 342h1M393 343h1M393 344h1M393 346h1M393 348h1M393 350h1M393 351h1M393 352h1M393 353h1M393 354h1M393 355h1M393 358h1M393 359h1M393 360h1M393 361h1M393 362h1M393 363h1M393 364h1M393 365h1M393 366h1M393 367h1M393 368h1M393 369h1M393 370h1M393 372h1M393 373h1M393 374h1M393 376h1M393 377h1M393 378h1M393 379h1M393 380h1M393 381h1M393 384h1M393 385h1M393 387h1M393 388h1M393 390h1M393 391h1M393 392h1M393 393h1M393 394h1M393 397h1M393 399h1M393 400h1M393 402h1M393 403h1M393 404h1M393 405h1M393 406h1M393 407h1M393 410h1M393 411h1M393 412h1M393 413h1M393 415h1M393 416h1M393 417h1M393 418h1M393 420h1M393 421h1M393 422h1M393 423h1M393 424h1M393 425h1M393 426h1M393 427h1M393 429h1M393 430h1M393 431h1M393 432h1M393 433h1M393 436h1M393 438h1M393 440h1M393 441h1M393 442h1M393 443h1M393 444h1M393 445h1M393 446h1M393 448h1M393 449h1M393 450h1M393 452h1M393 453h1M393 454h1M393 456h1M393 457h1M393 458h1M393 459h1M393 461h1M393 463h1M393 464h1M393 465h1M393 466h1M393 467h1M393 468h1M393 470h1M393 471h1M393 472h1M393 473h1M393 474h1M393 475h1M393 476h1M393 477h1M393 479h1M393 480h1M393 482h1M393 483h1M393 486h1M393 487h1M393 488h1M393 489h1M393 491h1M393 492h1M393 493h1M393 494h1M393 495h1M393 497h1M393 498h1M393 500h1M393 501h1M393 502h1M393 503h1M393 504h1M393 505h1M393 507h1M393 509h1M393 510h1M393 511h1M393 513h1M393 514h1M393 515h1M393 516h1M393 518h1M393 519h1M393 521h1M393 522h1M393 523h1M393 525h1M393 526h1M393 528h1M393 529h1M393 530h1M393 531h1M393 532h1M393 533h1M393 534h1M890 10h6M904 10h4M924 10h4M908 12h6M881 13h5M889 13h3M915 13h1M918 13h2M927 13h1M883 14h2M907 14h6M881 15h1M880 16h3M884 16h1M896 16h5M903 16h6M880 18h4M885 18h3M908 18h2M886 19h2M911 19h4M922 19h6M881 20h5M924 20h4M884 21h2M902 21h4M915 21h1M881 22h5M888 22h2M881 23h3M890 23h2M898 23h1M900 23h3M882 25h5M909 25h2M923 25h5M931 25h1M868 1h2M868 3h5M965 0h6M965 2h6M972 5h2M967 8h2M971 8h1M970 9h6M967 11h6M968 13h5M972 16h4M971 17h6M971 30h6M974 32h5M972 33h4M976 33h4M972 34h4M972 36h1M975 37h4M973 38h4M974 39h2M973 41h5M974 42h5M974 45h2M974 46h5M978 47h4M976 53h4M874 37h4M875 42h4M875 43h3M885 44h6M876 45h6M876 47h5M878 48h6M877 49h2M891 49h6M877 50h4M877 51h2M895 51h3M898 51h2M879 52h1M888 52h6M878 53h3M881 53h4M888 55h1M892 57h6M889 58h5M890 60h1M890 61h2M890 62h2M890 64h1M891 65h6M891 67h6M892 71h4M893 74h6M938 57h5M938 60h2M941 67h2M932 68h6M882 71h6M882 72h1M883 73h2M883 75h3M887 75h3M904 75h2M894 76h3M914 78h1M884 79h5M904 79h3M884 80h6M909 84h2M902 85h2M886 86h2M909 86h5M902 87h1M910 87h2M913 87h3M886 88h4M886 89h4M899 90h6M910 90h3M887 91h4M907 91h4M887 92h6M903 93h3M887 94h6M891 95h1M892 95h4M888 96h6M888 97h6M914 97h3M841 86h2M842 88h1M842 89h1M843 94h5M844 96h1M844 98h2M844 99h1M890 109h2M901 109h3M894 110h3M898 110h5M891 115h6M892 118h2M892 119h6M898 119h4M893 120h2M849 128h2M851 129h3M849 149h6M849 132h6M849 133h3M850 136h2M851 138h3M852 144h6M855 147h2M901 128h2M902 131h3M902 132h6M903 136h4M903 137h5M908 159h6M913 163h3M909 165h1M910 165h2M910 167h2M912 168h3M859 168h2M857 171h3M862 172h5M858 173h5M860 175h4M858 176h4M863 176h3M858 179h3M861 183h5M860 184h5M860 187h6M860 188h5M864 190h1M866 190h6M911 183h3M913 188h5M913 190h4M913 192h5M915 198h1M916 198h1M918 199h5M916 202h4M916 203h1M919 203h4M863 208h5M863 209h3M866 209h1M864 212h3M864 213h4M864 214h3M869 215h6M866 221h2M869 221h1M866 222h5M866 223h2M869 223h2M867 224h6M870 226h5M867 228h5M868 230h5M868 232h3M872 232h5M869 233h1M872 233h5M869 234h3M929 208h2M926 209h3M929 209h3M937 211h5M930 216h5M927 218h4M933 220h6M926 225h1M937 225h4M927 226h6M927 227h2M869 247h2M880 247h1M889 247h4M915 247h3M919 248h5M869 249h5M895 249h6M914 249h4M890 250h6M912 250h2M873 251h6M885 251h4M915 252h1M870 253h1M875 253h1M925 254h1M871 255h2M894 255h4M871 256h6M893 257h1M873 258h2M882 258h5M915 258h5M872 260h2M889 260h3M924 260h2M879 262h6M898 262h5M873 263h4M894 263h6M924 264h3M907 265h5M914 267h1M874 268h6M889 268h1M895 268h1M893 269h5M878 294h5M879 296h5M882 301h3M880 303h5M933 287h1M928 288h2M935 290h1M927 291h1M928 293h1M933 294h4M929 300h3M933 300h1M936 300h1M880 317h3M885 317h2M944 317h2M881 318h3M903 318h1M934 318h2M942 318h5M881 319h3M915 319h3M965 319h1M898 320h1M913 320h5M918 320h6M969 320h6M892 321h3M896 321h2M951 321h2M908 322h4M980 322h2M924 323h6M938 323h3M953 323h2M957 323h2M884 324h4M888 324h3M909 324h1M947 324h2M953 324h1M958 324h5M972 324h1M975 324h3M906 325h5M939 325h4M976 325h4M949 326h3M970 326h6M894 327h3M963 327h1M883 329h6M916 329h3M968 329h1M971 329h1M972 329h3M886 330h2M890 330h4M883 331h6M884 332h3M888 332h1M897 332h5M921 332h5M962 332h2M884 333h5M905 333h2M943 333h1M982 333h1M903 335h2M924 335h1M925 335h5M937 335h4M966 335h2M884 336h4M916 336h6M934 336h6M940 336h2M960 336h1M950 337h6M928 338h1M937 338h5M963 338h2M955 339h6M962 339h5M941 359h1M975 359h2M939 360h2M958 361h5M970 361h5M940 362h1M943 362h3M981 362h1M957 363h3M940 364h2M943 364h6M949 364h3M990 365h1M946 367h6M989 367h2M941 368h2M941 369h2M962 370h2M970 370h3M968 371h1M986 371h3M943 375h5M950 376h2M978 376h5M941 393h6M942 397h3M942 400h6M948 414h4M947 415h3M947 417h6M948 420h2M954 421h2M949 423h5M956 423h1M949 425h3M952 428h1M945 432h2M986 432h1M977 433h6M949 434h4M975 434h1M952 436h1M953 436h5M966 437h2M989 438h6M987 439h4M947 440h1M973 440h6M951 441h1M958 442h1M947 443h5M958 443h5M977 444h4M948 446h3M961 446h5M968 446h5M981 446h6M948 447h6M965 447h5M949 448h6M952 449h3M961 449h4M949 450h5M960 450h4M993 450h2M949 451h1M951 451h4M949 452h5M955 467h5M955 469h5M955 470h1M955 471h2M950 482h6M951 490h3M1046 389h5M1046 390h1M1047 392h2M1048 396h1M1049 402h2M1050 407h4M1051 410h2M1052 415h3M1052 417h4" stroke="#f0200c" stroke-width="1" fill="none" transform="translate(0,0.5)"/></svg>
<div class="a" style="left:425px;top:798px;width:99px;height:19px;background:#ccceDB;"></div>
<div class="t" style="top:800px;height:17px;line-height:17px;font-size:12px;color:#6d6d6d;letter-spacing:-0.05px;left:446px;">Timeline</div>
<svg class="a" style="left:507px;top:802px" width="12" height="12" viewBox="-6 -6 12 12"><path d="M-3.5 -3.5L3.5 3.5M3.5 -3.5L-3.5 3.5" stroke="#55555e" stroke-width="1.3" fill="none"/></svg>
<div class="a" style="left:425px;top:817px;width:1093px;height:2px;background:#ccceDB;"></div>
<svg class="a" style="left:1503px;top:808px" width="9" height="5" viewBox="0 0 9 5"><path d="M0.5 0.5h8l-4 4z" fill="#555"/></svg>
<svg class="a" style="left:425px;top:819px" width="1093" height="166" viewBox="425 819 1093 166"><defs><linearGradient id="sky" x1="0" x2="0" y1="0" y2="1"><stop offset="0" stop-color="#87ceeb"/><stop offset="1" stop-color="#ffffff"/></linearGradient></defs><rect x="425" y="819" width="1093" height="131" fill="url(#sky)"/><rect x="425" y="949.5" width="1093" height="35" fill="#c3c3c3"/><clipPath id="tlc"><rect x="426" y="819" width="1091" height="130.5"/></clipPath><g clip-path="url(#tlc)"><path d="M395.0 949.5 L398.4 947.5 L401.8 944.9 L405.1 941.9 L408.5 938.3 L411.9 934.4 L415.2 930.0 L418.6 925.4 L422.0 920.5 L425.4 915.5 L428.8 910.4 L432.1 905.3 L435.5 900.3 L438.9 895.4 L442.2 890.9 L445.6 886.6 L449.0 882.8 L452.4 879.4 L455.8 876.4 L459.1 874.0 L462.5 873.1 L465.9 875.2 L469.2 877.8 L472.6 880.8 L476.0 884.3 L479.4 888.3 L482.8 892.5 L486.1 897.1 L489.5 901.8 L492.9 906.7 L496.2 911.7 L499.6 916.7 L503.0 921.6 L506.4 926.3 L509.8 930.7 L513.1 934.9 L516.5 938.7 L519.9 942.1 L523.2 945.1 L526.6 947.5 L530.0 949.5Z" fill="rgba(240,200,60,0.35)" stroke="none"/><path d="M395.0 949.5 L398.4 947.5 L401.8 944.9 L405.1 941.9 L408.5 938.3 L411.9 934.4 L415.2 930.0 L418.6 925.4 L422.0 920.5 L425.4 915.5 L428.8 910.4 L432.1 905.3 L435.5 900.3 L438.9 895.4 L442.2 890.9 L445.6 886.6 L449.0 882.8 L452.4 879.4 L455.8 876.4 L459.1 874.0 L462.5 873.1 L465.9 875.2 L469.2 877.8 L472.6 880.8 L476.0 884.3 L479.4 888.3 L482.8 892.5 L486.1 897.1 L489.5 901.8 L492.9 906.7 L496.2 911.7 L499.6 916.7 L503.0 921.6 L506.4 926.3 L509.8 930.7 L513.1 934.9 L516.5 938.7 L519.9 942.1 L523.2 945.1 L526.6 947.5 L530.0 949.5" fill="none" stroke="#f0c428" stroke-width="1.2"/><path d="M450.7 949.5 L452.6 948.8 L454.5 947.9 L456.4 946.8 L458.3 945.6 L460.2 944.2 L462.1 942.7 L464.0 941.1 L465.9 939.4 L467.8 937.7 L469.8 935.9 L471.7 934.1 L473.6 932.4 L475.5 930.7 L477.4 929.1 L479.3 927.6 L481.2 926.2 L483.1 925.0 L485.0 923.9 L486.9 923.0 L488.8 922.3 L490.7 923.0 L492.6 923.9 L494.5 925.0 L496.4 926.2 L498.3 927.6 L500.2 929.1 L502.1 930.7 L504.0 932.4 L505.9 934.1 L507.8 935.9 L509.8 937.7 L511.7 939.4 L513.6 941.1 L515.5 942.7 L517.4 944.2 L519.3 945.6 L521.2 946.8 L523.1 947.9 L525.0 948.8 L526.9 949.5Z" fill="rgba(200,180,40,0.30)" stroke="none"/><path d="M450.7 949.5 L452.6 948.8 L454.5 947.9 L456.4 946.8 L458.3 945.6 L460.2 944.2 L462.1 942.7 L464.0 941.1 L465.9 939.4 L467.8 937.7 L469.8 935.9 L471.7 934.1 L473.6 932.4 L475.5 930.7 L477.4 929.1 L479.3 927.6 L481.2 926.2 L483.1 925.0 L485.0 923.9 L486.9 923.0 L488.8 922.3 L490.7 923.0 L492.6 923.9 L494.5 925.0 L496.4 926.2 L498.3 927.6 L500.2 929.1 L502.1 930.7 L504.0 932.4 L505.9 934.1 L507.8 935.9 L509.8 937.7 L511.7 939.4 L513.6 941.1 L515.5 942.7 L517.4 944.2 L519.3 945.6 L521.2 946.8 L523.1 947.9 L525.0 948.8 L526.9 949.5" fill="none" stroke="#c8b428" stroke-width="1.2"/><path d="M465.4 949.5 L467.0 949.2 L468.5 948.8 L470.1 948.4 L471.7 947.9 L473.3 947.3 L474.8 946.7 L476.4 946.0 L478.0 945.3 L479.6 944.6 L481.1 943.9 L482.7 943.2 L484.3 942.5 L485.8 941.8 L487.4 941.2 L489.0 940.7 L490.6 940.2 L492.1 939.8 L493.7 939.5 L495.3 939.4 L496.8 939.7 L498.4 940.0 L500.0 940.4 L501.6 940.8 L503.1 941.3 L504.7 941.8 L506.3 942.4 L507.9 943.0 L509.4 943.6 L511.0 944.2 L512.6 944.8 L514.1 945.5 L515.7 946.1 L517.3 946.6 L518.9 947.2 L520.4 947.7 L522.0 948.2 L523.6 948.6 L525.2 949.0 L526.7 949.3 L528.3 949.5Z" fill="rgba(180,220,40,0.35)" stroke="none"/><path d="M465.4 949.5 L467.0 949.2 L468.5 948.8 L470.1 948.4 L471.7 947.9 L473.3 947.3 L474.8 946.7 L476.4 946.0 L478.0 945.3 L479.6 944.6 L481.1 943.9 L482.7 943.2 L484.3 942.5 L485.8 941.8 L487.4 941.2 L489.0 940.7 L490.6 940.2 L492.1 939.8 L493.7 939.5 L495.3 939.4 L496.8 939.7 L498.4 940.0 L500.0 940.4 L501.6 940.8 L503.1 941.3 L504.7 941.8 L506.3 942.4 L507.9 943.0 L509.4 943.6 L511.0 944.2 L512.6 944.8 L514.1 945.5 L515.7 946.1 L517.3 946.6 L518.9 947.2 L520.4 947.7 L522.0 948.2 L523.6 948.6 L525.2 949.0 L526.7 949.3 L528.3 949.5" fill="none" stroke="#b4dc28" stroke-width="1.2"/><path d="M549.7 949.5 L551.3 948.7 L552.8 947.7 L554.4 946.5 L556.0 945.1 L557.5 943.6 L559.1 941.9 L560.7 940.1 L562.2 938.2 L563.8 936.2 L565.4 934.2 L566.9 932.2 L568.5 930.3 L570.0 928.4 L571.6 926.6 L573.2 925.0 L574.7 923.5 L576.3 922.2 L577.9 921.1 L579.4 920.2 L581.0 920.0 L582.6 920.8 L584.1 921.8 L585.7 923.0 L587.3 924.4 L588.8 925.9 L590.4 927.6 L592.0 929.3 L593.5 931.2 L595.1 933.0 L596.6 935.0 L598.2 936.9 L599.8 938.8 L601.3 940.6 L602.9 942.3 L604.5 943.9 L606.0 945.4 L607.6 946.7 L609.2 947.8 L610.7 948.7 L612.3 949.5Z" fill="rgba(50,205,50,0.28)" stroke="none"/><path d="M549.7 949.5 L551.3 948.7 L552.8 947.7 L554.4 946.5 L556.0 945.1 L557.5 943.6 L559.1 941.9 L560.7 940.1 L562.2 938.2 L563.8 936.2 L565.4 934.2 L566.9 932.2 L568.5 930.3 L570.0 928.4 L571.6 926.6 L573.2 925.0 L574.7 923.5 L576.3 922.2 L577.9 921.1 L579.4 920.2 L581.0 920.0 L582.6 920.8 L584.1 921.8 L585.7 923.0 L587.3 924.4 L588.8 925.9 L590.4 927.6 L592.0 929.3 L593.5 931.2 L595.1 933.0 L596.6 935.0 L598.2 936.9 L599.8 938.8 L601.3 940.6 L602.9 942.3 L604.5 943.9 L606.0 945.4 L607.6 946.7 L609.2 947.8 L610.7 948.7 L612.3 949.5" fill="none" stroke="#32cd32" stroke-width="1.2"/><path d="M907.4 949.5 L909.0 949.3 L910.6 949.1 L912.2 948.9 L913.9 948.6 L915.5 948.3 L917.1 948.0 L918.7 947.6 L920.3 947.2 L921.9 946.8 L923.5 946.4 L925.2 946.0 L926.8 945.6 L928.4 945.2 L930.0 944.8 L931.6 944.5 L933.2 944.1 L934.9 943.8 L936.5 943.6 L938.1 943.3 L939.7 943.1 L941.3 943.0 L942.9 943.2 L944.5 943.4 L946.2 943.7 L947.8 944.0 L949.4 944.4 L951.0 944.8 L952.6 945.2 L954.2 945.6 L955.9 946.1 L957.5 946.5 L959.1 947.0 L960.7 947.4 L962.3 947.8 L963.9 948.2 L965.5 948.5 L967.2 948.8 L968.8 949.1 L970.4 949.3 L972.0 949.5Z" fill="rgba(240,160,48,0.30)" stroke="none"/><path d="M907.4 949.5 L909.0 949.3 L910.6 949.1 L912.2 948.9 L913.9 948.6 L915.5 948.3 L917.1 948.0 L918.7 947.6 L920.3 947.2 L921.9 946.8 L923.5 946.4 L925.2 946.0 L926.8 945.6 L928.4 945.2 L930.0 944.8 L931.6 944.5 L933.2 944.1 L934.9 943.8 L936.5 943.6 L938.1 943.3 L939.7 943.1 L941.3 943.0 L942.9 943.2 L944.5 943.4 L946.2 943.7 L947.8 944.0 L949.4 944.4 L951.0 944.8 L952.6 945.2 L954.2 945.6 L955.9 946.1 L957.5 946.5 L959.1 947.0 L960.7 947.4 L962.3 947.8 L963.9 948.2 L965.5 948.5 L967.2 948.8 L968.8 949.1 L970.4 949.3 L972.0 949.5" fill="none" stroke="#f0a030" stroke-width="1.2"/><path d="M919.0 949.5 L920.4 949.1 L921.9 948.5 L923.3 947.9 L924.7 947.1 L926.1 946.3 L927.5 945.3 L929.0 944.3 L930.4 943.3 L931.8 942.2 L933.2 941.1 L934.7 940.0 L936.1 938.9 L937.5 937.8 L939.0 936.8 L940.4 935.8 L941.8 934.9 L943.2 934.1 L944.6 933.4 L946.1 932.8 L947.5 932.3 L948.9 932.2 L950.4 932.7 L951.8 933.3 L953.2 934.1 L954.6 934.9 L956.0 935.9 L957.5 936.9 L958.9 938.0 L960.3 939.2 L961.8 940.4 L963.2 941.6 L964.6 942.7 L966.0 943.9 L967.5 945.0 L968.9 946.0 L970.3 946.9 L971.7 947.7 L973.1 948.4 L974.6 949.0 L976.0 949.5Z" fill="rgba(46,204,113,0.28)" stroke="none"/><path d="M919.0 949.5 L920.4 949.1 L921.9 948.5 L923.3 947.9 L924.7 947.1 L926.1 946.3 L927.5 945.3 L929.0 944.3 L930.4 943.3 L931.8 942.2 L933.2 941.1 L934.7 940.0 L936.1 938.9 L937.5 937.8 L939.0 936.8 L940.4 935.8 L941.8 934.9 L943.2 934.1 L944.6 933.4 L946.1 932.8 L947.5 932.3 L948.9 932.2 L950.4 932.7 L951.8 933.3 L953.2 934.1 L954.6 934.9 L956.0 935.9 L957.5 936.9 L958.9 938.0 L960.3 939.2 L961.8 940.4 L963.2 941.6 L964.6 942.7 L966.0 943.9 L967.5 945.0 L968.9 946.0 L970.3 946.9 L971.7 947.7 L973.1 948.4 L974.6 949.0 L976.0 949.5" fill="none" stroke="#2ecc71" stroke-width="1.2"/><path d="M1082.6 949.5 L1085.0 949.1 L1087.4 948.7 L1089.7 948.2 L1092.1 947.5 L1094.5 946.8 L1096.9 946.1 L1099.3 945.3 L1101.6 944.4 L1104.0 943.5 L1106.4 942.6 L1108.8 941.7 L1111.2 940.8 L1113.5 939.9 L1115.9 939.1 L1118.3 938.3 L1120.7 937.5 L1123.1 936.9 L1125.4 936.3 L1127.8 935.8 L1130.2 935.4 L1132.6 935.4 L1135.0 935.8 L1137.3 936.3 L1139.7 936.9 L1142.1 937.6 L1144.5 938.4 L1146.9 939.3 L1149.2 940.2 L1151.6 941.1 L1154.0 942.1 L1156.4 943.1 L1158.8 944.0 L1161.1 944.9 L1163.5 945.8 L1165.9 946.6 L1168.3 947.4 L1170.7 948.1 L1173.0 948.6 L1175.4 949.1 L1177.8 949.5Z" fill="rgba(240,200,60,0.35)" stroke="none"/><path d="M1082.6 949.5 L1085.0 949.1 L1087.4 948.7 L1089.7 948.2 L1092.1 947.5 L1094.5 946.8 L1096.9 946.1 L1099.3 945.3 L1101.6 944.4 L1104.0 943.5 L1106.4 942.6 L1108.8 941.7 L1111.2 940.8 L1113.5 939.9 L1115.9 939.1 L1118.3 938.3 L1120.7 937.5 L1123.1 936.9 L1125.4 936.3 L1127.8 935.8 L1130.2 935.4 L1132.6 935.4 L1135.0 935.8 L1137.3 936.3 L1139.7 936.9 L1142.1 937.6 L1144.5 938.4 L1146.9 939.3 L1149.2 940.2 L1151.6 941.1 L1154.0 942.1 L1156.4 943.1 L1158.8 944.0 L1161.1 944.9 L1163.5 945.8 L1165.9 946.6 L1168.3 947.4 L1170.7 948.1 L1173.0 948.6 L1175.4 949.1 L1177.8 949.5" fill="none" stroke="#f0c428" stroke-width="1.2"/><path d="M1217.2 949.5 L1218.7 948.8 L1220.2 948.0 L1221.7 947.0 L1223.2 945.9 L1224.6 944.6 L1226.1 943.2 L1227.6 941.7 L1229.1 940.1 L1230.6 938.5 L1232.1 936.8 L1233.6 935.1 L1235.0 933.5 L1236.5 932.0 L1238.0 930.5 L1239.5 929.1 L1241.0 927.9 L1242.5 926.8 L1244.0 925.8 L1245.5 925.0 L1247.0 924.8 L1248.4 925.5 L1249.9 926.3 L1251.4 927.3 L1252.9 928.4 L1254.4 929.7 L1255.9 931.1 L1257.4 932.6 L1258.9 934.1 L1260.3 935.7 L1261.8 937.3 L1263.3 938.9 L1264.8 940.5 L1266.3 942.0 L1267.8 943.4 L1269.3 944.8 L1270.8 946.0 L1272.2 947.1 L1273.7 948.1 L1275.2 948.9 L1276.7 949.5Z" fill="rgba(48,200,200,0.28)" stroke="none"/><path d="M1217.2 949.5 L1218.7 948.8 L1220.2 948.0 L1221.7 947.0 L1223.2 945.9 L1224.6 944.6 L1226.1 943.2 L1227.6 941.7 L1229.1 940.1 L1230.6 938.5 L1232.1 936.8 L1233.6 935.1 L1235.0 933.5 L1236.5 932.0 L1238.0 930.5 L1239.5 929.1 L1241.0 927.9 L1242.5 926.8 L1244.0 925.8 L1245.5 925.0 L1247.0 924.8 L1248.4 925.5 L1249.9 926.3 L1251.4 927.3 L1252.9 928.4 L1254.4 929.7 L1255.9 931.1 L1257.4 932.6 L1258.9 934.1 L1260.3 935.7 L1261.8 937.3 L1263.3 938.9 L1264.8 940.5 L1266.3 942.0 L1267.8 943.4 L1269.3 944.8 L1270.8 946.0 L1272.2 947.1 L1273.7 948.1 L1275.2 948.9 L1276.7 949.5" fill="none" stroke="#30c8c8" stroke-width="1.2"/><path d="M1301.2 949.5 L1302.8 949.5 L1304.4 949.4 L1306.1 949.2 L1307.7 948.8 L1309.3 948.0 L1310.9 946.9 L1312.6 945.5 L1314.2 943.5 L1315.8 941.2 L1317.4 938.3 L1319.0 935.1 L1320.7 931.5 L1322.3 927.6 L1323.9 923.4 L1325.5 919.1 L1327.2 914.8 L1328.8 910.6 L1330.4 906.7 L1332.0 903.0 L1333.7 899.9 L1335.3 902.8 L1336.9 906.4 L1338.5 910.4 L1340.1 914.6 L1341.8 918.9 L1343.4 923.2 L1345.0 927.4 L1346.6 931.4 L1348.3 935.0 L1349.9 938.3 L1351.5 941.1 L1353.1 943.5 L1354.7 945.4 L1356.4 946.9 L1358.0 948.0 L1359.6 948.8 L1361.2 949.2 L1362.9 949.4 L1364.5 949.5 L1366.1 949.5Z" fill="rgba(48,168,224,0.28)" stroke="none"/><path d="M1301.2 949.5 L1302.8 949.5 L1304.4 949.4 L1306.1 949.2 L1307.7 948.8 L1309.3 948.0 L1310.9 946.9 L1312.6 945.5 L1314.2 943.5 L1315.8 941.2 L1317.4 938.3 L1319.0 935.1 L1320.7 931.5 L1322.3 927.6 L1323.9 923.4 L1325.5 919.1 L1327.2 914.8 L1328.8 910.6 L1330.4 906.7 L1332.0 903.0 L1333.7 899.9 L1335.3 902.8 L1336.9 906.4 L1338.5 910.4 L1340.1 914.6 L1341.8 918.9 L1343.4 923.2 L1345.0 927.4 L1346.6 931.4 L1348.3 935.0 L1349.9 938.3 L1351.5 941.1 L1353.1 943.5 L1354.7 945.4 L1356.4 946.9 L1358.0 948.0 L1359.6 948.8 L1361.2 949.2 L1362.9 949.4 L1364.5 949.5 L1366.1 949.5" fill="none" stroke="#30a8e0" stroke-width="1.2"/><path d="M1480.3 949.5 L1482.1 949.5 L1483.9 949.4 L1485.7 949.1 L1487.5 948.4 L1489.3 947.4 L1491.1 945.9 L1492.8 943.7 L1494.6 941.0 L1496.4 937.6 L1498.2 933.6 L1500.0 929.0 L1501.8 923.8 L1503.6 918.3 L1505.4 912.4 L1507.2 906.3 L1509.0 900.3 L1510.8 894.3 L1512.6 888.8 L1514.4 883.7 L1516.2 880.0 L1517.9 884.5 L1519.7 889.6 L1521.5 895.2 L1523.3 901.1 L1525.1 907.1 L1526.9 913.1 L1528.7 918.9 L1530.5 924.4 L1532.3 929.4 L1534.1 934.0 L1535.9 937.9 L1537.7 941.2 L1539.5 943.9 L1541.2 945.9 L1543.0 947.5 L1544.8 948.5 L1546.6 949.1 L1548.4 949.4 L1550.2 949.5 L1552.0 949.5Z" fill="rgba(46,204,113,0.28)" stroke="none"/><path d="M1480.3 949.5 L1482.1 949.5 L1483.9 949.4 L1485.7 949.1 L1487.5 948.4 L1489.3 947.4 L1491.1 945.9 L1492.8 943.7 L1494.6 941.0 L1496.4 937.6 L1498.2 933.6 L1500.0 929.0 L1501.8 923.8 L1503.6 918.3 L1505.4 912.4 L1507.2 906.3 L1509.0 900.3 L1510.8 894.3 L1512.6 888.8 L1514.4 883.7 L1516.2 880.0 L1517.9 884.5 L1519.7 889.6 L1521.5 895.2 L1523.3 901.1 L1525.1 907.1 L1526.9 913.1 L1528.7 918.9 L1530.5 924.4 L1532.3 929.4 L1534.1 934.0 L1535.9 937.9 L1537.7 941.2 L1539.5 943.9 L1541.2 945.9 L1543.0 947.5 L1544.8 948.5 L1546.6 949.1 L1548.4 949.4 L1550.2 949.5 L1552.0 949.5" fill="none" stroke="#2ecc71" stroke-width="1.2"/><rect x="426" y="819" width="30" height="131" fill="rgba(0,0,40,0.13)"/></g><path d="M432.5 949.5v5M444.5 949.5v5M456.5 949.5v5M468.5 949.5v5M480.5 949.5v10M492.5 949.5v5M504.5 949.5v5M516.5 949.5v5M528.5 949.5v5M540.5 949.5v10M552.5 949.5v5M564.5 949.5v5M576.5 949.5v5M588.5 949.5v5M600.5 949.5v10M612.5 949.5v5M624.5 949.5v5M636.5 949.5v5M648.5 949.5v5M660.5 949.5v10M672.5 949.5v5M684.5 949.5v5M696.5 949.5v5M708.5 949.5v5M720.5 949.5v10M732.5 949.5v5M744.5 949.5v5M756.5 949.5v5M768.5 949.5v5M780.5 949.5v10M792.5 949.5v5M804.5 949.5v5M816.5 949.5v5M828.5 949.5v5M840.5 949.5v10M852.5 949.5v5M864.5 949.5v5M876.5 949.5v5M888.5 949.5v5M900.5 949.5v10M912.5 949.5v5M924.5 949.5v5M936.5 949.5v5M948.5 949.5v5M960.5 949.5v10M972.5 949.5v5M984.5 949.5v5M996.5 949.5v5M1008.5 949.5v5M1020.5 949.5v10M1032.5 949.5v5M1044.5 949.5v5M1056.5 949.5v5M1068.5 949.5v5M1080.5 949.5v10M1092.5 949.5v5M1104.5 949.5v5M1116.5 949.5v5M1128.5 949.5v5M1140.5 949.5v10M1152.5 949.5v5M1164.5 949.5v5M1176.5 949.5v5M1188.5 949.5v5M1200.5 949.5v10M1212.5 949.5v5M1224.5 949.5v5M1236.5 949.5v5M1248.5 949.5v5M1260.5 949.5v10M1272.5 949.5v5M1284.5 949.5v5M1296.5 949.5v5M1308.5 949.5v5M1320.5 949.5v10M1332.5 949.5v5M1344.5 949.5v5M1356.5 949.5v5M1368.5 949.5v5M1380.5 949.5v10M1392.5 949.5v5M1404.5 949.5v5M1416.5 949.5v5M1428.5 949.5v5M1440.5 949.5v10M1452.5 949.5v5M1464.5 949.5v5M1476.5 949.5v5M1488.5 949.5v5M1500.5 949.5v10M1512.5 949.5v5" stroke="#1a1a1a" stroke-width="1" fill="none" shape-rendering="crispEdges"/></svg>
<div class="t" style="top:857px;height:17px;line-height:17px;font-size:12px;color:#1a1a1a;letter-spacing:-0.2px;left:262.6px;width:400px;text-align:center;">RS-44</div>
<div class="t" style="top:907.9px;height:17px;line-height:17px;font-size:12px;color:#1a1a1a;letter-spacing:-0.2px;left:289.6px;width:400px;text-align:center;">SO-50</div>
<div class="t" style="top:924.3px;height:17px;line-height:17px;font-size:12px;color:#1a1a1a;letter-spacing:-0.2px;left:296.6px;width:400px;text-align:center;">FO-29</div>
<div class="t" style="top:905px;height:17px;line-height:17px;font-size:12px;color:#1a1a1a;letter-spacing:-0.2px;left:381.8px;width:400px;text-align:center;">SO-124</div>
<div class="t" style="top:917px;height:17px;line-height:17px;font-size:12px;color:#1a1a1a;letter-spacing:-0.2px;left:749.2px;width:400px;text-align:center;">AO-73</div>
<div class="t" style="top:929px;height:17px;line-height:17px;font-size:12px;color:#1a1a1a;letter-spacing:-0.2px;left:741.9px;width:400px;text-align:center;">AO-7</div>
<div class="t" style="top:920.9px;height:17px;line-height:17px;font-size:12px;color:#1a1a1a;letter-spacing:-0.2px;left:931.4px;width:400px;text-align:center;">RS-44</div>
<div class="t" style="top:909.7px;height:17px;line-height:17px;font-size:12px;color:#1a1a1a;letter-spacing:-0.2px;left:1046.4px;width:400px;text-align:center;">ISS</div>
<div class="t" style="top:884.9px;height:17px;line-height:17px;font-size:12px;color:#1a1a1a;letter-spacing:-0.2px;left:1133.6px;width:400px;text-align:center;">SONATE</div>
<div class="t" style="top:865px;height:17px;line-height:17px;font-size:12px;color:#1a1a1a;letter-spacing:-0.2px;left:1499px;width:18px;overflow:hidden;">AO</div>
<div class="t" style="top:957px;height:17px;line-height:17px;font-size:12px;letter-spacing:-0.105px;left:282.25px;width:400px;text-align:center;">13:10</div>
<div class="t" style="top:957px;height:17px;line-height:17px;font-size:12px;letter-spacing:-0.105px;left:342.25px;width:400px;text-align:center;">13:20</div>
<div class="t" style="top:957px;height:17px;line-height:17px;font-size:12px;letter-spacing:-0.105px;left:402.25px;width:400px;text-align:center;">13:30</div>
<div class="t" style="top:957px;height:17px;line-height:17px;font-size:12px;letter-spacing:-0.105px;left:462.25px;width:400px;text-align:center;">13:40</div>
<div class="t" style="top:957px;height:17px;line-height:17px;font-size:12px;letter-spacing:-0.105px;left:522.25px;width:400px;text-align:center;">13:50</div>
<div class="t" style="top:957px;height:17px;line-height:17px;font-size:12px;letter-spacing:-0.105px;left:582.25px;width:400px;text-align:center;">14:00</div>
<div class="t" style="top:957px;height:17px;line-height:17px;font-size:12px;letter-spacing:-0.105px;left:642.25px;width:400px;text-align:center;">14:10</div>
<div class="t" style="top:957px;height:17px;line-height:17px;font-size:12px;letter-spacing:-0.105px;left:702.25px;width:400px;text-align:center;">14:20</div>
<div class="t" style="top:957px;height:17px;line-height:17px;font-size:12px;letter-spacing:-0.105px;left:762.25px;width:400px;text-align:center;">14:30</div>
<div class="t" style="top:957px;height:17px;line-height:17px;font-size:12px;letter-spacing:-0.105px;left:822.25px;width:400px;text-align:center;">14:40</div>
<div class="t" style="top:957px;height:17px;line-height:17px;font-size:12px;letter-spacing:-0.105px;left:882.25px;width:400px;text-align:center;">14:50</div>
<div class="t" style="top:957px;height:17px;line-height:17px;font-size:12px;letter-spacing:-0.105px;left:942.25px;width:400px;text-align:center;">15:00</div>
<div class="t" style="top:957px;height:17px;line-height:17px;font-size:12px;letter-spacing:-0.105px;left:1002.25px;width:400px;text-align:center;">15:10</div>
<div class="t" style="top:957px;height:17px;line-height:17px;font-size:12px;letter-spacing:-0.105px;left:1062.25px;width:400px;text-align:center;">15:20</div>
<div class="t" style="top:957px;height:17px;line-height:17px;font-size:12px;letter-spacing:-0.105px;left:1122.25px;width:400px;text-align:center;">15:30</div>
<div class="t" style="top:957px;height:17px;line-height:17px;font-size:12px;letter-spacing:-0.105px;left:1182.25px;width:400px;text-align:center;">15:40</div>
<div class="t" style="top:957px;height:17px;line-height:17px;font-size:12px;letter-spacing:-0.105px;left:1242.25px;width:400px;text-align:center;">15:50</div>
<div class="t" style="top:957px;height:17px;line-height:17px;font-size:12px;letter-spacing:-0.205px;right:396.2px;text-align:right;">16:00</div>
<div class="t" style="top:957px;height:17px;line-height:17px;font-size:10.75px;letter-spacing:-0.478px;left:426px;">00</div>
<div class="t" style="top:969px;height:17px;line-height:17px;font-size:12px;letter-spacing:-0.225px;left:771.89px;width:400px;text-align:center;">May 24</div>
<div class="a" style="left:425px;top:819px;width:1px;height:166px;background:#cccedb;"></div>
<div class="a" style="left:1517px;top:819px;width:1px;height:166px;background:#cccedb;"></div>
<!-- p4_right -->
<div class="a" style="left:1524px;top:139px;width:382px;height:441px;background:#ffffff;box-sizing:border-box;border:1px solid #cccedb;"></div><div class="a" style="left:1525px;top:140px;width:380px;height:21px;background:#eeeef2;"></div><div class="t" style="top:143px;height:17px;line-height:17px;font-size:11.5px;color:#444;letter-spacing:-0.235px;left:1529px;">Sky View</div><svg class="a" style="left:1581px;top:148px" width="286" height="5" viewBox="0 0 286 5"><defs><pattern id="g1581_148" width="4" height="4" patternUnits="userSpaceOnUse"><rect x="0" y="0" width="1" height="1" fill="#9c9ca8"/><rect x="2" y="2" width="1" height="1" fill="#9c9ca8"/></pattern></defs><rect width="286" height="5" fill="url(#g1581_148)"/></svg><svg class="a" style="left:1873px;top:145px" width="10" height="12" viewBox="0 0 10 12" shape-rendering="crispEdges"><path d="M2 0h5v1h-5zM2 1h1v5h-1zM5 1h2v5h-2zM1 6h7v1h-7zM4 7h1v4h-1z" fill="#111"/></svg><svg class="a" style="left:1888px;top:144px" width="12" height="12" viewBox="-6 -6 12 12"><path d="M-4.6 -3.9L4.6 3.9M4.6 -3.9L-4.6 3.9" stroke="#1e1e1e" stroke-width="1.6" fill="none"/></svg>
<div class="a" style="left:1525px;top:161px;width:380px;height:24px;background:#f0f0f0;"></div>
<div class="a" style="left:1528px;top:164px;width:76px;height:19px;background:#e0ffff;"></div>
<div class="a" style="left:1610px;top:164px;width:139px;height:19px;background:#e1e1e1;"></div>
<svg class="a" style="left:1527px;top:166.5px" width="14" height="14" viewBox="-7 -7 14 14"><circle r="6" fill="#fff" stroke="#333" stroke-width="1"/><circle r="3.2" fill="#333"/></svg>
<div class="t" style="top:166px;height:17px;line-height:17px;font-size:12px;letter-spacing:-0.335px;left:1547px;">Real Time</div>
<svg class="a" style="left:1609.5px;top:166.5px" width="14" height="14" viewBox="-7 -7 14 14"><circle r="6" fill="#fff" stroke="#333" stroke-width="1"/></svg>
<div class="t" style="top:166px;height:17px;line-height:17px;font-size:12px;letter-spacing:-0.312px;left:1629.5px;">Orbit #25265 of RS-44</div>
<div class="a" style="left:1525px;top:186px;width:380px;height:30px;background:#ffffff;"></div>
<div class="a" style="left:1525px;top:216px;width:380px;height:1px;background:#f2f2f2;"></div>
<div class="t" style="top:186px;height:17px;line-height:17px;font-size:12px;font-weight:bold;letter-spacing:-0.103px;left:1531.4px;">RS-44</div>
<div class="t" style="top:186px;height:17px;line-height:17px;font-size:11px;letter-spacing:-0.17px;left:1578.5px;">LOS</div>
<div class="t" style="top:186px;height:17px;line-height:17px;font-size:12px;left:1601.5px;"><span style="font-family:DejaVu Sans,sans-serif;font-size:10px;line-height:0">&#8595;</span></div>
<div class="t" style="top:186px;height:17px;line-height:17px;font-size:12px;letter-spacing:-0.33px;left:1614.1px;">in 12m 22s</div>
<div class="t" style="top:186px;height:17px;line-height:17px;font-size:11.5px;letter-spacing:-0.313px;left:1683.4px;">Az. 289.4°&nbsp; El. 56.4°</div>
<div class="t" style="top:201px;height:17px;line-height:17px;font-size:11.5px;letter-spacing:-0.347px;left:1531.4px;">SO-50</div>
<div class="t" style="top:201px;height:17px;line-height:17px;font-size:11px;letter-spacing:-0.17px;left:1576.4px;">LOS</div>
<div class="t" style="top:201px;height:17px;line-height:17px;font-size:12px;left:1599.4px;"><span style="font-family:DejaVu Sans,sans-serif;font-size:10px;line-height:0">&#8595;</span></div>
<div class="t" style="top:201px;height:17px;line-height:17px;font-size:12px;letter-spacing:-0.24px;left:1612px;">in 11m 33s</div>
<div class="t" style="top:201px;height:17px;line-height:17px;font-size:11.5px;letter-spacing:-0.249px;left:1681.2px;">Az. 307.5°&nbsp; El. 2.9°</div>
<svg class="a" style="left:1525px;top:216px" width="380" height="363" viewBox="1525 216 380 363"><circle cx="1715.4" cy="397.4" r="160.7" fill="#e6f7fd" stroke="#008080" stroke-width="1.1"/><circle cx="1715.4" cy="397.4" r="107.1" fill="none" stroke="#008080" stroke-width="1.1"/><circle cx="1715.4" cy="397.4" r="53.6" fill="none" stroke="#008080" stroke-width="1.1"/><path d="M1554.7 397.4h321.4M1715.4 236.7v321.4" stroke="#008080" stroke-width="1.1" fill="none"/><text x="1715.4" y="229" font-size="15.5" fill="#008080" text-anchor="middle">N</text><text x="1715.4" y="577" font-size="15.5" fill="#008080" text-anchor="middle">S</text><text x="1542.5" y="402.5" font-size="15.5" fill="#008080" text-anchor="middle">W</text><text x="1883.4" y="402.5" font-size="15.5" fill="#008080" text-anchor="middle">E</text><circle cx="1659.1" cy="367.7" r="22.2" fill="rgba(235,150,150,0.55)"/><path d="M1680.3 240C1670 290 1661 340 1659.1 376.6C1657.5 405 1660 440 1663.5 467.4C1668 500 1676 525 1687 556" stroke="#0a8a0a" stroke-width="2.2" fill="none"/><path d="M1593.9 291C1586 320 1584 345 1585 369.9C1586 395 1592 425 1601.4 447.5C1612 472 1640 510 1661.3 529.5C1675 542 1690 551 1700.3 557.4" stroke="#0a8a0a" stroke-width="2.2" fill="none"/><path d="M1654 401l4.5 8 4.5-8" stroke="#0a8a0a" stroke-width="1.6" fill="none"/><path d="M1595.5 442l6.5 7 1.5-9" stroke="#0a8a0a" stroke-width="1.6" fill="none"/><circle cx="1680.3" cy="240" r="5.2" fill="#0a9a0a" stroke="#075f07" stroke-width="0.8"/><path d="M1677.8 240l2 2 3-4" stroke="#fff" stroke-width="1.3" fill="none"/><circle cx="1593.9" cy="291" r="5.2" fill="#0a9a0a" stroke="#075f07" stroke-width="0.8"/><path d="M1591.4 291l2 2 3-4" stroke="#fff" stroke-width="1.3" fill="none"/><circle cx="1687" cy="556" r="5.2" fill="#f01414" stroke="#a00a0a" stroke-width="0.8"/><path d="M1684.8 553.8l4.4 4.4M1689.2 553.8l-4.4 4.4" stroke="#fff" stroke-width="1.4" fill="none"/><circle cx="1700.3" cy="557.4" r="5.2" fill="#f01414" stroke="#a00a0a" stroke-width="0.8"/><path d="M1698.1 555.1999999999999l4.4 4.4M1702.5 555.1999999999999l-4.4 4.4" stroke="#fff" stroke-width="1.4" fill="none"/><g transform="translate(1659.1 377.5) rotate(0) scale(1.0)"><rect x="-13" y="-3.5" width="9.5" height="7" fill="#2a5cc0" stroke="#16357a" stroke-width="0.5"/><rect x="3.5" y="-3.5" width="9.5" height="7" fill="#2a5cc0" stroke="#16357a" stroke-width="0.5"/><path d="M-10 -3.5v7M-7 -3.5v7M6.5 -3.5v7M9.5 -3.5v7M-13 0h9.5M3.5 0h9.5" stroke="#7fa4e8" stroke-width="0.5" fill="none"/><rect x="-3" y="-6" width="6" height="12" rx="1" fill="#d8a820" stroke="#8a6a10" stroke-width="0.5"/><path d="M0 -6v-3M-2.5 -10.5h5l-2.5 2z" stroke="#4a78c8" stroke-width="1" fill="#4a78c8"/></g><g transform="translate(1592.6 302.6) rotate(12) scale(1.0)"><rect x="-13" y="-3.5" width="9.5" height="7" fill="#2a5cc0" stroke="#16357a" stroke-width="0.5"/><rect x="3.5" y="-3.5" width="9.5" height="7" fill="#2a5cc0" stroke="#16357a" stroke-width="0.5"/><path d="M-10 -3.5v7M-7 -3.5v7M6.5 -3.5v7M9.5 -3.5v7M-13 0h9.5M3.5 0h9.5" stroke="#7fa4e8" stroke-width="0.5" fill="none"/><rect x="-3" y="-6" width="6" height="12" rx="1" fill="#d8a820" stroke="#8a6a10" stroke-width="0.5"/><path d="M0 -6v-3M-2.5 -10.5h5l-2.5 2z" stroke="#4a78c8" stroke-width="1" fill="#4a78c8"/></g><text x="1667.9" y="365.5" font-size="12.5" font-weight="bold" fill="#111">RS-44</text><text x="1600.5" y="290" font-size="12" fill="#111">SO-50</text></svg>
<div class="a" style="left:1524px;top:586px;width:382px;height:399px;background:#6685a3;box-sizing:border-box;border:1px solid #cccedb;"></div><div class="a" style="left:1525px;top:587px;width:380px;height:21px;background:#eeeef2;"></div><div class="t" style="top:590px;height:17px;line-height:17px;font-size:12px;color:#444;letter-spacing:-0.341px;left:1529px;">Earth View</div><svg class="a" style="left:1590px;top:595px" width="276" height="5" viewBox="0 0 276 5"><defs><pattern id="g1590_595" width="4" height="4" patternUnits="userSpaceOnUse"><rect x="0" y="0" width="1" height="1" fill="#9c9ca8"/><rect x="2" y="2" width="1" height="1" fill="#9c9ca8"/></pattern></defs><rect width="276" height="5" fill="url(#g1590_595)"/></svg><svg class="a" style="left:1873px;top:592px" width="10" height="12" viewBox="0 0 10 12" shape-rendering="crispEdges"><path d="M2 0h5v1h-5zM2 1h1v5h-1zM5 1h2v5h-2zM1 6h7v1h-7zM4 7h1v4h-1z" fill="#111"/></svg><svg class="a" style="left:1888px;top:591px" width="12" height="12" viewBox="-6 -6 12 12"><path d="M-4.6 -3.9L4.6 3.9M4.6 -3.9L-4.6 3.9" stroke="#1e1e1e" stroke-width="1.6" fill="none"/></svg>
<svg class="a" style="left:1525px;top:608px" width="380" height="376" viewBox="2.7 5.4 1026.6 1015.8"><defs><clipPath id="nac"><path id="nap" d="M120 118L150 80 175 85 180 50 220 35 260 48 280 95 300 120 340 150 380 180 430 215 480 225 520 215 545 235 540 262 520 290 492 312 482 345 500 368 513 370 543 385 563 400 593 432 578 380 598 345 583 295 600 285 638 300 658 335 668 300 678 320 733 360 763 370 773 397 763 415 728 435 703 440 753 460 763 470 733 500 710 515 688 548 663 568 648 593 658 633 628 663 603 698 608 733 621 773 608 778 596 738 588 713 563 708 533 713 513 722 480 718 450 723 425 738 415 763 410 793 415 833 435 858 465 868 495 863 505 838 519 828 538 833 528 873 513 898 563 898 591 908 588 953 603 973 643 983 668 978 678 993 658 1008 628 993 588 988 558 963 513 948 500 928 475 913 450 893 425 898 390 886 350 863 315 833 300 793 280 748 265 713 250 663 232 640 232 658 240 678 250 728 267 768 265 778 245 748 225 713 222 678 215 633 190 603 185 563 180 513 195 500 210 450 235 415 215 380 210 320 220 240 210 210 195 185 165 170 140 165 120 155 75 145 45 125 10 100 50 118 100 138 130 130 115 122Z"/></clipPath><filter id="blr" x="-20%" y="-20%" width="140%" height="140%"><feGaussianBlur stdDeviation="14"/></filter><filter id="tex" x="0" y="0" width="100%" height="100%"><feTurbulence type="fractalNoise" baseFrequency="0.09" numOctaves="2" seed="5"/><feColorMatrix type="matrix" values="0 0 0 0 0.25  0 0 0 0 0.45  0 0 0 0 0.25  0 0 0 1.1 -0.42"/></filter><filter id="lk" x="0" y="0" width="100%" height="100%"><feTurbulence type="fractalNoise" baseFrequency="0.16 0.2" numOctaves="2" seed="9"/><feColorMatrix type="matrix" values="0 0 0 0 0.38  0 0 0 0 0.62  0 0 0 0 0.80  0 0 0 9 -5.6"/></filter><clipPath id="cac"><path d="M200 120L700 120 800 420 700 520 640 500 560 470 470 468 400 460 310 438 235 412Z"/></clipPath></defs><rect x="0" y="0" width="1040" height="1030" fill="#73a7d0"/><g filter="url(#blr)" fill="#86bbe2"><path d="M640 560C720 560 800 600 800 700 830 780 900 800 900 860 800 900 700 930 600 900 560 800 520 760 430 760 400 820 440 880 520 900 560 960 480 960 400 900 380 800 420 720 560 690 600 700 620 640 640 560Z"/><path d="M470 290L600 280 620 440 560 450 480 380Z"/><path d="M540 120L700 260 820 420 780 480 700 560 640 600 660 500 740 430 700 330 600 250Z"/><path d="M330 100L560 100 560 260 420 230Z"/></g><use href="#nap" fill="#bfd6b0"/><g clip-path="url(#nac)"><path d="M0 0H900V250L620 300 560 230 470 250 420 300 340 330 260 300 200 320 0 330Z" fill="#e2e5de" filter="url(#blr)"/><path d="M200 190L300 230 330 330 300 420 330 520 340 620 290 680 170 640 170 500 200 420Z" fill="#dcdccb" filter="url(#blr)"/><path d="M300 360L430 350 480 440 560 500 660 520 700 540 640 640 600 720 410 770 330 700 250 640 210 560 250 460Z" fill="#f1f0b6" filter="url(#blr)"/><path d="M330 440L470 450 560 540 620 560 600 660 520 700 420 720 340 640Z" fill="#f2f1b8"/><path d="M600 560L680 540 660 600 620 690 590 720 560 640Z" fill="#d6e0a8" filter="url(#blr)"/><path d="M215 633L280 673 320 673 340 703 375 708 395 753 415 763 420 840 520 830 540 880 700 1000 600 1030 300 900 200 700Z" fill="#dedcb4"/><path d="M480 830L560 830 600 920 680 990 640 1020 520 950Z" fill="#bcd4a0"/><rect x="0" y="0" width="1040" height="1030" filter="url(#tex)" opacity="0.35"/><g clip-path="url(#cac)"><rect x="150" y="100" width="700" height="450" filter="url(#lk)" opacity="0.8"/></g></g><use href="#nap" fill="none" stroke="#2a8f2a" stroke-width="2.6" stroke-linejoin="round"/><path d="M300 120L213 207M235 415L310 440 400 462 470 470M640 500L690 472 703 440M215 633L232 640 280 673 320 673 340 703 360 713 375 708 395 753 415 763" stroke="#2e962e" stroke-width="1.1" fill="none"/><path d="M468 470L500 461 535 468 562 480 552 493 520 487 490 485Z M520 496l14-4 9 40-4 38-14 5-7-40Z M556 492l26 6 17 28-6 15-19-8-14-22Z M578 549l26-13 23 0-16 15-27 8Z M628 528l22-7 17 4-14 9-23 3Z" fill="#6fb0e0"/><path d="M338 213l24-8 10 10-22 9Z M352 268l20-8 14 6-18 12Z M430 375l10-2 5 42-9 6Z M455 400l18 4 2 10-16-2Z M395 330l10-3 4 10-10 3Z" fill="#6fb0e0"/><path d="M375 118L400 95 430 100 445 130 425 155 395 150Z M432 128L470 118 515 135 525 170 500 200 455 195 435 165Z M415 70L450 55 475 65 470 90 435 95Z M480 60L510 50 530 70 515 95 490 90Z M500 20L545 8 572 40 568 95 545 120 520 100 530 60Z M535 120L565 118 560 150 540 150Z M520 165L545 160 550 195 530 200Z M513 155L553 150 613 198 653 220 656 242 633 250 658 280 628 282 578 262 543 280 515 255 540 215Z M575 300L600 292 612 308 592 318Z M470 245L495 240 500 262 478 268Z" fill="#e6e9e2" stroke="#2a8f2a" stroke-width="2" stroke-linejoin="round"/><path d="M563 55L575 20 600 5 720 5 762 40 772 110 768 160 785 215 792 240 765 248 740 235 705 185 665 150 640 115 600 100Z" fill="#fbfbfb" stroke="#2a8f2a" stroke-width="2.2"/><path d="M600 5L720 5 762 40 772 110 760 100 700 60 640 40Z" fill="#e4e6e4"/><path d="M160 5L196 5 199 20 182 33 166 26Z M118 60l8-4 4 8-8 4Z" fill="#cdd2c8" stroke="#2a8f2a" stroke-width="1.6"/><path d="M815 72L835 60 858 75 855 98 830 110 812 100Z" fill="#d0d8c4" stroke="#2e962e" stroke-width="1"/><path d="M945 35L975 28 1000 45 990 70 1032 60 1032 125 1005 110 975 90 950 60Z" fill="#c4d2a4" stroke="#2e962e" stroke-width="1"/><path d="M773 397L793 410 818 425 808 436 783 436 768 441 770 412Z" fill="#c6d8b2" stroke="#2e962e" stroke-width="1.2"/><path d="M568 818L593 806 628 808 663 818 698 833 683 838 653 833 613 818 583 823Z M700 838L723 828 748 828 773 838 753 848 733 858 703 848Z M793 833l20-3 0 8-20 3Z M655 858l18-3 0 8-15 3Z" fill="#cfe0b0" stroke="#2e962e" stroke-width="1.1"/><path d="M678 993L693 963 738 933 748 928 743 948 758 958 773 933 813 928 863 923 893 928 913 938 963 948 1032 953 1032 1030 640 1030 658 1008Z" fill="#c9d6ac" stroke="#2e962e" stroke-width="1.5"/><path d="M893 928L900 1030M950 946L960 1030M995 950L990 1030M740 950L700 1030" stroke="#2e962e" stroke-width="1" fill="none" opacity="0.8"/><path d="M0 0H1040V1030H0Z M515 64A464 464 0 1 0 515 992A464 464 0 1 0 515 64Z" fill="rgba(84,90,100,0.40)" fill-rule="evenodd"/><text x="415" y="596" font-size="16.5" fill="#1a1a1a" text-anchor="middle" transform="rotate(-8 415 596)">W</text><text x="423" y="355" font-size="16.5" fill="#1a1a1a" text-anchor="middle" transform="rotate(-8 423 355)">VE</text><text x="352" y="790" font-size="16.5" fill="#1a1a1a" text-anchor="middle" transform="rotate(-8 352 790)">XE</text><text x="238" y="834" font-size="16.5" fill="#1a1a1a" text-anchor="middle" transform="rotate(-8 238 834)">XF4</text><text x="242" y="950" font-size="16.5" fill="#1a1a1a" text-anchor="middle" transform="rotate(-8 242 950)">FO[C]</text><text x="646" y="785" font-size="16.5" fill="#1a1a1a" text-anchor="middle" transform="rotate(-8 646 785)">C6</text><text x="738" y="796" font-size="16.5" fill="#1a1a1a" text-anchor="middle" transform="rotate(-8 738 796)">VP5</text><text x="640" y="826" font-size="16.5" fill="#1a1a1a" text-anchor="middle" transform="rotate(-8 640 826)">CO</text><text x="688" y="830" font-size="16.5" fill="#1a1a1a" text-anchor="middle" transform="rotate(-8 688 830)">KG4</text><text x="708" y="850" font-size="16.5" fill="#1a1a1a" text-anchor="middle" transform="rotate(-8 708 850)">HH</text><text x="756" y="830" font-size="16.5" fill="#1a1a1a" text-anchor="middle" transform="rotate(-8 756 830)">HI</text><text x="797" y="830" font-size="16.5" fill="#1a1a1a" text-anchor="middle" transform="rotate(-8 797 830)">KP4</text><text x="868" y="826" font-size="16.5" fill="#1a1a1a" text-anchor="middle" transform="rotate(-8 868 826)">V2</text><text x="614" y="858" font-size="16.5" fill="#1a1a1a" text-anchor="middle" transform="rotate(-8 614 858)">ZF</text><text x="662" y="866" font-size="16.5" fill="#1a1a1a" text-anchor="middle" transform="rotate(-8 662 866)">6Y</text><text x="768" y="862" font-size="16.5" fill="#1a1a1a" text-anchor="middle" transform="rotate(-8 768 862)">KP5</text><text x="808" y="858" font-size="16.5" fill="#1a1a1a" text-anchor="middle" transform="rotate(-8 808 858)">KP2</text><text x="850" y="852" font-size="16.5" fill="#1a1a1a" text-anchor="middle" transform="rotate(-8 850 852)">V4</text><text x="888" y="850" font-size="16.5" fill="#1a1a1a" text-anchor="middle" transform="rotate(-8 888 850)">FM</text><text x="828" y="880" font-size="16.5" fill="#1a1a1a" text-anchor="middle" transform="rotate(-8 828 880)">YV0</text><text x="866" y="874" font-size="16.5" fill="#1a1a1a" text-anchor="middle" transform="rotate(-8 866 874)">J7</text><text x="908" y="878" font-size="16.5" fill="#1a1a1a" text-anchor="middle" transform="rotate(-8 908 878)">8P</text><text x="782" y="912" font-size="16.5" fill="#1a1a1a" text-anchor="middle" transform="rotate(-8 782 912)">P4 PJ2</text><text x="880" y="908" font-size="16.5" fill="#1a1a1a" text-anchor="middle" transform="rotate(-8 880 908)">J3 9Y</text><text x="530" y="890" font-size="16.5" fill="#1a1a1a" text-anchor="middle" transform="rotate(-8 530 890)">V3</text><text x="498" y="908" font-size="16.5" fill="#1a1a1a" text-anchor="middle" transform="rotate(-8 498 908)">TG</text><text x="516" y="946" font-size="16.5" fill="#1a1a1a" text-anchor="middle" transform="rotate(-8 516 946)">YS</text><text x="566" y="946" font-size="16.5" fill="#1a1a1a" text-anchor="middle" transform="rotate(-8 566 946)">YN</text><text x="642" y="932" font-size="16.5" fill="#1a1a1a" text-anchor="middle" transform="rotate(-8 642 932)">HK0[A]</text><text x="582" y="994" font-size="16.5" fill="#1a1a1a" text-anchor="middle" transform="rotate(-8 582 994)">TI</text><text x="636" y="996" font-size="16.5" fill="#1a1a1a" text-anchor="middle" transform="rotate(-8 636 996)">HP</text><text x="826" y="984" font-size="16.5" fill="#1a1a1a" text-anchor="middle" transform="rotate(-8 826 984)">YV</text><text x="928" y="976" font-size="16.5" fill="#1a1a1a" text-anchor="middle" transform="rotate(-8 928 976)">8R</text><text x="972" y="980" font-size="16.5" fill="#1a1a1a" text-anchor="middle" transform="rotate(-8 972 980)">PZ</text><text x="1010" y="974" font-size="16.5" fill="#1a1a1a" text-anchor="middle" transform="rotate(-8 1010 974)">FY</text><text x="778" y="658" font-size="16.5" fill="#1a1a1a" text-anchor="middle" transform="rotate(-8 778 658)">VP9</text><text x="688" y="580" font-size="16.5" fill="#1a1a1a" text-anchor="middle" transform="rotate(-8 688 580)">W/K/N</text><text x="780" y="496" font-size="16.5" fill="#1a1a1a" text-anchor="middle" transform="rotate(-8 780 496)">CY0</text><text x="748" y="446" font-size="16.5" fill="#1a1a1a" text-anchor="middle" transform="rotate(-8 748 446)">CY9</text><text x="794" y="458" font-size="16.5" fill="#1a1a1a" text-anchor="middle" transform="rotate(-8 794 458)">FP</text><path d="M590 505h30M594 499h24M605 499v30" stroke="#222" stroke-width="2" fill="none"/><circle cx="605" cy="535" r="6.5" fill="#f01010" stroke="#700" stroke-width="1"/><g transform="translate(515 517) rotate(-5) scale(3.0)"><rect x="-13" y="-3.5" width="9.5" height="7" fill="#2a5cc0" stroke="#16357a" stroke-width="0.5"/><rect x="3.5" y="-3.5" width="9.5" height="7" fill="#2a5cc0" stroke="#16357a" stroke-width="0.5"/><path d="M-10 -3.5v7M-7 -3.5v7M6.5 -3.5v7M9.5 -3.5v7M-13 0h9.5M3.5 0h9.5" stroke="#7fa4e8" stroke-width="0.5" fill="none"/><rect x="-3" y="-6" width="6" height="12" rx="1" fill="#d8a820" stroke="#8a6a10" stroke-width="0.5"/><path d="M0 -6v-3M-2.5 -10.5h5l-2.5 2z" stroke="#4a78c8" stroke-width="1" fill="#4a78c8"/></g></svg>
<div class="a" style="left:1529px;top:613px;width:48px;height:18px;background:rgba(255,255,255,0.9);"></div>
<div class="t" style="top:614px;height:17px;line-height:17px;font-size:14px;font-weight:bold;letter-spacing:-0.276px;left:1533.5px;">RS-44</div>
<!-- p5_status -->
<div class="a" style="left:1px;top:991px;width:1911px;height:35px;background:linear-gradient(90deg,#f0f0f0 0%,#f2f2f2 35%,#fcfcfc 100%);"></div>
<svg class="a" style="left:15px;top:1001px" width="14" height="14" viewBox="-7 -7 14 14"><circle r="6.2" fill="#00ff00"/></svg>
<div class="t" style="top:1000px;height:19px;line-height:19px;font-size:14px;letter-spacing:-0.283px;left:37px;">Satellite Data</div>
<svg class="a" style="left:125px;top:1001px" width="14" height="14" viewBox="-7 -7 14 14"><circle r="6.2" fill="#00ff00"/></svg>
<div class="t" style="top:1000px;height:19px;line-height:19px;font-size:12.75px;letter-spacing:-0.64px;left:147px;">SDR</div>
<svg class="a" style="left:188px;top:1001px" width="14" height="14" viewBox="-7 -7 14 14"><circle r="6.2" fill="#00ff00"/></svg>
<div class="t" style="top:1000px;height:19px;line-height:19px;font-size:13.75px;letter-spacing:-0.267px;left:210px;">Soundcard</div>
<svg class="a" style="left:304px;top:1001px" width="14" height="14" viewBox="-7 -7 14 14"><circle r="6.2" fill="#00ff00"/></svg>
<div class="t" style="top:1000px;height:19px;line-height:19px;font-size:14px;letter-spacing:0.013px;left:326px;">Output Stream</div>
<svg class="a" style="left:425.3px;top:1001px" width="14" height="14" viewBox="-7 -7 14 14"><circle r="6.2" fill="#808080"/></svg>
<div class="t" style="top:1000px;height:19px;line-height:19px;font-size:12.75px;letter-spacing:-0.518px;left:448.4px;">RX CAT</div>
<svg class="a" style="left:500px;top:1001px" width="14" height="14" viewBox="-7 -7 14 14"><circle r="6.2" fill="#00ff00"/></svg>
<div class="t" style="top:1000px;height:19px;line-height:19px;font-size:12.75px;letter-spacing:-0.415px;left:522.5px;">TX CAT</div>
<svg class="a" style="left:572.8px;top:1001px" width="14" height="14" viewBox="-7 -7 14 14"><circle r="6.2" fill="#00ff00"/></svg>
<div class="t" style="top:1000px;height:19px;line-height:19px;font-size:14px;letter-spacing:-0.03px;left:595px;">Rotator</div>
<svg class="a" style="left:291px;top:1007px" width="7" height="4" viewBox="0 0 7 4"><path d="M0 0h7l-3.5 4z" fill="#222"/></svg>
<div class="t" style="top:1001px;height:17px;line-height:17px;font-size:11.5px;letter-spacing:-0.243px;left:661.5px;">CPU Load: 10.2%</div>
<svg class="a" style="left:1898px;top:1012px" width="13" height="13" viewBox="0 0 13 13"><g fill="#8c8c8c"><rect x="9" y="1" width="2" height="2"/><rect x="5" y="5" width="2" height="2"/><rect x="9" y="5" width="2" height="2"/><rect x="1" y="9" width="2" height="2"/><rect x="5" y="9" width="2" height="2"/><rect x="9" y="9" width="2" height="2"/></g></svg>
</body></html>
